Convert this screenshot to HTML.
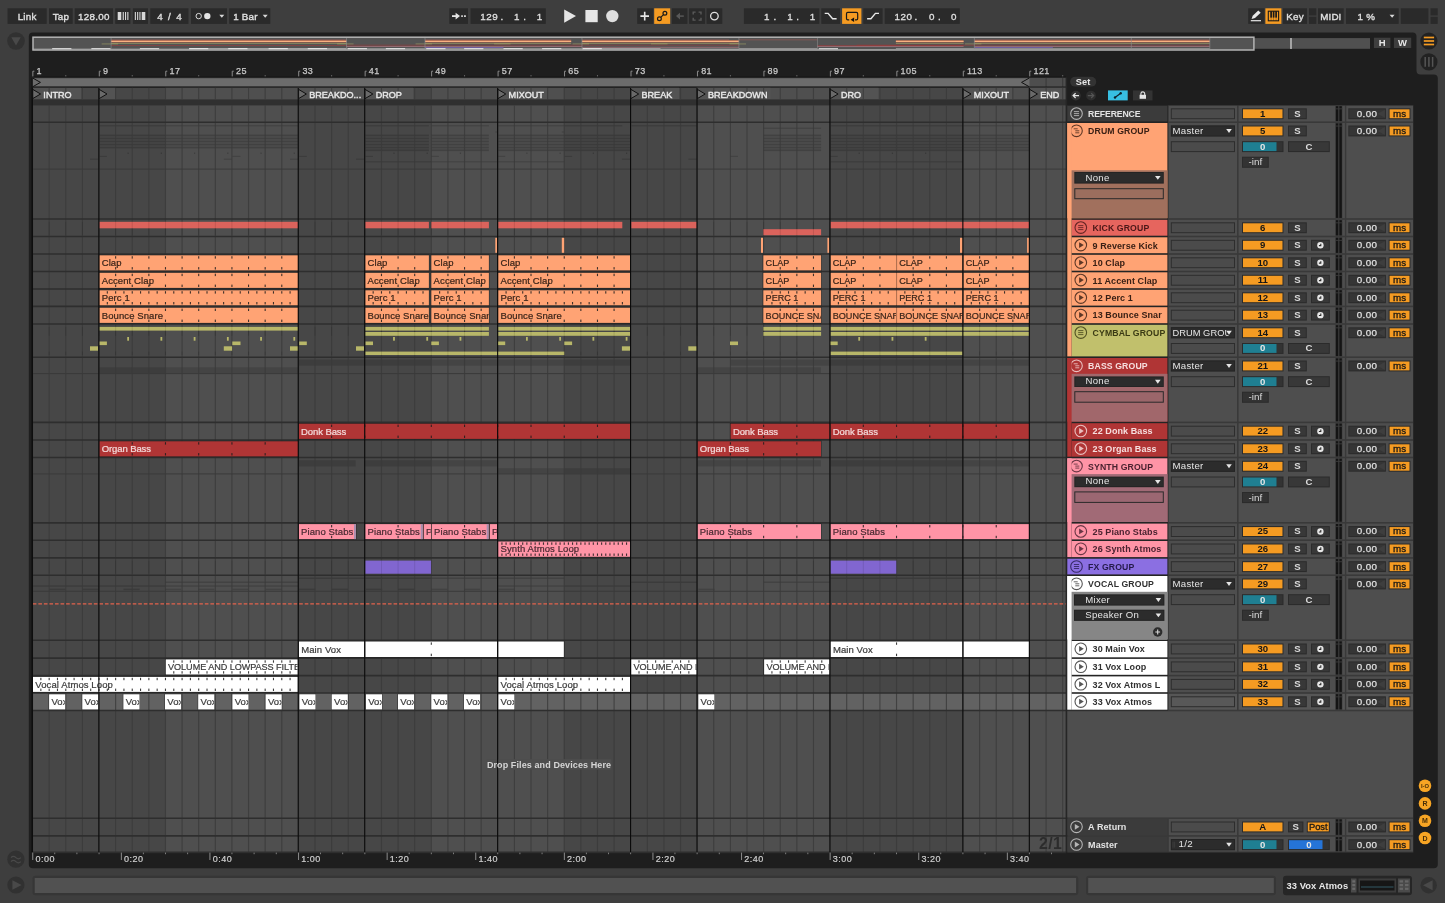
<!DOCTYPE html>
<html><head><meta charset="utf-8"><title>Live Set</title>
<style>
html,body{margin:0;padding:0;background:#3e3e3e;overflow:hidden}
body{width:1445px;height:903px;position:relative;font-family:"Liberation Sans",sans-serif}
svg{position:absolute;left:0;top:0;display:block;will-change:transform}
svg text{font-family:"Liberation Sans",sans-serif;white-space:pre}
</style></head><body>
<svg width="1445" height="903" viewBox="0 0 1445 903">
<rect x="0" y="0" width="1445" height="903" fill="#3e3e3e"/>
<path d="M33 32.4 H1412.5 a4 4 0 0 1 4 4 V70.5 a4 4 0 0 0 4 4 H1433.8 a4 4 0 0 1 4 4 V864.2 a4 4 0 0 1 -4 4 H32.8 a4 4 0 0 1 -4 -4 V36.4 a4 4 0 0 1 4 -4 Z" fill="#1e1e1e"/>
<rect x="7.5" y="8.3" width="39.2" height="15.6" fill="#2a2a2a"/>
<text x="27.1" y="19.7" font-size="9.8" fill="#e0e0e0" text-anchor="middle" letter-spacing="0.2" stroke="#e0e0e0" stroke-width="0.35">Link</text>
<rect x="49" y="8.3" width="23.7" height="15.6" fill="#2a2a2a"/>
<text x="60.85" y="19.7" font-size="9.8" fill="#e0e0e0" text-anchor="middle" letter-spacing="0.2" stroke="#e0e0e0" stroke-width="0.35">Tap</text>
<rect x="74.7" y="8.3" width="38.3" height="15.6" fill="#2a2a2a"/>
<text x="93.85" y="19.7" font-size="9.8" fill="#e0e0e0" text-anchor="middle" letter-spacing="0.25" stroke="#e0e0e0" stroke-width="0.35">128.00</text>
<rect x="115.2" y="8.3" width="15.2" height="15.6" fill="#2a2a2a"/>
<rect x="132.9" y="8.3" width="15.1" height="15.6" fill="#2a2a2a"/>
<rect x="117.7" y="12" width="3.6" height="8" fill="#d8d8d8"/>
<rect x="122.7" y="12" width="1.1" height="8" fill="#d8d8d8"/>
<rect x="125" y="12" width="1.1" height="8" fill="#d8d8d8"/>
<rect x="127.3" y="12" width="1.1" height="8" fill="#d8d8d8"/>
<rect x="134.8" y="12" width="1.1" height="8" fill="#d8d8d8"/>
<rect x="137.1" y="12" width="1.1" height="8" fill="#d8d8d8"/>
<rect x="139.4" y="12" width="1.1" height="8" fill="#d8d8d8"/>
<rect x="141.7" y="12" width="3.6" height="8" fill="#d8d8d8"/>
<rect x="150.3" y="8.3" width="38.2" height="15.6" fill="#2a2a2a"/>
<text x="169.4" y="19.7" font-size="9.8" fill="#e0e0e0" text-anchor="middle" stroke="#e0e0e0" stroke-width="0.35">4&#160;&#160;/&#160;&#160;4</text>
<rect x="191" y="8.3" width="36" height="15.6" fill="#2a2a2a"/>
<circle cx="198.7" cy="16.1" r="2.7" fill="none" stroke="#d8d8d8" stroke-width="1"/>
<circle cx="207.3" cy="16.1" r="3.2" fill="#e4e4e4"/>
<path d="M219.3 14.8 h5 l-2.5 2.9 z" fill="#d8d8d8"/>
<rect x="229.2" y="8.3" width="41.1" height="15.6" fill="#2a2a2a"/>
<text x="233.2" y="19.7" font-size="9.8" fill="#e0e0e0" letter-spacing="0.2" stroke="#e0e0e0" stroke-width="0.35">1 Bar</text>
<path d="M262.7 14.8 h5 l-2.5 2.9 z" fill="#d8d8d8"/>
<rect x="449.3" y="8.3" width="18.7" height="15.6" fill="#2a2a2a"/>
<path d="M452 16.1 h4.5" stroke="#e6e6e6" stroke-width="1.8"/><path d="M455.6 12.7 l4.4 3.4 l-4.4 3.4 z" fill="#e6e6e6"/>
<path d="M461.2 16.1 h1.7 M464 16.1 h1.9" stroke="#d0d0d0" stroke-width="1.6"/>
<rect x="470.5" y="8.3" width="75.3" height="15.6" fill="#2a2a2a"/>
<text x="498.2" y="19.7" font-size="9.8" fill="#e0e0e0" text-anchor="end" letter-spacing="0.5" stroke="#e0e0e0" stroke-width="0.3">129</text>
<text x="520" y="19.7" font-size="9.8" fill="#e0e0e0" text-anchor="end" letter-spacing="0.5" stroke="#e0e0e0" stroke-width="0.3">1</text>
<text x="542.8" y="19.7" font-size="9.8" fill="#e0e0e0" text-anchor="end" letter-spacing="0.5" stroke="#e0e0e0" stroke-width="0.3">1</text>
<text x="500.4" y="19.7" font-size="9.8" fill="#e0e0e0" stroke="#e0e0e0" stroke-width="0.3">.</text>
<text x="523.2" y="19.7" font-size="9.8" fill="#e0e0e0" stroke="#e0e0e0" stroke-width="0.3">.</text>
<path d="M564.2 9.4 L576 16.1 L564.2 22.8 Z" fill="#e6e6e6"/>
<rect x="585.4" y="10" width="12.3" height="12.2" fill="#e6e6e6"/>
<circle cx="612.3" cy="16.1" r="6.2" fill="#dedede"/>
<rect x="637.2" y="8.3" width="16" height="15.6" fill="#2a2a2a"/>
<path d="M640.4 16.1 h8.6 M644.7 11.8 v8.6" stroke="#e6e6e6" stroke-width="1.6"/>
<rect x="654.2" y="8.3" width="16" height="15.6" fill="#f59b22"/>
<path d="M660.7 17.4 L663.6 14.6" stroke="#1a1a1a" stroke-width="1.2"/><circle cx="659.4" cy="18.7" r="1.9" fill="none" stroke="#1a1a1a" stroke-width="1.2"/><circle cx="664.9" cy="13.3" r="1.9" fill="none" stroke="#1a1a1a" stroke-width="1.2"/>
<rect x="671.9" y="8.3" width="15.5" height="15.6" fill="#2a2a2a"/>
<path d="M676 16.1 l4 -3.3 v6.6 z" fill="#585858"/><path d="M679.5 16.1 h4.3" stroke="#585858" stroke-width="1.5"/>
<rect x="689.1" y="8.3" width="16" height="15.6" fill="#2a2a2a"/>
<path d="M693.2 14.5 v-2.4 h2.4 M698.6 12.1 h2.4 v2.4 M701 17.7 v2.4 h-2.4 M695.6 20.1 h-2.4 v-2.4" stroke="#5a5a5a" stroke-width="1.4" fill="none"/>
<rect x="706.5" y="8.3" width="15.8" height="15.6" fill="#2a2a2a"/>
<circle cx="714.4" cy="16.1" r="3.8" fill="none" stroke="#e0e0e0" stroke-width="1.3"/>
<rect x="743.9" y="8.3" width="75.4" height="15.6" fill="#2a2a2a"/>
<text x="770" y="19.7" font-size="9.8" fill="#e0e0e0" text-anchor="end" letter-spacing="0.5" stroke="#e0e0e0" stroke-width="0.3">1</text>
<text x="793.2" y="19.7" font-size="9.8" fill="#e0e0e0" text-anchor="end" letter-spacing="0.5" stroke="#e0e0e0" stroke-width="0.3">1</text>
<text x="815.8" y="19.7" font-size="9.8" fill="#e0e0e0" text-anchor="end" letter-spacing="0.5" stroke="#e0e0e0" stroke-width="0.3">1</text>
<text x="773.6" y="19.7" font-size="9.8" fill="#e0e0e0" stroke="#e0e0e0" stroke-width="0.3">.</text>
<text x="796.2" y="19.7" font-size="9.8" fill="#e0e0e0" stroke="#e0e0e0" stroke-width="0.3">.</text>
<rect x="821.3" y="8.3" width="18.7" height="15.6" fill="#2a2a2a"/>
<path d="M824.7 13.4 h3.4 l4.5 5.4 h4" stroke="#e8e8e8" stroke-width="1.4" fill="none"/>
<rect x="842.1" y="8.3" width="19.3" height="15.6" fill="#f59b22"/>
<path d="M849.2 19.8 h-1.4 a1.3 1.3 0 0 1 -1.3 -1.3 v-4.8 a1.3 1.3 0 0 1 1.3 -1.3 h8.6 a1.3 1.3 0 0 1 1.3 1.3 v4.8 a1.3 1.3 0 0 1 -1.3 1.3 h-1.4" stroke="#1a1a1a" stroke-width="1.2" fill="none"/><path d="M854.1 17.5 v4.6 l-3.5 -2.3 z" fill="#111"/>
<rect x="863.3" y="8.3" width="19.3" height="15.6" fill="#2a2a2a"/>
<path d="M867.1 18.8 h3.8 l4.5 -5.4 h3.6" stroke="#e8e8e8" stroke-width="1.4" fill="none"/>
<rect x="884.7" y="8.3" width="75.1" height="15.6" fill="#2a2a2a"/>
<text x="912.4" y="19.7" font-size="9.8" fill="#e0e0e0" text-anchor="end" letter-spacing="0.5" stroke="#e0e0e0" stroke-width="0.3">120</text>
<text x="935" y="19.7" font-size="9.8" fill="#e0e0e0" text-anchor="end" letter-spacing="0.5" stroke="#e0e0e0" stroke-width="0.3">0</text>
<text x="957" y="19.7" font-size="9.8" fill="#e0e0e0" text-anchor="end" letter-spacing="0.5" stroke="#e0e0e0" stroke-width="0.3">0</text>
<text x="914.6" y="19.7" font-size="9.8" fill="#e0e0e0" stroke="#e0e0e0" stroke-width="0.3">.</text>
<text x="938" y="19.7" font-size="9.8" fill="#e0e0e0" stroke="#e0e0e0" stroke-width="0.3">.</text>
<rect x="1248.2" y="8.3" width="16.2" height="15.6" fill="#2a2a2a"/>
<path d="M1251.6 18.9 l1.1 -3.2 l5.6 -5.3 l2.4 2.4 l-5.7 5.3 z" fill="#e8e8e8"/><path d="M1250.8 20.7 h10.2" stroke="#e8e8e8" stroke-width="1.2"/>
<rect x="1265.4" y="8.3" width="16" height="15.6" fill="#f59b22"/>
<rect x="1268.3" y="11.2" width="10.3" height="9.6" fill="none" stroke="#1a1a1a" stroke-width="1.1"/>
<rect x="1270.25" y="11.2" width="1.7" height="6.4" fill="#1a1a1a"/>
<line x1="1271.1" y1="17" x2="1271.1" y2="20.8" stroke="#1a1a1a" stroke-width="0.5" opacity="0.6"/>
<rect x="1272.75" y="11.2" width="1.7" height="6.4" fill="#1a1a1a"/>
<line x1="1273.6" y1="17" x2="1273.6" y2="20.8" stroke="#1a1a1a" stroke-width="0.5" opacity="0.6"/>
<rect x="1275.25" y="11.2" width="1.7" height="6.4" fill="#1a1a1a"/>
<line x1="1276.1" y1="17" x2="1276.1" y2="20.8" stroke="#1a1a1a" stroke-width="0.5" opacity="0.6"/>
<rect x="1283" y="8.3" width="24" height="15.6" fill="#2a2a2a"/>
<text x="1295" y="19.7" font-size="9.8" fill="#e0e0e0" text-anchor="middle" letter-spacing="0.2" stroke="#e0e0e0" stroke-width="0.35">Key</text>
<rect x="1309" y="8.3" width="7.3" height="7.1" fill="#2a2a2a"/>
<rect x="1309" y="16.8" width="7.3" height="7.1" fill="#2a2a2a"/>
<rect x="1318" y="8.3" width="25.7" height="15.6" fill="#2a2a2a"/>
<text x="1330.85" y="19.7" font-size="9.8" fill="#e0e0e0" text-anchor="middle" letter-spacing="0.1" stroke="#e0e0e0" stroke-width="0.35">MIDI</text>
<rect x="1346" y="8.3" width="52.7" height="15.6" fill="#2a2a2a"/>
<text x="1366.5" y="19.7" font-size="9.8" fill="#e0e0e0" text-anchor="middle" letter-spacing="0.3" stroke="#e0e0e0" stroke-width="0.35">1 %</text>
<path d="M1389.6 14.8 h5 l-2.5 2.9 z" fill="#d8d8d8"/>
<rect x="1400.8" y="8.3" width="27.6" height="15.6" fill="#2a2a2a"/>
<rect x="1430.5" y="8.3" width="7.2" height="7.1" fill="#2a2a2a"/>
<rect x="1430.5" y="16.8" width="7.2" height="7.1" fill="#2a2a2a"/>
<circle cx="16" cy="41" r="8.8" fill="#313131"/><path d="M11.3 37.2 h9.4 l-4.7 8.2 z" fill="#494949"/>
<circle cx="1428.9" cy="41" r="8.6" fill="#222"/>
<line x1="1423.8" y1="37.5" x2="1434.1" y2="37.5" stroke="#f59b22" stroke-width="1.7"/>
<line x1="1423.8" y1="41" x2="1434.1" y2="41" stroke="#f59b22" stroke-width="1.7"/>
<line x1="1423.8" y1="44.5" x2="1434.1" y2="44.5" stroke="#f59b22" stroke-width="1.7"/>
<circle cx="1428.9" cy="61.9" r="8.6" fill="#222"/>
<line x1="1425.2" y1="57" x2="1425.2" y2="66.8" stroke="#555" stroke-width="1.5"/>
<line x1="1428.9" y1="57" x2="1428.9" y2="66.8" stroke="#555" stroke-width="1.5"/>
<line x1="1432.6" y1="57" x2="1432.6" y2="66.8" stroke="#555" stroke-width="1.5"/>
<circle cx="15.9" cy="859.2" r="8.6" fill="#313131"/><path d="M11 857.6 q2.4 -2.6 4.9 0 t4.9 0 M11 861.6 q2.4 -2.6 4.9 0 t4.9 0" stroke="#494949" stroke-width="1.2" fill="none"/>
<circle cx="15.9" cy="885" r="8.6" fill="#313131"/><path d="M12.4 880.2 L21.6 885 L12.4 889.8 Z" fill="#494949"/>
<circle cx="1428.7" cy="885.3" r="8.2" fill="#313131"/><path d="M1432.6 880.3 L1423 885.3 L1432.6 890.3 Z" fill="#494949"/>
<circle cx="1425" cy="785.7" r="6.3" fill="#f7a524"/>
<text x="1425" y="788.2" font-size="5.8" fill="#4a3008" font-weight="bold" text-anchor="middle">I-O</text>
<circle cx="1425" cy="803.4" r="6.3" fill="#f7a524"/>
<text x="1425" y="805.9" font-size="7" fill="#4a3008" font-weight="bold" text-anchor="middle">R</text>
<circle cx="1425" cy="820.7" r="6.3" fill="#f7a524"/>
<text x="1425" y="823.2" font-size="7" fill="#4a3008" font-weight="bold" text-anchor="middle">M</text>
<circle cx="1425" cy="838" r="6.3" fill="#f7a524"/>
<text x="1425" y="840.5" font-size="7" fill="#4a3008" font-weight="bold" text-anchor="middle">D</text>
<rect x="32.5" y="875.8" width="1045.8" height="19.4" fill="#363636" rx="3"/>
<rect x="34.7" y="878" width="1041.4" height="15" fill="#515151"/>
<rect x="1086" y="875.8" width="190" height="19.4" fill="#363636" rx="3"/>
<rect x="1088.2" y="878" width="185.6" height="15" fill="#515151"/>
<rect x="1283" y="875.8" width="129" height="19.4" fill="#262626" rx="3"/>
<text x="1286.5" y="889.3" font-size="9.3" fill="#e8e8e8" font-weight="bold" letter-spacing="0.1">33 Vox Atmos</text>
<rect x="1351" y="878.5" width="5.5" height="14" fill="#4a4a4a"/>
<rect x="1358.5" y="878.5" width="37.5" height="14" fill="#3c3c3c"/>
<rect x="1360" y="880.5" width="34.5" height="10" fill="#161616"/>
<rect x="1398" y="878.5" width="12" height="14" fill="#4a4a4a"/>
<rect x="1352.3" y="880.3" width="2.9" height="2.2" fill="#6a6a6a"/>
<rect x="1399.5" y="880.3" width="3.5" height="2.2" fill="#666"/>
<rect x="1405" y="880.3" width="3.5" height="2.2" fill="#666"/>
<rect x="1352.3" y="884" width="2.9" height="2.2" fill="#6a6a6a"/>
<rect x="1399.5" y="884" width="3.5" height="2.2" fill="#666"/>
<rect x="1405" y="884" width="3.5" height="2.2" fill="#666"/>
<rect x="1352.3" y="887.7" width="2.9" height="2.2" fill="#6a6a6a"/>
<rect x="1399.5" y="887.7" width="3.5" height="2.2" fill="#666"/>
<rect x="1405" y="887.7" width="3.5" height="2.2" fill="#666"/>
<line x1="1361" y1="887" x2="1393.5" y2="887" stroke="#3a6a7a" stroke-width="0.8"/>
<path d="M32.85 76.6 V71.2 h1.5" stroke="#8a8a8a" stroke-width="1" fill="none"/>
<text x="36.55" y="74.3" font-size="9" fill="#cacaca" letter-spacing="0.45" stroke="#cacaca" stroke-width="0.25">1</text>
<path d="M99.31 76.6 V71.2 h1.5" stroke="#8a8a8a" stroke-width="1" fill="none"/>
<text x="103.01" y="74.3" font-size="9" fill="#cacaca" letter-spacing="0.45" stroke="#cacaca" stroke-width="0.25">9</text>
<path d="M165.77 76.6 V71.2 h1.5" stroke="#8a8a8a" stroke-width="1" fill="none"/>
<text x="169.47" y="74.3" font-size="9" fill="#cacaca" letter-spacing="0.45" stroke="#cacaca" stroke-width="0.25">17</text>
<path d="M232.23 76.6 V71.2 h1.5" stroke="#8a8a8a" stroke-width="1" fill="none"/>
<text x="235.93" y="74.3" font-size="9" fill="#cacaca" letter-spacing="0.45" stroke="#cacaca" stroke-width="0.25">25</text>
<path d="M298.69 76.6 V71.2 h1.5" stroke="#8a8a8a" stroke-width="1" fill="none"/>
<text x="302.39" y="74.3" font-size="9" fill="#cacaca" letter-spacing="0.45" stroke="#cacaca" stroke-width="0.25">33</text>
<path d="M365.15 76.6 V71.2 h1.5" stroke="#8a8a8a" stroke-width="1" fill="none"/>
<text x="368.85" y="74.3" font-size="9" fill="#cacaca" letter-spacing="0.45" stroke="#cacaca" stroke-width="0.25">41</text>
<path d="M431.61 76.6 V71.2 h1.5" stroke="#8a8a8a" stroke-width="1" fill="none"/>
<text x="435.31" y="74.3" font-size="9" fill="#cacaca" letter-spacing="0.45" stroke="#cacaca" stroke-width="0.25">49</text>
<path d="M498.08 76.6 V71.2 h1.5" stroke="#8a8a8a" stroke-width="1" fill="none"/>
<text x="501.78" y="74.3" font-size="9" fill="#cacaca" letter-spacing="0.45" stroke="#cacaca" stroke-width="0.25">57</text>
<path d="M564.54 76.6 V71.2 h1.5" stroke="#8a8a8a" stroke-width="1" fill="none"/>
<text x="568.24" y="74.3" font-size="9" fill="#cacaca" letter-spacing="0.45" stroke="#cacaca" stroke-width="0.25">65</text>
<path d="M631 76.6 V71.2 h1.5" stroke="#8a8a8a" stroke-width="1" fill="none"/>
<text x="634.7" y="74.3" font-size="9" fill="#cacaca" letter-spacing="0.45" stroke="#cacaca" stroke-width="0.25">73</text>
<path d="M697.46 76.6 V71.2 h1.5" stroke="#8a8a8a" stroke-width="1" fill="none"/>
<text x="701.16" y="74.3" font-size="9" fill="#cacaca" letter-spacing="0.45" stroke="#cacaca" stroke-width="0.25">81</text>
<path d="M763.92 76.6 V71.2 h1.5" stroke="#8a8a8a" stroke-width="1" fill="none"/>
<text x="767.62" y="74.3" font-size="9" fill="#cacaca" letter-spacing="0.45" stroke="#cacaca" stroke-width="0.25">89</text>
<path d="M830.38 76.6 V71.2 h1.5" stroke="#8a8a8a" stroke-width="1" fill="none"/>
<text x="834.08" y="74.3" font-size="9" fill="#cacaca" letter-spacing="0.45" stroke="#cacaca" stroke-width="0.25">97</text>
<path d="M896.84 76.6 V71.2 h1.5" stroke="#8a8a8a" stroke-width="1" fill="none"/>
<text x="900.54" y="74.3" font-size="9" fill="#cacaca" letter-spacing="0.45" stroke="#cacaca" stroke-width="0.25">105</text>
<path d="M963.3 76.6 V71.2 h1.5" stroke="#8a8a8a" stroke-width="1" fill="none"/>
<text x="967" y="74.3" font-size="9" fill="#cacaca" letter-spacing="0.45" stroke="#cacaca" stroke-width="0.25">113</text>
<path d="M1029.76 76.6 V71.2 h1.5" stroke="#8a8a8a" stroke-width="1" fill="none"/>
<text x="1033.46" y="74.3" font-size="9" fill="#cacaca" letter-spacing="0.45" stroke="#cacaca" stroke-width="0.25">121</text>
<rect x="65.28" y="75.2" width="1" height="1.3" fill="#777"/>
<rect x="131.74" y="75.2" width="1" height="1.3" fill="#777"/>
<rect x="198.2" y="75.2" width="1" height="1.3" fill="#777"/>
<rect x="264.66" y="75.2" width="1" height="1.3" fill="#777"/>
<rect x="331.12" y="75.2" width="1" height="1.3" fill="#777"/>
<rect x="397.58" y="75.2" width="1" height="1.3" fill="#777"/>
<rect x="464.05" y="75.2" width="1" height="1.3" fill="#777"/>
<rect x="530.51" y="75.2" width="1" height="1.3" fill="#777"/>
<rect x="596.97" y="75.2" width="1" height="1.3" fill="#777"/>
<rect x="663.43" y="75.2" width="1" height="1.3" fill="#777"/>
<rect x="729.89" y="75.2" width="1" height="1.3" fill="#777"/>
<rect x="796.35" y="75.2" width="1" height="1.3" fill="#777"/>
<rect x="862.81" y="75.2" width="1" height="1.3" fill="#777"/>
<rect x="929.27" y="75.2" width="1" height="1.3" fill="#777"/>
<rect x="995.73" y="75.2" width="1" height="1.3" fill="#777"/>
<rect x="1062.19" y="75.2" width="1" height="1.3" fill="#777"/>
<line x1="32.3" y1="77.2" x2="1066" y2="77.2" stroke="#111" stroke-width="1"/>
<rect x="32.3" y="77.7" width="1033.7" height="9.3" fill="#4e4e4e"/>
<line x1="1046.08" y1="77.8" x2="1046.08" y2="87" stroke="#3a3a3a" stroke-width="1.2" opacity="0.9"/>
<line x1="1062.69" y1="77.8" x2="1062.69" y2="87" stroke="#3a3a3a" stroke-width="1.2" opacity="0.9"/>
<rect x="32.55" y="78.4" width="996.91" height="8" fill="#6c6c6c"/>
<path d="M32.85 78.1 L40.45 82.4 L32.85 86.7" fill="none" stroke="#111" stroke-width="1"/>
<path d="M1029.16 78.1 L1021.56 82.4 L1029.16 86.7" fill="none" stroke="#111" stroke-width="1"/>
<line x1="32.3" y1="87.2" x2="1066" y2="87.2" stroke="#1a1a1a" stroke-width="1.2"/>
<rect x="32.3" y="87.8" width="1033.7" height="764.4" fill="#474747"/>
<rect x="165.47" y="87.8" width="132.92" height="764.4" fill="#4f4f4f"/>
<rect x="431.31" y="87.8" width="132.92" height="764.4" fill="#4f4f4f"/>
<rect x="697.16" y="87.8" width="132.92" height="764.4" fill="#4f4f4f"/>
<rect x="963" y="87.8" width="103" height="764.4" fill="#4f4f4f"/>
<rect x="32.55" y="87.8" width="48.5" height="11.6" fill="#535353"/>
<rect x="99.01" y="87.8" width="16" height="11.6" fill="#535353"/>
<rect x="298.39" y="87.8" width="65.8" height="11.6" fill="#535353"/>
<rect x="364.85" y="87.8" width="48.5" height="11.6" fill="#535353"/>
<rect x="497.78" y="87.8" width="49.11" height="11.6" fill="#535353"/>
<rect x="630.7" y="87.8" width="48.5" height="11.6" fill="#535353"/>
<rect x="697.16" y="87.8" width="73.32" height="11.6" fill="#535353"/>
<rect x="830.08" y="87.8" width="48.5" height="11.6" fill="#535353"/>
<rect x="963" y="87.8" width="49.11" height="11.6" fill="#535353"/>
<rect x="1029.46" y="87.8" width="36.54" height="11.6" fill="#535353"/>
<rect x="32.3" y="99.4" width="1033.7" height="6" fill="#303030"/>
<rect x="32.3" y="693" width="1033.7" height="17.5" fill="#626262"/>
<rect x="99.41" y="134.6" width="198.58" height="1.7" fill="#000" opacity="0.17"/>
<rect x="99.41" y="137.6" width="198.58" height="1.7" fill="#000" opacity="0.17"/>
<rect x="99.41" y="140.6" width="198.58" height="1.7" fill="#000" opacity="0.17"/>
<rect x="99.41" y="143.7" width="198.58" height="1.7" fill="#000" opacity="0.17"/>
<rect x="99.41" y="146.7" width="198.58" height="1.7" fill="#000" opacity="0.17"/>
<rect x="365.25" y="134.6" width="63.65" height="1.7" fill="#000" opacity="0.17"/>
<rect x="365.25" y="137.6" width="63.65" height="1.7" fill="#000" opacity="0.17"/>
<rect x="365.25" y="140.6" width="63.65" height="1.7" fill="#000" opacity="0.17"/>
<rect x="365.25" y="143.7" width="63.65" height="1.7" fill="#000" opacity="0.17"/>
<rect x="365.25" y="146.7" width="63.65" height="1.7" fill="#000" opacity="0.17"/>
<rect x="365.25" y="149.4" width="63.65" height="1.7" fill="#000" opacity="0.17"/>
<rect x="431.3" y="134.6" width="57.6" height="1.7" fill="#000" opacity="0.17"/>
<rect x="431.3" y="137.6" width="57.6" height="1.7" fill="#000" opacity="0.17"/>
<rect x="431.3" y="140.6" width="57.6" height="1.7" fill="#000" opacity="0.17"/>
<rect x="431.3" y="143.7" width="57.6" height="1.7" fill="#000" opacity="0.17"/>
<rect x="431.3" y="146.7" width="57.6" height="1.7" fill="#000" opacity="0.17"/>
<rect x="431.3" y="149.4" width="57.6" height="1.7" fill="#000" opacity="0.17"/>
<rect x="498.18" y="134.6" width="132.12" height="1.7" fill="#000" opacity="0.17"/>
<rect x="498.18" y="137.6" width="132.12" height="1.7" fill="#000" opacity="0.17"/>
<rect x="498.18" y="140.6" width="132.12" height="1.7" fill="#000" opacity="0.17"/>
<rect x="498.18" y="143.7" width="132.12" height="1.7" fill="#000" opacity="0.17"/>
<rect x="498.18" y="146.7" width="132.12" height="1.7" fill="#000" opacity="0.17"/>
<rect x="498.18" y="149.4" width="132.12" height="1.7" fill="#000" opacity="0.17"/>
<rect x="763.3" y="134.6" width="57.8" height="1.7" fill="#000" opacity="0.17"/>
<rect x="763.3" y="137.6" width="57.8" height="1.7" fill="#000" opacity="0.17"/>
<rect x="763.3" y="140.6" width="57.8" height="1.7" fill="#000" opacity="0.17"/>
<rect x="763.3" y="143.7" width="57.8" height="1.7" fill="#000" opacity="0.17"/>
<rect x="763.3" y="146.7" width="57.8" height="1.7" fill="#000" opacity="0.17"/>
<rect x="763.3" y="149.4" width="57.8" height="1.7" fill="#000" opacity="0.17"/>
<rect x="830.48" y="134.6" width="198.58" height="1.7" fill="#000" opacity="0.17"/>
<rect x="830.48" y="137.6" width="198.58" height="1.7" fill="#000" opacity="0.17"/>
<rect x="830.48" y="140.6" width="198.58" height="1.7" fill="#000" opacity="0.17"/>
<rect x="830.48" y="143.7" width="198.58" height="1.7" fill="#000" opacity="0.17"/>
<rect x="830.48" y="146.7" width="198.58" height="1.7" fill="#000" opacity="0.17"/>
<rect x="830.48" y="149.4" width="198.58" height="1.7" fill="#000" opacity="0.17"/>
<rect x="99.41" y="125.1" width="198.58" height="1.3" fill="#000" opacity="0.15"/>
<rect x="365.25" y="125.1" width="63.65" height="1.3" fill="#000" opacity="0.15"/>
<rect x="431.3" y="125.1" width="57.6" height="1.3" fill="#000" opacity="0.15"/>
<rect x="498.18" y="125.1" width="124.12" height="1.3" fill="#000" opacity="0.15"/>
<rect x="631.3" y="125.1" width="65.5" height="1.3" fill="#000" opacity="0.15"/>
<rect x="830.48" y="125.1" width="198.58" height="1.3" fill="#000" opacity="0.15"/>
<rect x="763.3" y="127.6" width="57.8" height="1.3" fill="#000" opacity="0.15"/>
<rect x="127.53" y="152.5" width="1.2" height="1.5" fill="#000" opacity="0.2"/>
<rect x="160.76" y="152.5" width="1.2" height="1.5" fill="#000" opacity="0.2"/>
<rect x="193.99" y="152.5" width="1.2" height="1.5" fill="#000" opacity="0.2"/>
<rect x="227.22" y="152.5" width="1.2" height="1.5" fill="#000" opacity="0.2"/>
<rect x="260.46" y="152.5" width="1.2" height="1.5" fill="#000" opacity="0.2"/>
<rect x="293.69" y="152.5" width="1.2" height="1.5" fill="#000" opacity="0.2"/>
<rect x="393.38" y="152.5" width="1.2" height="1.5" fill="#000" opacity="0.2"/>
<rect x="426.61" y="152.5" width="1.2" height="1.5" fill="#000" opacity="0.2"/>
<rect x="459.84" y="152.5" width="1.2" height="1.5" fill="#000" opacity="0.2"/>
<rect x="526.3" y="152.5" width="1.2" height="1.5" fill="#000" opacity="0.2"/>
<rect x="559.53" y="152.5" width="1.2" height="1.5" fill="#000" opacity="0.2"/>
<rect x="592.76" y="152.5" width="1.2" height="1.5" fill="#000" opacity="0.2"/>
<rect x="625.99" y="152.5" width="1.2" height="1.5" fill="#000" opacity="0.2"/>
<rect x="858.6" y="152.5" width="1.2" height="1.5" fill="#000" opacity="0.2"/>
<rect x="891.83" y="152.5" width="1.2" height="1.5" fill="#000" opacity="0.2"/>
<rect x="925.06" y="152.5" width="1.2" height="1.5" fill="#000" opacity="0.2"/>
<rect x="99.3" y="155.8" width="7.6" height="1.2" fill="#000" opacity="0.15"/>
<rect x="232.3" y="155.8" width="8.2" height="1.2" fill="#000" opacity="0.15"/>
<rect x="299.2" y="155.8" width="7.6" height="1.2" fill="#000" opacity="0.15"/>
<rect x="365.4" y="155.8" width="7.6" height="1.2" fill="#000" opacity="0.15"/>
<rect x="431.3" y="155.8" width="7.6" height="1.2" fill="#000" opacity="0.15"/>
<rect x="498" y="155.8" width="7.2" height="1.2" fill="#000" opacity="0.15"/>
<rect x="564.3" y="155.8" width="7.8" height="1.2" fill="#000" opacity="0.15"/>
<rect x="730" y="155.8" width="8" height="1.2" fill="#000" opacity="0.15"/>
<rect x="830.1" y="155.8" width="7.6" height="1.2" fill="#000" opacity="0.15"/>
<rect x="90" y="158.6" width="8" height="1.2" fill="#000" opacity="0.15"/>
<rect x="223.8" y="158.6" width="8.3" height="1.2" fill="#000" opacity="0.15"/>
<rect x="290" y="158.6" width="8.3" height="1.2" fill="#000" opacity="0.15"/>
<rect x="356" y="158.6" width="8" height="1.2" fill="#000" opacity="0.15"/>
<rect x="621.9" y="158.6" width="8.4" height="1.2" fill="#000" opacity="0.15"/>
<rect x="688.3" y="158.6" width="8.5" height="1.2" fill="#000" opacity="0.15"/>
<rect x="365.25" y="161.2" width="199.05" height="1.2" fill="#000" opacity="0.15"/>
<rect x="830.48" y="161.2" width="132.22" height="1.2" fill="#000" opacity="0.15"/>
<rect x="495.3" y="131.4" width="1.9" height="1.2" fill="#000" opacity="0.15"/>
<rect x="561.8" y="131.4" width="2.4" height="1.2" fill="#000" opacity="0.15"/>
<rect x="298.39" y="359.5" width="332.3" height="6.2" fill="#000" opacity="0.13"/>
<rect x="730.39" y="359.5" width="299.07" height="6.2" fill="#000" opacity="0.13"/>
<rect x="99.01" y="367.3" width="199.38" height="5.9" fill="#000" opacity="0.13"/>
<rect x="697.16" y="367.3" width="123.78" height="5.9" fill="#000" opacity="0.13"/>
<rect x="298.39" y="460.2" width="57.32" height="6.3" fill="#000" opacity="0.13"/>
<rect x="364.85" y="460.2" width="132.92" height="6.3" fill="#000" opacity="0.13"/>
<rect x="697.16" y="460.2" width="123.78" height="6.3" fill="#000" opacity="0.13"/>
<rect x="830.08" y="460.2" width="199.38" height="6.3" fill="#000" opacity="0.13"/>
<rect x="497.78" y="468.2" width="132.92" height="5.4" fill="#000" opacity="0.13"/>
<rect x="298.39" y="577.5" width="265.84" height="1.5" fill="#000" opacity="0.16"/>
<rect x="830.08" y="577.5" width="199.38" height="1.5" fill="#000" opacity="0.16"/>
<rect x="165.47" y="581.5" width="132.92" height="1.5" fill="#000" opacity="0.16"/>
<rect x="630.7" y="581.5" width="66.46" height="1.5" fill="#000" opacity="0.16"/>
<rect x="763.62" y="581.5" width="66.46" height="1.5" fill="#000" opacity="0.16"/>
<rect x="32.55" y="585.3" width="265.84" height="1.5" fill="#000" opacity="0.16"/>
<rect x="497.78" y="585.3" width="132.92" height="1.5" fill="#000" opacity="0.16"/>
<rect x="49.1" y="588.6" width="16.3" height="1.6" fill="#000" opacity="0.16"/>
<rect x="82.3" y="588.6" width="16.3" height="1.6" fill="#000" opacity="0.16"/>
<rect x="123.4" y="588.6" width="16.3" height="1.6" fill="#000" opacity="0.16"/>
<rect x="165" y="588.6" width="16.3" height="1.6" fill="#000" opacity="0.16"/>
<rect x="198.2" y="588.6" width="16.3" height="1.6" fill="#000" opacity="0.16"/>
<rect x="232.4" y="588.6" width="16.3" height="1.6" fill="#000" opacity="0.16"/>
<rect x="265.6" y="588.6" width="16.3" height="1.6" fill="#000" opacity="0.16"/>
<rect x="299" y="588.6" width="16.3" height="1.6" fill="#000" opacity="0.16"/>
<rect x="331.7" y="588.6" width="16.3" height="1.6" fill="#000" opacity="0.16"/>
<rect x="365.9" y="588.6" width="16.3" height="1.6" fill="#000" opacity="0.16"/>
<rect x="398" y="588.6" width="16.3" height="1.6" fill="#000" opacity="0.16"/>
<rect x="431.3" y="588.6" width="16.3" height="1.6" fill="#000" opacity="0.16"/>
<rect x="464" y="588.6" width="16.3" height="1.6" fill="#000" opacity="0.16"/>
<rect x="498.3" y="588.6" width="16.3" height="1.6" fill="#000" opacity="0.16"/>
<rect x="698.3" y="588.6" width="16.3" height="1.6" fill="#000" opacity="0.16"/>
<line x1="32.55" y1="87.8" x2="32.55" y2="99.4" stroke="#3a3a3a" stroke-width="1.15" opacity="0.8"/>
<line x1="32.55" y1="105.2" x2="32.55" y2="852.2" stroke="#3a3a3a" stroke-width="1.15" opacity="0.8"/>
<line x1="49.17" y1="87.8" x2="49.17" y2="99.4" stroke="#3a3a3a" stroke-width="1.15" opacity="0.8"/>
<line x1="49.17" y1="105.2" x2="49.17" y2="852.2" stroke="#3a3a3a" stroke-width="1.15" opacity="0.8"/>
<line x1="65.78" y1="87.8" x2="65.78" y2="99.4" stroke="#3a3a3a" stroke-width="1.15" opacity="0.8"/>
<line x1="65.78" y1="105.2" x2="65.78" y2="852.2" stroke="#3a3a3a" stroke-width="1.15" opacity="0.8"/>
<line x1="82.4" y1="87.8" x2="82.4" y2="99.4" stroke="#3a3a3a" stroke-width="1.15" opacity="0.8"/>
<line x1="82.4" y1="105.2" x2="82.4" y2="852.2" stroke="#3a3a3a" stroke-width="1.15" opacity="0.8"/>
<line x1="99.01" y1="87.8" x2="99.01" y2="99.4" stroke="#3a3a3a" stroke-width="1.15" opacity="0.8"/>
<line x1="99.01" y1="105.2" x2="99.01" y2="852.2" stroke="#3a3a3a" stroke-width="1.15" opacity="0.8"/>
<line x1="115.63" y1="87.8" x2="115.63" y2="99.4" stroke="#3a3a3a" stroke-width="1.15" opacity="0.8"/>
<line x1="115.63" y1="105.2" x2="115.63" y2="852.2" stroke="#3a3a3a" stroke-width="1.15" opacity="0.8"/>
<line x1="132.24" y1="87.8" x2="132.24" y2="99.4" stroke="#3a3a3a" stroke-width="1.15" opacity="0.8"/>
<line x1="132.24" y1="105.2" x2="132.24" y2="852.2" stroke="#3a3a3a" stroke-width="1.15" opacity="0.8"/>
<line x1="148.86" y1="87.8" x2="148.86" y2="99.4" stroke="#3a3a3a" stroke-width="1.15" opacity="0.8"/>
<line x1="148.86" y1="105.2" x2="148.86" y2="852.2" stroke="#3a3a3a" stroke-width="1.15" opacity="0.8"/>
<line x1="165.47" y1="87.8" x2="165.47" y2="99.4" stroke="#3a3a3a" stroke-width="1.15" opacity="0.8"/>
<line x1="165.47" y1="105.2" x2="165.47" y2="852.2" stroke="#3a3a3a" stroke-width="1.15" opacity="0.8"/>
<line x1="182.09" y1="87.8" x2="182.09" y2="99.4" stroke="#3a3a3a" stroke-width="1.15" opacity="0.8"/>
<line x1="182.09" y1="105.2" x2="182.09" y2="852.2" stroke="#3a3a3a" stroke-width="1.15" opacity="0.8"/>
<line x1="198.7" y1="87.8" x2="198.7" y2="99.4" stroke="#3a3a3a" stroke-width="1.15" opacity="0.8"/>
<line x1="198.7" y1="105.2" x2="198.7" y2="852.2" stroke="#3a3a3a" stroke-width="1.15" opacity="0.8"/>
<line x1="215.32" y1="87.8" x2="215.32" y2="99.4" stroke="#3a3a3a" stroke-width="1.15" opacity="0.8"/>
<line x1="215.32" y1="105.2" x2="215.32" y2="852.2" stroke="#3a3a3a" stroke-width="1.15" opacity="0.8"/>
<line x1="231.93" y1="87.8" x2="231.93" y2="99.4" stroke="#3a3a3a" stroke-width="1.15" opacity="0.8"/>
<line x1="231.93" y1="105.2" x2="231.93" y2="852.2" stroke="#3a3a3a" stroke-width="1.15" opacity="0.8"/>
<line x1="248.55" y1="87.8" x2="248.55" y2="99.4" stroke="#3a3a3a" stroke-width="1.15" opacity="0.8"/>
<line x1="248.55" y1="105.2" x2="248.55" y2="852.2" stroke="#3a3a3a" stroke-width="1.15" opacity="0.8"/>
<line x1="265.16" y1="87.8" x2="265.16" y2="99.4" stroke="#3a3a3a" stroke-width="1.15" opacity="0.8"/>
<line x1="265.16" y1="105.2" x2="265.16" y2="852.2" stroke="#3a3a3a" stroke-width="1.15" opacity="0.8"/>
<line x1="281.78" y1="87.8" x2="281.78" y2="99.4" stroke="#3a3a3a" stroke-width="1.15" opacity="0.8"/>
<line x1="281.78" y1="105.2" x2="281.78" y2="852.2" stroke="#3a3a3a" stroke-width="1.15" opacity="0.8"/>
<line x1="298.39" y1="87.8" x2="298.39" y2="99.4" stroke="#3a3a3a" stroke-width="1.15" opacity="0.8"/>
<line x1="298.39" y1="105.2" x2="298.39" y2="852.2" stroke="#3a3a3a" stroke-width="1.15" opacity="0.8"/>
<line x1="315.01" y1="87.8" x2="315.01" y2="99.4" stroke="#3a3a3a" stroke-width="1.15" opacity="0.8"/>
<line x1="315.01" y1="105.2" x2="315.01" y2="852.2" stroke="#3a3a3a" stroke-width="1.15" opacity="0.8"/>
<line x1="331.62" y1="87.8" x2="331.62" y2="99.4" stroke="#3a3a3a" stroke-width="1.15" opacity="0.8"/>
<line x1="331.62" y1="105.2" x2="331.62" y2="852.2" stroke="#3a3a3a" stroke-width="1.15" opacity="0.8"/>
<line x1="348.24" y1="87.8" x2="348.24" y2="99.4" stroke="#3a3a3a" stroke-width="1.15" opacity="0.8"/>
<line x1="348.24" y1="105.2" x2="348.24" y2="852.2" stroke="#3a3a3a" stroke-width="1.15" opacity="0.8"/>
<line x1="364.85" y1="87.8" x2="364.85" y2="99.4" stroke="#3a3a3a" stroke-width="1.15" opacity="0.8"/>
<line x1="364.85" y1="105.2" x2="364.85" y2="852.2" stroke="#3a3a3a" stroke-width="1.15" opacity="0.8"/>
<line x1="381.47" y1="87.8" x2="381.47" y2="99.4" stroke="#3a3a3a" stroke-width="1.15" opacity="0.8"/>
<line x1="381.47" y1="105.2" x2="381.47" y2="852.2" stroke="#3a3a3a" stroke-width="1.15" opacity="0.8"/>
<line x1="398.08" y1="87.8" x2="398.08" y2="99.4" stroke="#3a3a3a" stroke-width="1.15" opacity="0.8"/>
<line x1="398.08" y1="105.2" x2="398.08" y2="852.2" stroke="#3a3a3a" stroke-width="1.15" opacity="0.8"/>
<line x1="414.7" y1="87.8" x2="414.7" y2="99.4" stroke="#3a3a3a" stroke-width="1.15" opacity="0.8"/>
<line x1="414.7" y1="105.2" x2="414.7" y2="852.2" stroke="#3a3a3a" stroke-width="1.15" opacity="0.8"/>
<line x1="431.31" y1="87.8" x2="431.31" y2="99.4" stroke="#3a3a3a" stroke-width="1.15" opacity="0.8"/>
<line x1="431.31" y1="105.2" x2="431.31" y2="852.2" stroke="#3a3a3a" stroke-width="1.15" opacity="0.8"/>
<line x1="447.93" y1="87.8" x2="447.93" y2="99.4" stroke="#3a3a3a" stroke-width="1.15" opacity="0.8"/>
<line x1="447.93" y1="105.2" x2="447.93" y2="852.2" stroke="#3a3a3a" stroke-width="1.15" opacity="0.8"/>
<line x1="464.55" y1="87.8" x2="464.55" y2="99.4" stroke="#3a3a3a" stroke-width="1.15" opacity="0.8"/>
<line x1="464.55" y1="105.2" x2="464.55" y2="852.2" stroke="#3a3a3a" stroke-width="1.15" opacity="0.8"/>
<line x1="481.16" y1="87.8" x2="481.16" y2="99.4" stroke="#3a3a3a" stroke-width="1.15" opacity="0.8"/>
<line x1="481.16" y1="105.2" x2="481.16" y2="852.2" stroke="#3a3a3a" stroke-width="1.15" opacity="0.8"/>
<line x1="497.78" y1="87.8" x2="497.78" y2="99.4" stroke="#3a3a3a" stroke-width="1.15" opacity="0.8"/>
<line x1="497.78" y1="105.2" x2="497.78" y2="852.2" stroke="#3a3a3a" stroke-width="1.15" opacity="0.8"/>
<line x1="514.39" y1="87.8" x2="514.39" y2="99.4" stroke="#3a3a3a" stroke-width="1.15" opacity="0.8"/>
<line x1="514.39" y1="105.2" x2="514.39" y2="852.2" stroke="#3a3a3a" stroke-width="1.15" opacity="0.8"/>
<line x1="531.01" y1="87.8" x2="531.01" y2="99.4" stroke="#3a3a3a" stroke-width="1.15" opacity="0.8"/>
<line x1="531.01" y1="105.2" x2="531.01" y2="852.2" stroke="#3a3a3a" stroke-width="1.15" opacity="0.8"/>
<line x1="547.62" y1="87.8" x2="547.62" y2="99.4" stroke="#3a3a3a" stroke-width="1.15" opacity="0.8"/>
<line x1="547.62" y1="105.2" x2="547.62" y2="852.2" stroke="#3a3a3a" stroke-width="1.15" opacity="0.8"/>
<line x1="564.24" y1="87.8" x2="564.24" y2="99.4" stroke="#3a3a3a" stroke-width="1.15" opacity="0.8"/>
<line x1="564.24" y1="105.2" x2="564.24" y2="852.2" stroke="#3a3a3a" stroke-width="1.15" opacity="0.8"/>
<line x1="580.85" y1="87.8" x2="580.85" y2="99.4" stroke="#3a3a3a" stroke-width="1.15" opacity="0.8"/>
<line x1="580.85" y1="105.2" x2="580.85" y2="852.2" stroke="#3a3a3a" stroke-width="1.15" opacity="0.8"/>
<line x1="597.47" y1="87.8" x2="597.47" y2="99.4" stroke="#3a3a3a" stroke-width="1.15" opacity="0.8"/>
<line x1="597.47" y1="105.2" x2="597.47" y2="852.2" stroke="#3a3a3a" stroke-width="1.15" opacity="0.8"/>
<line x1="614.08" y1="87.8" x2="614.08" y2="99.4" stroke="#3a3a3a" stroke-width="1.15" opacity="0.8"/>
<line x1="614.08" y1="105.2" x2="614.08" y2="852.2" stroke="#3a3a3a" stroke-width="1.15" opacity="0.8"/>
<line x1="630.7" y1="87.8" x2="630.7" y2="99.4" stroke="#3a3a3a" stroke-width="1.15" opacity="0.8"/>
<line x1="630.7" y1="105.2" x2="630.7" y2="852.2" stroke="#3a3a3a" stroke-width="1.15" opacity="0.8"/>
<line x1="647.31" y1="87.8" x2="647.31" y2="99.4" stroke="#3a3a3a" stroke-width="1.15" opacity="0.8"/>
<line x1="647.31" y1="105.2" x2="647.31" y2="852.2" stroke="#3a3a3a" stroke-width="1.15" opacity="0.8"/>
<line x1="663.93" y1="87.8" x2="663.93" y2="99.4" stroke="#3a3a3a" stroke-width="1.15" opacity="0.8"/>
<line x1="663.93" y1="105.2" x2="663.93" y2="852.2" stroke="#3a3a3a" stroke-width="1.15" opacity="0.8"/>
<line x1="680.54" y1="87.8" x2="680.54" y2="99.4" stroke="#3a3a3a" stroke-width="1.15" opacity="0.8"/>
<line x1="680.54" y1="105.2" x2="680.54" y2="852.2" stroke="#3a3a3a" stroke-width="1.15" opacity="0.8"/>
<line x1="697.16" y1="87.8" x2="697.16" y2="99.4" stroke="#3a3a3a" stroke-width="1.15" opacity="0.8"/>
<line x1="697.16" y1="105.2" x2="697.16" y2="852.2" stroke="#3a3a3a" stroke-width="1.15" opacity="0.8"/>
<line x1="713.77" y1="87.8" x2="713.77" y2="99.4" stroke="#3a3a3a" stroke-width="1.15" opacity="0.8"/>
<line x1="713.77" y1="105.2" x2="713.77" y2="852.2" stroke="#3a3a3a" stroke-width="1.15" opacity="0.8"/>
<line x1="730.39" y1="87.8" x2="730.39" y2="99.4" stroke="#3a3a3a" stroke-width="1.15" opacity="0.8"/>
<line x1="730.39" y1="105.2" x2="730.39" y2="852.2" stroke="#3a3a3a" stroke-width="1.15" opacity="0.8"/>
<line x1="747" y1="87.8" x2="747" y2="99.4" stroke="#3a3a3a" stroke-width="1.15" opacity="0.8"/>
<line x1="747" y1="105.2" x2="747" y2="852.2" stroke="#3a3a3a" stroke-width="1.15" opacity="0.8"/>
<line x1="763.62" y1="87.8" x2="763.62" y2="99.4" stroke="#3a3a3a" stroke-width="1.15" opacity="0.8"/>
<line x1="763.62" y1="105.2" x2="763.62" y2="852.2" stroke="#3a3a3a" stroke-width="1.15" opacity="0.8"/>
<line x1="780.23" y1="87.8" x2="780.23" y2="99.4" stroke="#3a3a3a" stroke-width="1.15" opacity="0.8"/>
<line x1="780.23" y1="105.2" x2="780.23" y2="852.2" stroke="#3a3a3a" stroke-width="1.15" opacity="0.8"/>
<line x1="796.85" y1="87.8" x2="796.85" y2="99.4" stroke="#3a3a3a" stroke-width="1.15" opacity="0.8"/>
<line x1="796.85" y1="105.2" x2="796.85" y2="852.2" stroke="#3a3a3a" stroke-width="1.15" opacity="0.8"/>
<line x1="813.46" y1="87.8" x2="813.46" y2="99.4" stroke="#3a3a3a" stroke-width="1.15" opacity="0.8"/>
<line x1="813.46" y1="105.2" x2="813.46" y2="852.2" stroke="#3a3a3a" stroke-width="1.15" opacity="0.8"/>
<line x1="830.08" y1="87.8" x2="830.08" y2="99.4" stroke="#3a3a3a" stroke-width="1.15" opacity="0.8"/>
<line x1="830.08" y1="105.2" x2="830.08" y2="852.2" stroke="#3a3a3a" stroke-width="1.15" opacity="0.8"/>
<line x1="846.69" y1="87.8" x2="846.69" y2="99.4" stroke="#3a3a3a" stroke-width="1.15" opacity="0.8"/>
<line x1="846.69" y1="105.2" x2="846.69" y2="852.2" stroke="#3a3a3a" stroke-width="1.15" opacity="0.8"/>
<line x1="863.31" y1="87.8" x2="863.31" y2="99.4" stroke="#3a3a3a" stroke-width="1.15" opacity="0.8"/>
<line x1="863.31" y1="105.2" x2="863.31" y2="852.2" stroke="#3a3a3a" stroke-width="1.15" opacity="0.8"/>
<line x1="879.93" y1="87.8" x2="879.93" y2="99.4" stroke="#3a3a3a" stroke-width="1.15" opacity="0.8"/>
<line x1="879.93" y1="105.2" x2="879.93" y2="852.2" stroke="#3a3a3a" stroke-width="1.15" opacity="0.8"/>
<line x1="896.54" y1="87.8" x2="896.54" y2="99.4" stroke="#3a3a3a" stroke-width="1.15" opacity="0.8"/>
<line x1="896.54" y1="105.2" x2="896.54" y2="852.2" stroke="#3a3a3a" stroke-width="1.15" opacity="0.8"/>
<line x1="913.16" y1="87.8" x2="913.16" y2="99.4" stroke="#3a3a3a" stroke-width="1.15" opacity="0.8"/>
<line x1="913.16" y1="105.2" x2="913.16" y2="852.2" stroke="#3a3a3a" stroke-width="1.15" opacity="0.8"/>
<line x1="929.77" y1="87.8" x2="929.77" y2="99.4" stroke="#3a3a3a" stroke-width="1.15" opacity="0.8"/>
<line x1="929.77" y1="105.2" x2="929.77" y2="852.2" stroke="#3a3a3a" stroke-width="1.15" opacity="0.8"/>
<line x1="946.39" y1="87.8" x2="946.39" y2="99.4" stroke="#3a3a3a" stroke-width="1.15" opacity="0.8"/>
<line x1="946.39" y1="105.2" x2="946.39" y2="852.2" stroke="#3a3a3a" stroke-width="1.15" opacity="0.8"/>
<line x1="963" y1="87.8" x2="963" y2="99.4" stroke="#3a3a3a" stroke-width="1.15" opacity="0.8"/>
<line x1="963" y1="105.2" x2="963" y2="852.2" stroke="#3a3a3a" stroke-width="1.15" opacity="0.8"/>
<line x1="979.62" y1="87.8" x2="979.62" y2="99.4" stroke="#3a3a3a" stroke-width="1.15" opacity="0.8"/>
<line x1="979.62" y1="105.2" x2="979.62" y2="852.2" stroke="#3a3a3a" stroke-width="1.15" opacity="0.8"/>
<line x1="996.23" y1="87.8" x2="996.23" y2="99.4" stroke="#3a3a3a" stroke-width="1.15" opacity="0.8"/>
<line x1="996.23" y1="105.2" x2="996.23" y2="852.2" stroke="#3a3a3a" stroke-width="1.15" opacity="0.8"/>
<line x1="1012.85" y1="87.8" x2="1012.85" y2="99.4" stroke="#3a3a3a" stroke-width="1.15" opacity="0.8"/>
<line x1="1012.85" y1="105.2" x2="1012.85" y2="852.2" stroke="#3a3a3a" stroke-width="1.15" opacity="0.8"/>
<line x1="1029.46" y1="87.8" x2="1029.46" y2="99.4" stroke="#3a3a3a" stroke-width="1.15" opacity="0.8"/>
<line x1="1029.46" y1="105.2" x2="1029.46" y2="852.2" stroke="#3a3a3a" stroke-width="1.15" opacity="0.8"/>
<line x1="1046.08" y1="87.8" x2="1046.08" y2="99.4" stroke="#3a3a3a" stroke-width="1.15" opacity="0.8"/>
<line x1="1046.08" y1="105.2" x2="1046.08" y2="852.2" stroke="#3a3a3a" stroke-width="1.15" opacity="0.8"/>
<line x1="1062.69" y1="87.8" x2="1062.69" y2="99.4" stroke="#3a3a3a" stroke-width="1.15" opacity="0.8"/>
<line x1="1062.69" y1="105.2" x2="1062.69" y2="852.2" stroke="#3a3a3a" stroke-width="1.15" opacity="0.8"/>
<line x1="32.3" y1="122.2" x2="1066" y2="122.2" stroke="#2e2e2e" stroke-width="1.65"/>
<line x1="32.3" y1="219" x2="1066" y2="219" stroke="#2e2e2e" stroke-width="1.65"/>
<line x1="32.3" y1="236.5" x2="1066" y2="236.5" stroke="#2e2e2e" stroke-width="1.65"/>
<line x1="32.3" y1="254" x2="1066" y2="254" stroke="#2e2e2e" stroke-width="1.65"/>
<line x1="32.3" y1="271.5" x2="1066" y2="271.5" stroke="#2e2e2e" stroke-width="1.65"/>
<line x1="32.3" y1="289" x2="1066" y2="289" stroke="#2e2e2e" stroke-width="1.65"/>
<line x1="32.3" y1="306.4" x2="1066" y2="306.4" stroke="#2e2e2e" stroke-width="1.65"/>
<line x1="32.3" y1="324" x2="1066" y2="324" stroke="#2e2e2e" stroke-width="1.65"/>
<line x1="32.3" y1="357.2" x2="1066" y2="357.2" stroke="#2e2e2e" stroke-width="1.65"/>
<line x1="32.3" y1="422.4" x2="1066" y2="422.4" stroke="#2e2e2e" stroke-width="1.65"/>
<line x1="32.3" y1="440" x2="1066" y2="440" stroke="#2e2e2e" stroke-width="1.65"/>
<line x1="32.3" y1="457.5" x2="1066" y2="457.5" stroke="#2e2e2e" stroke-width="1.65"/>
<line x1="32.3" y1="522.8" x2="1066" y2="522.8" stroke="#2e2e2e" stroke-width="1.65"/>
<line x1="32.3" y1="540.2" x2="1066" y2="540.2" stroke="#2e2e2e" stroke-width="1.65"/>
<line x1="32.3" y1="557.9" x2="1066" y2="557.9" stroke="#2e2e2e" stroke-width="1.65"/>
<line x1="32.3" y1="575.2" x2="1066" y2="575.2" stroke="#2e2e2e" stroke-width="1.65"/>
<line x1="32.3" y1="640.2" x2="1066" y2="640.2" stroke="#2e2e2e" stroke-width="1.65"/>
<line x1="32.3" y1="658.1" x2="1066" y2="658.1" stroke="#2e2e2e" stroke-width="1.65"/>
<line x1="32.3" y1="675.6" x2="1066" y2="675.6" stroke="#2e2e2e" stroke-width="1.65"/>
<line x1="32.3" y1="693" x2="1066" y2="693" stroke="#2e2e2e" stroke-width="1.65"/>
<line x1="32.3" y1="710.5" x2="1066" y2="710.5" stroke="#2e2e2e" stroke-width="1.65"/>
<line x1="32.3" y1="818.2" x2="1066" y2="818.2" stroke="#2e2e2e" stroke-width="1.65"/>
<line x1="32.3" y1="835.9" x2="1066" y2="835.9" stroke="#2e2e2e" stroke-width="1.65"/>
<line x1="32.3" y1="852.3" x2="1066" y2="852.3" stroke="#2e2e2e" stroke-width="1.65"/>
<line x1="32.3" y1="169.1" x2="1066" y2="169.1" stroke="#3a3a3a" stroke-width="1"/>
<line x1="32.3" y1="373.6" x2="1066" y2="373.6" stroke="#3a3a3a" stroke-width="1"/>
<line x1="32.3" y1="473.9" x2="1066" y2="473.9" stroke="#3a3a3a" stroke-width="1"/>
<line x1="32.3" y1="591.3" x2="1066" y2="591.3" stroke="#3a3a3a" stroke-width="1"/>
<rect x="98.71" y="254.6" width="199.78" height="16.5" fill="#1e1e1e" opacity="0.85"/>
<rect x="99.41" y="255.3" width="198.58" height="15.1" fill="#ffa374"/>
<clipPath id="c466"><rect x="99.41" y="255.3" width="198.28" height="15.1"/></clipPath>
<text x="101.71" y="266.15" font-size="9.5" fill="#3a2419" letter-spacing="0.1" stroke="#3a2419" stroke-width="0.22" clip-path="url(#c466)">Clap</text>
<rect x="115.08" y="256.2" width="1.1" height="2.4" fill="#1c1c1c" opacity="0.85"/>
<rect x="115.08" y="267.1" width="1.1" height="2.4" fill="#1c1c1c" opacity="0.85"/>
<rect x="131.69" y="256.2" width="1.1" height="2.4" fill="#1c1c1c" opacity="0.85"/>
<rect x="131.69" y="267.1" width="1.1" height="2.4" fill="#1c1c1c" opacity="0.85"/>
<rect x="148.31" y="256.2" width="1.1" height="2.4" fill="#1c1c1c" opacity="0.85"/>
<rect x="148.31" y="267.1" width="1.1" height="2.4" fill="#1c1c1c" opacity="0.85"/>
<rect x="164.92" y="256.2" width="1.1" height="2.4" fill="#1c1c1c" opacity="0.85"/>
<rect x="164.92" y="267.1" width="1.1" height="2.4" fill="#1c1c1c" opacity="0.85"/>
<rect x="181.54" y="256.2" width="1.1" height="2.4" fill="#1c1c1c" opacity="0.85"/>
<rect x="181.54" y="267.1" width="1.1" height="2.4" fill="#1c1c1c" opacity="0.85"/>
<rect x="198.15" y="256.2" width="1.1" height="2.4" fill="#1c1c1c" opacity="0.85"/>
<rect x="198.15" y="267.1" width="1.1" height="2.4" fill="#1c1c1c" opacity="0.85"/>
<rect x="214.77" y="256.2" width="1.1" height="2.4" fill="#1c1c1c" opacity="0.85"/>
<rect x="214.77" y="267.1" width="1.1" height="2.4" fill="#1c1c1c" opacity="0.85"/>
<rect x="231.38" y="256.2" width="1.1" height="2.4" fill="#1c1c1c" opacity="0.85"/>
<rect x="231.38" y="267.1" width="1.1" height="2.4" fill="#1c1c1c" opacity="0.85"/>
<rect x="248" y="256.2" width="1.1" height="2.4" fill="#1c1c1c" opacity="0.85"/>
<rect x="248" y="267.1" width="1.1" height="2.4" fill="#1c1c1c" opacity="0.85"/>
<rect x="264.61" y="256.2" width="1.1" height="2.4" fill="#1c1c1c" opacity="0.85"/>
<rect x="264.61" y="267.1" width="1.1" height="2.4" fill="#1c1c1c" opacity="0.85"/>
<rect x="281.23" y="256.2" width="1.1" height="2.4" fill="#1c1c1c" opacity="0.85"/>
<rect x="281.23" y="267.1" width="1.1" height="2.4" fill="#1c1c1c" opacity="0.85"/>
<rect x="364.55" y="254.6" width="64.85" height="16.5" fill="#1e1e1e" opacity="0.85"/>
<rect x="365.25" y="255.3" width="63.65" height="15.1" fill="#ffa374"/>
<clipPath id="c492"><rect x="365.25" y="255.3" width="63.35" height="15.1"/></clipPath>
<text x="367.55" y="266.15" font-size="9.5" fill="#3a2419" letter-spacing="0.1" stroke="#3a2419" stroke-width="0.22" clip-path="url(#c492)">Clap</text>
<rect x="380.92" y="256.2" width="1.1" height="2.4" fill="#1c1c1c" opacity="0.85"/>
<rect x="380.92" y="267.1" width="1.1" height="2.4" fill="#1c1c1c" opacity="0.85"/>
<rect x="397.53" y="256.2" width="1.1" height="2.4" fill="#1c1c1c" opacity="0.85"/>
<rect x="397.53" y="267.1" width="1.1" height="2.4" fill="#1c1c1c" opacity="0.85"/>
<rect x="414.15" y="256.2" width="1.1" height="2.4" fill="#1c1c1c" opacity="0.85"/>
<rect x="414.15" y="267.1" width="1.1" height="2.4" fill="#1c1c1c" opacity="0.85"/>
<rect x="430.6" y="254.6" width="58.8" height="16.5" fill="#1e1e1e" opacity="0.85"/>
<rect x="431.3" y="255.3" width="57.6" height="15.1" fill="#ffa374"/>
<clipPath id="c502"><rect x="431.3" y="255.3" width="57.3" height="15.1"/></clipPath>
<text x="433.6" y="266.15" font-size="9.5" fill="#3a2419" letter-spacing="0.1" stroke="#3a2419" stroke-width="0.22" clip-path="url(#c502)">Clap</text>
<rect x="447.38" y="256.2" width="1.1" height="2.4" fill="#1c1c1c" opacity="0.85"/>
<rect x="447.38" y="267.1" width="1.1" height="2.4" fill="#1c1c1c" opacity="0.85"/>
<rect x="464" y="256.2" width="1.1" height="2.4" fill="#1c1c1c" opacity="0.85"/>
<rect x="464" y="267.1" width="1.1" height="2.4" fill="#1c1c1c" opacity="0.85"/>
<rect x="480.61" y="256.2" width="1.1" height="2.4" fill="#1c1c1c" opacity="0.85"/>
<rect x="480.61" y="267.1" width="1.1" height="2.4" fill="#1c1c1c" opacity="0.85"/>
<rect x="497.48" y="254.6" width="133.32" height="16.5" fill="#1e1e1e" opacity="0.85"/>
<rect x="498.18" y="255.3" width="132.12" height="15.1" fill="#ffa374"/>
<clipPath id="c512"><rect x="498.18" y="255.3" width="131.82" height="15.1"/></clipPath>
<text x="500.48" y="266.15" font-size="9.5" fill="#3a2419" letter-spacing="0.1" stroke="#3a2419" stroke-width="0.22" clip-path="url(#c512)">Clap</text>
<rect x="513.84" y="256.2" width="1.1" height="2.4" fill="#1c1c1c" opacity="0.85"/>
<rect x="513.84" y="267.1" width="1.1" height="2.4" fill="#1c1c1c" opacity="0.85"/>
<rect x="530.46" y="256.2" width="1.1" height="2.4" fill="#1c1c1c" opacity="0.85"/>
<rect x="530.46" y="267.1" width="1.1" height="2.4" fill="#1c1c1c" opacity="0.85"/>
<rect x="547.07" y="256.2" width="1.1" height="2.4" fill="#1c1c1c" opacity="0.85"/>
<rect x="547.07" y="267.1" width="1.1" height="2.4" fill="#1c1c1c" opacity="0.85"/>
<rect x="563.69" y="256.2" width="1.1" height="2.4" fill="#1c1c1c" opacity="0.85"/>
<rect x="563.69" y="267.1" width="1.1" height="2.4" fill="#1c1c1c" opacity="0.85"/>
<rect x="580.3" y="256.2" width="1.1" height="2.4" fill="#1c1c1c" opacity="0.85"/>
<rect x="580.3" y="267.1" width="1.1" height="2.4" fill="#1c1c1c" opacity="0.85"/>
<rect x="596.92" y="256.2" width="1.1" height="2.4" fill="#1c1c1c" opacity="0.85"/>
<rect x="596.92" y="267.1" width="1.1" height="2.4" fill="#1c1c1c" opacity="0.85"/>
<rect x="613.53" y="256.2" width="1.1" height="2.4" fill="#1c1c1c" opacity="0.85"/>
<rect x="613.53" y="267.1" width="1.1" height="2.4" fill="#1c1c1c" opacity="0.85"/>
<rect x="762.6" y="254.6" width="59" height="16.5" fill="#1e1e1e" opacity="0.85"/>
<rect x="763.3" y="255.3" width="57.8" height="15.1" fill="#ffa374"/>
<clipPath id="c530"><rect x="763.3" y="255.3" width="57.5" height="15.1"/></clipPath>
<text x="765.6" y="266.15" font-size="9.1" fill="#3a2419" letter-spacing="-0.03" stroke="#3a2419" stroke-width="0.22" clip-path="url(#c530)">CLAP</text>
<rect x="779.68" y="256.2" width="1.1" height="2.4" fill="#1c1c1c" opacity="0.85"/>
<rect x="779.68" y="267.1" width="1.1" height="2.4" fill="#1c1c1c" opacity="0.85"/>
<rect x="796.3" y="256.2" width="1.1" height="2.4" fill="#1c1c1c" opacity="0.85"/>
<rect x="796.3" y="267.1" width="1.1" height="2.4" fill="#1c1c1c" opacity="0.85"/>
<rect x="812.91" y="256.2" width="1.1" height="2.4" fill="#1c1c1c" opacity="0.85"/>
<rect x="812.91" y="267.1" width="1.1" height="2.4" fill="#1c1c1c" opacity="0.85"/>
<rect x="829.78" y="254.6" width="67.26" height="16.5" fill="#1e1e1e" opacity="0.85"/>
<rect x="830.48" y="255.3" width="66.06" height="15.1" fill="#ffa374"/>
<clipPath id="c540"><rect x="830.48" y="255.3" width="65.76" height="15.1"/></clipPath>
<text x="832.78" y="266.15" font-size="9.1" fill="#3a2419" letter-spacing="-0.03" stroke="#3a2419" stroke-width="0.22" clip-path="url(#c540)">CLAP</text>
<rect x="846.14" y="256.2" width="1.1" height="2.4" fill="#1c1c1c" opacity="0.85"/>
<rect x="846.14" y="267.1" width="1.1" height="2.4" fill="#1c1c1c" opacity="0.85"/>
<rect x="862.76" y="256.2" width="1.1" height="2.4" fill="#1c1c1c" opacity="0.85"/>
<rect x="862.76" y="267.1" width="1.1" height="2.4" fill="#1c1c1c" opacity="0.85"/>
<rect x="879.38" y="256.2" width="1.1" height="2.4" fill="#1c1c1c" opacity="0.85"/>
<rect x="879.38" y="267.1" width="1.1" height="2.4" fill="#1c1c1c" opacity="0.85"/>
<rect x="896.24" y="254.6" width="66.96" height="16.5" fill="#1e1e1e" opacity="0.85"/>
<rect x="896.94" y="255.3" width="65.76" height="15.1" fill="#ffa374"/>
<clipPath id="c550"><rect x="896.94" y="255.3" width="65.46" height="15.1"/></clipPath>
<text x="899.24" y="266.15" font-size="9.1" fill="#3a2419" letter-spacing="-0.03" stroke="#3a2419" stroke-width="0.22" clip-path="url(#c550)">CLAP</text>
<rect x="912.61" y="256.2" width="1.1" height="2.4" fill="#1c1c1c" opacity="0.85"/>
<rect x="912.61" y="267.1" width="1.1" height="2.4" fill="#1c1c1c" opacity="0.85"/>
<rect x="929.22" y="256.2" width="1.1" height="2.4" fill="#1c1c1c" opacity="0.85"/>
<rect x="929.22" y="267.1" width="1.1" height="2.4" fill="#1c1c1c" opacity="0.85"/>
<rect x="945.84" y="256.2" width="1.1" height="2.4" fill="#1c1c1c" opacity="0.85"/>
<rect x="945.84" y="267.1" width="1.1" height="2.4" fill="#1c1c1c" opacity="0.85"/>
<rect x="962.8" y="254.6" width="66.76" height="16.5" fill="#1e1e1e" opacity="0.85"/>
<rect x="963.5" y="255.3" width="65.56" height="15.1" fill="#ffa374"/>
<clipPath id="c560"><rect x="963.5" y="255.3" width="65.26" height="15.1"/></clipPath>
<text x="965.8" y="266.15" font-size="9.1" fill="#3a2419" letter-spacing="-0.03" stroke="#3a2419" stroke-width="0.22" clip-path="url(#c560)">CLAP</text>
<rect x="979.07" y="256.2" width="1.1" height="2.4" fill="#1c1c1c" opacity="0.85"/>
<rect x="979.07" y="267.1" width="1.1" height="2.4" fill="#1c1c1c" opacity="0.85"/>
<rect x="995.68" y="256.2" width="1.1" height="2.4" fill="#1c1c1c" opacity="0.85"/>
<rect x="995.68" y="267.1" width="1.1" height="2.4" fill="#1c1c1c" opacity="0.85"/>
<rect x="1012.3" y="256.2" width="1.1" height="2.4" fill="#1c1c1c" opacity="0.85"/>
<rect x="1012.3" y="267.1" width="1.1" height="2.4" fill="#1c1c1c" opacity="0.85"/>
<line x1="896.64" y1="255.4" x2="896.64" y2="270.3" stroke="#c27a55" stroke-width="1"/>
<rect x="98.71" y="272.1" width="199.78" height="16.5" fill="#1e1e1e" opacity="0.85"/>
<rect x="99.41" y="272.8" width="198.58" height="15.1" fill="#ffa374"/>
<clipPath id="c571"><rect x="99.41" y="272.8" width="198.28" height="15.1"/></clipPath>
<text x="101.71" y="283.65" font-size="9.5" fill="#3a2419" letter-spacing="0.1" stroke="#3a2419" stroke-width="0.22" clip-path="url(#c571)">Accent Clap</text>
<rect x="115.08" y="273.7" width="1.1" height="2.4" fill="#1c1c1c" opacity="0.85"/>
<rect x="115.08" y="284.6" width="1.1" height="2.4" fill="#1c1c1c" opacity="0.85"/>
<rect x="131.69" y="273.7" width="1.1" height="2.4" fill="#1c1c1c" opacity="0.85"/>
<rect x="131.69" y="284.6" width="1.1" height="2.4" fill="#1c1c1c" opacity="0.85"/>
<rect x="148.31" y="273.7" width="1.1" height="2.4" fill="#1c1c1c" opacity="0.85"/>
<rect x="148.31" y="284.6" width="1.1" height="2.4" fill="#1c1c1c" opacity="0.85"/>
<rect x="164.92" y="273.7" width="1.1" height="2.4" fill="#1c1c1c" opacity="0.85"/>
<rect x="164.92" y="284.6" width="1.1" height="2.4" fill="#1c1c1c" opacity="0.85"/>
<rect x="181.54" y="273.7" width="1.1" height="2.4" fill="#1c1c1c" opacity="0.85"/>
<rect x="181.54" y="284.6" width="1.1" height="2.4" fill="#1c1c1c" opacity="0.85"/>
<rect x="198.15" y="273.7" width="1.1" height="2.4" fill="#1c1c1c" opacity="0.85"/>
<rect x="198.15" y="284.6" width="1.1" height="2.4" fill="#1c1c1c" opacity="0.85"/>
<rect x="214.77" y="273.7" width="1.1" height="2.4" fill="#1c1c1c" opacity="0.85"/>
<rect x="214.77" y="284.6" width="1.1" height="2.4" fill="#1c1c1c" opacity="0.85"/>
<rect x="231.38" y="273.7" width="1.1" height="2.4" fill="#1c1c1c" opacity="0.85"/>
<rect x="231.38" y="284.6" width="1.1" height="2.4" fill="#1c1c1c" opacity="0.85"/>
<rect x="248" y="273.7" width="1.1" height="2.4" fill="#1c1c1c" opacity="0.85"/>
<rect x="248" y="284.6" width="1.1" height="2.4" fill="#1c1c1c" opacity="0.85"/>
<rect x="264.61" y="273.7" width="1.1" height="2.4" fill="#1c1c1c" opacity="0.85"/>
<rect x="264.61" y="284.6" width="1.1" height="2.4" fill="#1c1c1c" opacity="0.85"/>
<rect x="281.23" y="273.7" width="1.1" height="2.4" fill="#1c1c1c" opacity="0.85"/>
<rect x="281.23" y="284.6" width="1.1" height="2.4" fill="#1c1c1c" opacity="0.85"/>
<rect x="364.55" y="272.1" width="64.85" height="16.5" fill="#1e1e1e" opacity="0.85"/>
<rect x="365.25" y="272.8" width="63.65" height="15.1" fill="#ffa374"/>
<clipPath id="c597"><rect x="365.25" y="272.8" width="63.35" height="15.1"/></clipPath>
<text x="367.55" y="283.65" font-size="9.5" fill="#3a2419" letter-spacing="0.1" stroke="#3a2419" stroke-width="0.22" clip-path="url(#c597)">Accent Clap</text>
<rect x="380.92" y="273.7" width="1.1" height="2.4" fill="#1c1c1c" opacity="0.85"/>
<rect x="380.92" y="284.6" width="1.1" height="2.4" fill="#1c1c1c" opacity="0.85"/>
<rect x="397.53" y="273.7" width="1.1" height="2.4" fill="#1c1c1c" opacity="0.85"/>
<rect x="397.53" y="284.6" width="1.1" height="2.4" fill="#1c1c1c" opacity="0.85"/>
<rect x="414.15" y="273.7" width="1.1" height="2.4" fill="#1c1c1c" opacity="0.85"/>
<rect x="414.15" y="284.6" width="1.1" height="2.4" fill="#1c1c1c" opacity="0.85"/>
<rect x="430.6" y="272.1" width="58.8" height="16.5" fill="#1e1e1e" opacity="0.85"/>
<rect x="431.3" y="272.8" width="57.6" height="15.1" fill="#ffa374"/>
<clipPath id="c607"><rect x="431.3" y="272.8" width="57.3" height="15.1"/></clipPath>
<text x="433.6" y="283.65" font-size="9.5" fill="#3a2419" letter-spacing="0.1" stroke="#3a2419" stroke-width="0.22" clip-path="url(#c607)">Accent Clap</text>
<rect x="447.38" y="273.7" width="1.1" height="2.4" fill="#1c1c1c" opacity="0.85"/>
<rect x="447.38" y="284.6" width="1.1" height="2.4" fill="#1c1c1c" opacity="0.85"/>
<rect x="464" y="273.7" width="1.1" height="2.4" fill="#1c1c1c" opacity="0.85"/>
<rect x="464" y="284.6" width="1.1" height="2.4" fill="#1c1c1c" opacity="0.85"/>
<rect x="480.61" y="273.7" width="1.1" height="2.4" fill="#1c1c1c" opacity="0.85"/>
<rect x="480.61" y="284.6" width="1.1" height="2.4" fill="#1c1c1c" opacity="0.85"/>
<rect x="497.48" y="272.1" width="133.32" height="16.5" fill="#1e1e1e" opacity="0.85"/>
<rect x="498.18" y="272.8" width="132.12" height="15.1" fill="#ffa374"/>
<clipPath id="c617"><rect x="498.18" y="272.8" width="131.82" height="15.1"/></clipPath>
<text x="500.48" y="283.65" font-size="9.5" fill="#3a2419" letter-spacing="0.1" stroke="#3a2419" stroke-width="0.22" clip-path="url(#c617)">Accent Clap</text>
<rect x="513.84" y="273.7" width="1.1" height="2.4" fill="#1c1c1c" opacity="0.85"/>
<rect x="513.84" y="284.6" width="1.1" height="2.4" fill="#1c1c1c" opacity="0.85"/>
<rect x="530.46" y="273.7" width="1.1" height="2.4" fill="#1c1c1c" opacity="0.85"/>
<rect x="530.46" y="284.6" width="1.1" height="2.4" fill="#1c1c1c" opacity="0.85"/>
<rect x="547.07" y="273.7" width="1.1" height="2.4" fill="#1c1c1c" opacity="0.85"/>
<rect x="547.07" y="284.6" width="1.1" height="2.4" fill="#1c1c1c" opacity="0.85"/>
<rect x="563.69" y="273.7" width="1.1" height="2.4" fill="#1c1c1c" opacity="0.85"/>
<rect x="563.69" y="284.6" width="1.1" height="2.4" fill="#1c1c1c" opacity="0.85"/>
<rect x="580.3" y="273.7" width="1.1" height="2.4" fill="#1c1c1c" opacity="0.85"/>
<rect x="580.3" y="284.6" width="1.1" height="2.4" fill="#1c1c1c" opacity="0.85"/>
<rect x="596.92" y="273.7" width="1.1" height="2.4" fill="#1c1c1c" opacity="0.85"/>
<rect x="596.92" y="284.6" width="1.1" height="2.4" fill="#1c1c1c" opacity="0.85"/>
<rect x="613.53" y="273.7" width="1.1" height="2.4" fill="#1c1c1c" opacity="0.85"/>
<rect x="613.53" y="284.6" width="1.1" height="2.4" fill="#1c1c1c" opacity="0.85"/>
<rect x="762.6" y="272.1" width="59" height="16.5" fill="#1e1e1e" opacity="0.85"/>
<rect x="763.3" y="272.8" width="57.8" height="15.1" fill="#ffa374"/>
<clipPath id="c635"><rect x="763.3" y="272.8" width="57.5" height="15.1"/></clipPath>
<text x="765.6" y="283.65" font-size="9.1" fill="#3a2419" letter-spacing="-0.03" stroke="#3a2419" stroke-width="0.22" clip-path="url(#c635)">CLAP</text>
<rect x="779.68" y="273.7" width="1.1" height="2.4" fill="#1c1c1c" opacity="0.85"/>
<rect x="779.68" y="284.6" width="1.1" height="2.4" fill="#1c1c1c" opacity="0.85"/>
<rect x="796.3" y="273.7" width="1.1" height="2.4" fill="#1c1c1c" opacity="0.85"/>
<rect x="796.3" y="284.6" width="1.1" height="2.4" fill="#1c1c1c" opacity="0.85"/>
<rect x="812.91" y="273.7" width="1.1" height="2.4" fill="#1c1c1c" opacity="0.85"/>
<rect x="812.91" y="284.6" width="1.1" height="2.4" fill="#1c1c1c" opacity="0.85"/>
<rect x="829.78" y="272.1" width="67.26" height="16.5" fill="#1e1e1e" opacity="0.85"/>
<rect x="830.48" y="272.8" width="66.06" height="15.1" fill="#ffa374"/>
<clipPath id="c645"><rect x="830.48" y="272.8" width="65.76" height="15.1"/></clipPath>
<text x="832.78" y="283.65" font-size="9.1" fill="#3a2419" letter-spacing="-0.03" stroke="#3a2419" stroke-width="0.22" clip-path="url(#c645)">CLAP</text>
<rect x="846.14" y="273.7" width="1.1" height="2.4" fill="#1c1c1c" opacity="0.85"/>
<rect x="846.14" y="284.6" width="1.1" height="2.4" fill="#1c1c1c" opacity="0.85"/>
<rect x="862.76" y="273.7" width="1.1" height="2.4" fill="#1c1c1c" opacity="0.85"/>
<rect x="862.76" y="284.6" width="1.1" height="2.4" fill="#1c1c1c" opacity="0.85"/>
<rect x="879.38" y="273.7" width="1.1" height="2.4" fill="#1c1c1c" opacity="0.85"/>
<rect x="879.38" y="284.6" width="1.1" height="2.4" fill="#1c1c1c" opacity="0.85"/>
<rect x="896.24" y="272.1" width="66.96" height="16.5" fill="#1e1e1e" opacity="0.85"/>
<rect x="896.94" y="272.8" width="65.76" height="15.1" fill="#ffa374"/>
<clipPath id="c655"><rect x="896.94" y="272.8" width="65.46" height="15.1"/></clipPath>
<text x="899.24" y="283.65" font-size="9.1" fill="#3a2419" letter-spacing="-0.03" stroke="#3a2419" stroke-width="0.22" clip-path="url(#c655)">CLAP</text>
<rect x="912.61" y="273.7" width="1.1" height="2.4" fill="#1c1c1c" opacity="0.85"/>
<rect x="912.61" y="284.6" width="1.1" height="2.4" fill="#1c1c1c" opacity="0.85"/>
<rect x="929.22" y="273.7" width="1.1" height="2.4" fill="#1c1c1c" opacity="0.85"/>
<rect x="929.22" y="284.6" width="1.1" height="2.4" fill="#1c1c1c" opacity="0.85"/>
<rect x="945.84" y="273.7" width="1.1" height="2.4" fill="#1c1c1c" opacity="0.85"/>
<rect x="945.84" y="284.6" width="1.1" height="2.4" fill="#1c1c1c" opacity="0.85"/>
<rect x="962.8" y="272.1" width="66.76" height="16.5" fill="#1e1e1e" opacity="0.85"/>
<rect x="963.5" y="272.8" width="65.56" height="15.1" fill="#ffa374"/>
<clipPath id="c665"><rect x="963.5" y="272.8" width="65.26" height="15.1"/></clipPath>
<text x="965.8" y="283.65" font-size="9.1" fill="#3a2419" letter-spacing="-0.03" stroke="#3a2419" stroke-width="0.22" clip-path="url(#c665)">CLAP</text>
<rect x="979.07" y="273.7" width="1.1" height="2.4" fill="#1c1c1c" opacity="0.85"/>
<rect x="979.07" y="284.6" width="1.1" height="2.4" fill="#1c1c1c" opacity="0.85"/>
<rect x="995.68" y="273.7" width="1.1" height="2.4" fill="#1c1c1c" opacity="0.85"/>
<rect x="995.68" y="284.6" width="1.1" height="2.4" fill="#1c1c1c" opacity="0.85"/>
<rect x="1012.3" y="273.7" width="1.1" height="2.4" fill="#1c1c1c" opacity="0.85"/>
<rect x="1012.3" y="284.6" width="1.1" height="2.4" fill="#1c1c1c" opacity="0.85"/>
<line x1="896.64" y1="272.9" x2="896.64" y2="287.8" stroke="#c27a55" stroke-width="1"/>
<rect x="98.71" y="289.6" width="199.78" height="16.4" fill="#1e1e1e" opacity="0.85"/>
<rect x="99.41" y="290.3" width="198.58" height="15" fill="#ffa374"/>
<clipPath id="c676"><rect x="99.41" y="290.3" width="198.28" height="15"/></clipPath>
<text x="101.71" y="301.1" font-size="9.5" fill="#3a2419" letter-spacing="0.1" stroke="#3a2419" stroke-width="0.22" clip-path="url(#c676)">Perc 1</text>
<rect x="106.77" y="291.2" width="1.1" height="2.4" fill="#1c1c1c" opacity="0.85"/>
<rect x="106.77" y="302" width="1.1" height="2.4" fill="#1c1c1c" opacity="0.85"/>
<rect x="115.08" y="291.2" width="1.1" height="2.4" fill="#1c1c1c" opacity="0.85"/>
<rect x="115.08" y="302" width="1.1" height="2.4" fill="#1c1c1c" opacity="0.85"/>
<rect x="123.38" y="291.2" width="1.1" height="2.4" fill="#1c1c1c" opacity="0.85"/>
<rect x="123.38" y="302" width="1.1" height="2.4" fill="#1c1c1c" opacity="0.85"/>
<rect x="131.69" y="291.2" width="1.1" height="2.4" fill="#1c1c1c" opacity="0.85"/>
<rect x="131.69" y="302" width="1.1" height="2.4" fill="#1c1c1c" opacity="0.85"/>
<rect x="140" y="291.2" width="1.1" height="2.4" fill="#1c1c1c" opacity="0.85"/>
<rect x="140" y="302" width="1.1" height="2.4" fill="#1c1c1c" opacity="0.85"/>
<rect x="148.31" y="291.2" width="1.1" height="2.4" fill="#1c1c1c" opacity="0.85"/>
<rect x="148.31" y="302" width="1.1" height="2.4" fill="#1c1c1c" opacity="0.85"/>
<rect x="156.61" y="291.2" width="1.1" height="2.4" fill="#1c1c1c" opacity="0.85"/>
<rect x="156.61" y="302" width="1.1" height="2.4" fill="#1c1c1c" opacity="0.85"/>
<rect x="164.92" y="291.2" width="1.1" height="2.4" fill="#1c1c1c" opacity="0.85"/>
<rect x="164.92" y="302" width="1.1" height="2.4" fill="#1c1c1c" opacity="0.85"/>
<rect x="173.23" y="291.2" width="1.1" height="2.4" fill="#1c1c1c" opacity="0.85"/>
<rect x="173.23" y="302" width="1.1" height="2.4" fill="#1c1c1c" opacity="0.85"/>
<rect x="181.54" y="291.2" width="1.1" height="2.4" fill="#1c1c1c" opacity="0.85"/>
<rect x="181.54" y="302" width="1.1" height="2.4" fill="#1c1c1c" opacity="0.85"/>
<rect x="189.84" y="291.2" width="1.1" height="2.4" fill="#1c1c1c" opacity="0.85"/>
<rect x="189.84" y="302" width="1.1" height="2.4" fill="#1c1c1c" opacity="0.85"/>
<rect x="198.15" y="291.2" width="1.1" height="2.4" fill="#1c1c1c" opacity="0.85"/>
<rect x="198.15" y="302" width="1.1" height="2.4" fill="#1c1c1c" opacity="0.85"/>
<rect x="206.46" y="291.2" width="1.1" height="2.4" fill="#1c1c1c" opacity="0.85"/>
<rect x="206.46" y="302" width="1.1" height="2.4" fill="#1c1c1c" opacity="0.85"/>
<rect x="214.77" y="291.2" width="1.1" height="2.4" fill="#1c1c1c" opacity="0.85"/>
<rect x="214.77" y="302" width="1.1" height="2.4" fill="#1c1c1c" opacity="0.85"/>
<rect x="223.07" y="291.2" width="1.1" height="2.4" fill="#1c1c1c" opacity="0.85"/>
<rect x="223.07" y="302" width="1.1" height="2.4" fill="#1c1c1c" opacity="0.85"/>
<rect x="231.38" y="291.2" width="1.1" height="2.4" fill="#1c1c1c" opacity="0.85"/>
<rect x="231.38" y="302" width="1.1" height="2.4" fill="#1c1c1c" opacity="0.85"/>
<rect x="239.69" y="291.2" width="1.1" height="2.4" fill="#1c1c1c" opacity="0.85"/>
<rect x="239.69" y="302" width="1.1" height="2.4" fill="#1c1c1c" opacity="0.85"/>
<rect x="248" y="291.2" width="1.1" height="2.4" fill="#1c1c1c" opacity="0.85"/>
<rect x="248" y="302" width="1.1" height="2.4" fill="#1c1c1c" opacity="0.85"/>
<rect x="256.31" y="291.2" width="1.1" height="2.4" fill="#1c1c1c" opacity="0.85"/>
<rect x="256.31" y="302" width="1.1" height="2.4" fill="#1c1c1c" opacity="0.85"/>
<rect x="264.61" y="291.2" width="1.1" height="2.4" fill="#1c1c1c" opacity="0.85"/>
<rect x="264.61" y="302" width="1.1" height="2.4" fill="#1c1c1c" opacity="0.85"/>
<rect x="272.92" y="291.2" width="1.1" height="2.4" fill="#1c1c1c" opacity="0.85"/>
<rect x="272.92" y="302" width="1.1" height="2.4" fill="#1c1c1c" opacity="0.85"/>
<rect x="281.23" y="291.2" width="1.1" height="2.4" fill="#1c1c1c" opacity="0.85"/>
<rect x="281.23" y="302" width="1.1" height="2.4" fill="#1c1c1c" opacity="0.85"/>
<rect x="289.54" y="291.2" width="1.1" height="2.4" fill="#1c1c1c" opacity="0.85"/>
<rect x="289.54" y="302" width="1.1" height="2.4" fill="#1c1c1c" opacity="0.85"/>
<rect x="364.55" y="289.6" width="64.85" height="16.4" fill="#1e1e1e" opacity="0.85"/>
<rect x="365.25" y="290.3" width="63.65" height="15" fill="#ffa374"/>
<clipPath id="c726"><rect x="365.25" y="290.3" width="63.35" height="15"/></clipPath>
<text x="367.55" y="301.1" font-size="9.5" fill="#3a2419" letter-spacing="0.1" stroke="#3a2419" stroke-width="0.22" clip-path="url(#c726)">Perc 1</text>
<rect x="372.61" y="291.2" width="1.1" height="2.4" fill="#1c1c1c" opacity="0.85"/>
<rect x="372.61" y="302" width="1.1" height="2.4" fill="#1c1c1c" opacity="0.85"/>
<rect x="380.92" y="291.2" width="1.1" height="2.4" fill="#1c1c1c" opacity="0.85"/>
<rect x="380.92" y="302" width="1.1" height="2.4" fill="#1c1c1c" opacity="0.85"/>
<rect x="389.23" y="291.2" width="1.1" height="2.4" fill="#1c1c1c" opacity="0.85"/>
<rect x="389.23" y="302" width="1.1" height="2.4" fill="#1c1c1c" opacity="0.85"/>
<rect x="397.53" y="291.2" width="1.1" height="2.4" fill="#1c1c1c" opacity="0.85"/>
<rect x="397.53" y="302" width="1.1" height="2.4" fill="#1c1c1c" opacity="0.85"/>
<rect x="405.84" y="291.2" width="1.1" height="2.4" fill="#1c1c1c" opacity="0.85"/>
<rect x="405.84" y="302" width="1.1" height="2.4" fill="#1c1c1c" opacity="0.85"/>
<rect x="414.15" y="291.2" width="1.1" height="2.4" fill="#1c1c1c" opacity="0.85"/>
<rect x="414.15" y="302" width="1.1" height="2.4" fill="#1c1c1c" opacity="0.85"/>
<rect x="422.46" y="291.2" width="1.1" height="2.4" fill="#1c1c1c" opacity="0.85"/>
<rect x="422.46" y="302" width="1.1" height="2.4" fill="#1c1c1c" opacity="0.85"/>
<rect x="430.6" y="289.6" width="58.8" height="16.4" fill="#1e1e1e" opacity="0.85"/>
<rect x="431.3" y="290.3" width="57.6" height="15" fill="#ffa374"/>
<clipPath id="c744"><rect x="431.3" y="290.3" width="57.3" height="15"/></clipPath>
<text x="433.6" y="301.1" font-size="9.5" fill="#3a2419" letter-spacing="0.1" stroke="#3a2419" stroke-width="0.22" clip-path="url(#c744)">Perc 1</text>
<rect x="439.07" y="291.2" width="1.1" height="2.4" fill="#1c1c1c" opacity="0.85"/>
<rect x="439.07" y="302" width="1.1" height="2.4" fill="#1c1c1c" opacity="0.85"/>
<rect x="447.38" y="291.2" width="1.1" height="2.4" fill="#1c1c1c" opacity="0.85"/>
<rect x="447.38" y="302" width="1.1" height="2.4" fill="#1c1c1c" opacity="0.85"/>
<rect x="455.69" y="291.2" width="1.1" height="2.4" fill="#1c1c1c" opacity="0.85"/>
<rect x="455.69" y="302" width="1.1" height="2.4" fill="#1c1c1c" opacity="0.85"/>
<rect x="464" y="291.2" width="1.1" height="2.4" fill="#1c1c1c" opacity="0.85"/>
<rect x="464" y="302" width="1.1" height="2.4" fill="#1c1c1c" opacity="0.85"/>
<rect x="472.3" y="291.2" width="1.1" height="2.4" fill="#1c1c1c" opacity="0.85"/>
<rect x="472.3" y="302" width="1.1" height="2.4" fill="#1c1c1c" opacity="0.85"/>
<rect x="480.61" y="291.2" width="1.1" height="2.4" fill="#1c1c1c" opacity="0.85"/>
<rect x="480.61" y="302" width="1.1" height="2.4" fill="#1c1c1c" opacity="0.85"/>
<rect x="497.48" y="289.6" width="133.32" height="16.4" fill="#1e1e1e" opacity="0.85"/>
<rect x="498.18" y="290.3" width="132.12" height="15" fill="#ffa374"/>
<clipPath id="c760"><rect x="498.18" y="290.3" width="131.82" height="15"/></clipPath>
<text x="500.48" y="301.1" font-size="9.5" fill="#3a2419" letter-spacing="0.1" stroke="#3a2419" stroke-width="0.22" clip-path="url(#c760)">Perc 1</text>
<rect x="505.53" y="291.2" width="1.1" height="2.4" fill="#1c1c1c" opacity="0.85"/>
<rect x="505.53" y="302" width="1.1" height="2.4" fill="#1c1c1c" opacity="0.85"/>
<rect x="513.84" y="291.2" width="1.1" height="2.4" fill="#1c1c1c" opacity="0.85"/>
<rect x="513.84" y="302" width="1.1" height="2.4" fill="#1c1c1c" opacity="0.85"/>
<rect x="522.15" y="291.2" width="1.1" height="2.4" fill="#1c1c1c" opacity="0.85"/>
<rect x="522.15" y="302" width="1.1" height="2.4" fill="#1c1c1c" opacity="0.85"/>
<rect x="530.46" y="291.2" width="1.1" height="2.4" fill="#1c1c1c" opacity="0.85"/>
<rect x="530.46" y="302" width="1.1" height="2.4" fill="#1c1c1c" opacity="0.85"/>
<rect x="538.76" y="291.2" width="1.1" height="2.4" fill="#1c1c1c" opacity="0.85"/>
<rect x="538.76" y="302" width="1.1" height="2.4" fill="#1c1c1c" opacity="0.85"/>
<rect x="547.07" y="291.2" width="1.1" height="2.4" fill="#1c1c1c" opacity="0.85"/>
<rect x="547.07" y="302" width="1.1" height="2.4" fill="#1c1c1c" opacity="0.85"/>
<rect x="555.38" y="291.2" width="1.1" height="2.4" fill="#1c1c1c" opacity="0.85"/>
<rect x="555.38" y="302" width="1.1" height="2.4" fill="#1c1c1c" opacity="0.85"/>
<rect x="563.69" y="291.2" width="1.1" height="2.4" fill="#1c1c1c" opacity="0.85"/>
<rect x="563.69" y="302" width="1.1" height="2.4" fill="#1c1c1c" opacity="0.85"/>
<rect x="571.99" y="291.2" width="1.1" height="2.4" fill="#1c1c1c" opacity="0.85"/>
<rect x="571.99" y="302" width="1.1" height="2.4" fill="#1c1c1c" opacity="0.85"/>
<rect x="580.3" y="291.2" width="1.1" height="2.4" fill="#1c1c1c" opacity="0.85"/>
<rect x="580.3" y="302" width="1.1" height="2.4" fill="#1c1c1c" opacity="0.85"/>
<rect x="588.61" y="291.2" width="1.1" height="2.4" fill="#1c1c1c" opacity="0.85"/>
<rect x="588.61" y="302" width="1.1" height="2.4" fill="#1c1c1c" opacity="0.85"/>
<rect x="596.92" y="291.2" width="1.1" height="2.4" fill="#1c1c1c" opacity="0.85"/>
<rect x="596.92" y="302" width="1.1" height="2.4" fill="#1c1c1c" opacity="0.85"/>
<rect x="605.22" y="291.2" width="1.1" height="2.4" fill="#1c1c1c" opacity="0.85"/>
<rect x="605.22" y="302" width="1.1" height="2.4" fill="#1c1c1c" opacity="0.85"/>
<rect x="613.53" y="291.2" width="1.1" height="2.4" fill="#1c1c1c" opacity="0.85"/>
<rect x="613.53" y="302" width="1.1" height="2.4" fill="#1c1c1c" opacity="0.85"/>
<rect x="621.84" y="291.2" width="1.1" height="2.4" fill="#1c1c1c" opacity="0.85"/>
<rect x="621.84" y="302" width="1.1" height="2.4" fill="#1c1c1c" opacity="0.85"/>
<rect x="762.6" y="289.6" width="59" height="16.4" fill="#1e1e1e" opacity="0.85"/>
<rect x="763.3" y="290.3" width="57.8" height="15" fill="#ffa374"/>
<clipPath id="c794"><rect x="763.3" y="290.3" width="57.5" height="15"/></clipPath>
<text x="765.6" y="301.1" font-size="9.1" fill="#3a2419" letter-spacing="-0.03" stroke="#3a2419" stroke-width="0.22" clip-path="url(#c794)">PERC 1</text>
<rect x="771.38" y="291.2" width="1.1" height="2.4" fill="#1c1c1c" opacity="0.85"/>
<rect x="771.38" y="302" width="1.1" height="2.4" fill="#1c1c1c" opacity="0.85"/>
<rect x="779.68" y="291.2" width="1.1" height="2.4" fill="#1c1c1c" opacity="0.85"/>
<rect x="779.68" y="302" width="1.1" height="2.4" fill="#1c1c1c" opacity="0.85"/>
<rect x="787.99" y="291.2" width="1.1" height="2.4" fill="#1c1c1c" opacity="0.85"/>
<rect x="787.99" y="302" width="1.1" height="2.4" fill="#1c1c1c" opacity="0.85"/>
<rect x="796.3" y="291.2" width="1.1" height="2.4" fill="#1c1c1c" opacity="0.85"/>
<rect x="796.3" y="302" width="1.1" height="2.4" fill="#1c1c1c" opacity="0.85"/>
<rect x="804.61" y="291.2" width="1.1" height="2.4" fill="#1c1c1c" opacity="0.85"/>
<rect x="804.61" y="302" width="1.1" height="2.4" fill="#1c1c1c" opacity="0.85"/>
<rect x="812.91" y="291.2" width="1.1" height="2.4" fill="#1c1c1c" opacity="0.85"/>
<rect x="812.91" y="302" width="1.1" height="2.4" fill="#1c1c1c" opacity="0.85"/>
<rect x="829.78" y="289.6" width="67.26" height="16.4" fill="#1e1e1e" opacity="0.85"/>
<rect x="830.48" y="290.3" width="66.06" height="15" fill="#ffa374"/>
<clipPath id="c810"><rect x="830.48" y="290.3" width="65.76" height="15"/></clipPath>
<text x="832.78" y="301.1" font-size="9.1" fill="#3a2419" letter-spacing="-0.03" stroke="#3a2419" stroke-width="0.22" clip-path="url(#c810)">PERC 1</text>
<rect x="837.84" y="291.2" width="1.1" height="2.4" fill="#1c1c1c" opacity="0.85"/>
<rect x="837.84" y="302" width="1.1" height="2.4" fill="#1c1c1c" opacity="0.85"/>
<rect x="846.14" y="291.2" width="1.1" height="2.4" fill="#1c1c1c" opacity="0.85"/>
<rect x="846.14" y="302" width="1.1" height="2.4" fill="#1c1c1c" opacity="0.85"/>
<rect x="854.45" y="291.2" width="1.1" height="2.4" fill="#1c1c1c" opacity="0.85"/>
<rect x="854.45" y="302" width="1.1" height="2.4" fill="#1c1c1c" opacity="0.85"/>
<rect x="862.76" y="291.2" width="1.1" height="2.4" fill="#1c1c1c" opacity="0.85"/>
<rect x="862.76" y="302" width="1.1" height="2.4" fill="#1c1c1c" opacity="0.85"/>
<rect x="871.07" y="291.2" width="1.1" height="2.4" fill="#1c1c1c" opacity="0.85"/>
<rect x="871.07" y="302" width="1.1" height="2.4" fill="#1c1c1c" opacity="0.85"/>
<rect x="879.38" y="291.2" width="1.1" height="2.4" fill="#1c1c1c" opacity="0.85"/>
<rect x="879.38" y="302" width="1.1" height="2.4" fill="#1c1c1c" opacity="0.85"/>
<rect x="887.68" y="291.2" width="1.1" height="2.4" fill="#1c1c1c" opacity="0.85"/>
<rect x="887.68" y="302" width="1.1" height="2.4" fill="#1c1c1c" opacity="0.85"/>
<rect x="896.24" y="289.6" width="66.96" height="16.4" fill="#1e1e1e" opacity="0.85"/>
<rect x="896.94" y="290.3" width="65.76" height="15" fill="#ffa374"/>
<clipPath id="c828"><rect x="896.94" y="290.3" width="65.46" height="15"/></clipPath>
<text x="899.24" y="301.1" font-size="9.1" fill="#3a2419" letter-spacing="-0.03" stroke="#3a2419" stroke-width="0.22" clip-path="url(#c828)">PERC 1</text>
<rect x="904.3" y="291.2" width="1.1" height="2.4" fill="#1c1c1c" opacity="0.85"/>
<rect x="904.3" y="302" width="1.1" height="2.4" fill="#1c1c1c" opacity="0.85"/>
<rect x="912.61" y="291.2" width="1.1" height="2.4" fill="#1c1c1c" opacity="0.85"/>
<rect x="912.61" y="302" width="1.1" height="2.4" fill="#1c1c1c" opacity="0.85"/>
<rect x="920.91" y="291.2" width="1.1" height="2.4" fill="#1c1c1c" opacity="0.85"/>
<rect x="920.91" y="302" width="1.1" height="2.4" fill="#1c1c1c" opacity="0.85"/>
<rect x="929.22" y="291.2" width="1.1" height="2.4" fill="#1c1c1c" opacity="0.85"/>
<rect x="929.22" y="302" width="1.1" height="2.4" fill="#1c1c1c" opacity="0.85"/>
<rect x="937.53" y="291.2" width="1.1" height="2.4" fill="#1c1c1c" opacity="0.85"/>
<rect x="937.53" y="302" width="1.1" height="2.4" fill="#1c1c1c" opacity="0.85"/>
<rect x="945.84" y="291.2" width="1.1" height="2.4" fill="#1c1c1c" opacity="0.85"/>
<rect x="945.84" y="302" width="1.1" height="2.4" fill="#1c1c1c" opacity="0.85"/>
<rect x="954.14" y="291.2" width="1.1" height="2.4" fill="#1c1c1c" opacity="0.85"/>
<rect x="954.14" y="302" width="1.1" height="2.4" fill="#1c1c1c" opacity="0.85"/>
<rect x="962.8" y="289.6" width="66.76" height="16.4" fill="#1e1e1e" opacity="0.85"/>
<rect x="963.5" y="290.3" width="65.56" height="15" fill="#ffa374"/>
<clipPath id="c846"><rect x="963.5" y="290.3" width="65.26" height="15"/></clipPath>
<text x="965.8" y="301.1" font-size="9.1" fill="#3a2419" letter-spacing="-0.03" stroke="#3a2419" stroke-width="0.22" clip-path="url(#c846)">PERC 1</text>
<rect x="970.76" y="291.2" width="1.1" height="2.4" fill="#1c1c1c" opacity="0.85"/>
<rect x="970.76" y="302" width="1.1" height="2.4" fill="#1c1c1c" opacity="0.85"/>
<rect x="979.07" y="291.2" width="1.1" height="2.4" fill="#1c1c1c" opacity="0.85"/>
<rect x="979.07" y="302" width="1.1" height="2.4" fill="#1c1c1c" opacity="0.85"/>
<rect x="987.37" y="291.2" width="1.1" height="2.4" fill="#1c1c1c" opacity="0.85"/>
<rect x="987.37" y="302" width="1.1" height="2.4" fill="#1c1c1c" opacity="0.85"/>
<rect x="995.68" y="291.2" width="1.1" height="2.4" fill="#1c1c1c" opacity="0.85"/>
<rect x="995.68" y="302" width="1.1" height="2.4" fill="#1c1c1c" opacity="0.85"/>
<rect x="1003.99" y="291.2" width="1.1" height="2.4" fill="#1c1c1c" opacity="0.85"/>
<rect x="1003.99" y="302" width="1.1" height="2.4" fill="#1c1c1c" opacity="0.85"/>
<rect x="1012.3" y="291.2" width="1.1" height="2.4" fill="#1c1c1c" opacity="0.85"/>
<rect x="1012.3" y="302" width="1.1" height="2.4" fill="#1c1c1c" opacity="0.85"/>
<rect x="1020.6" y="291.2" width="1.1" height="2.4" fill="#1c1c1c" opacity="0.85"/>
<rect x="1020.6" y="302" width="1.1" height="2.4" fill="#1c1c1c" opacity="0.85"/>
<line x1="896.64" y1="290.4" x2="896.64" y2="305.2" stroke="#c27a55" stroke-width="1"/>
<rect x="98.71" y="307" width="199.78" height="16.6" fill="#1e1e1e" opacity="0.85"/>
<rect x="99.41" y="307.7" width="198.58" height="15.2" fill="#ffa374"/>
<clipPath id="c865"><rect x="99.41" y="307.7" width="198.28" height="15.2"/></clipPath>
<text x="101.71" y="318.6" font-size="9.5" fill="#3a2419" letter-spacing="0.1" stroke="#3a2419" stroke-width="0.22" clip-path="url(#c865)">Bounce Snare</text>
<rect x="115.08" y="308.6" width="1.1" height="2.4" fill="#1c1c1c" opacity="0.85"/>
<rect x="115.08" y="319.6" width="1.1" height="2.4" fill="#1c1c1c" opacity="0.85"/>
<rect x="131.69" y="308.6" width="1.1" height="2.4" fill="#1c1c1c" opacity="0.85"/>
<rect x="131.69" y="319.6" width="1.1" height="2.4" fill="#1c1c1c" opacity="0.85"/>
<rect x="148.31" y="308.6" width="1.1" height="2.4" fill="#1c1c1c" opacity="0.85"/>
<rect x="148.31" y="319.6" width="1.1" height="2.4" fill="#1c1c1c" opacity="0.85"/>
<rect x="164.92" y="308.6" width="1.1" height="2.4" fill="#1c1c1c" opacity="0.85"/>
<rect x="164.92" y="319.6" width="1.1" height="2.4" fill="#1c1c1c" opacity="0.85"/>
<rect x="181.54" y="308.6" width="1.1" height="2.4" fill="#1c1c1c" opacity="0.85"/>
<rect x="181.54" y="319.6" width="1.1" height="2.4" fill="#1c1c1c" opacity="0.85"/>
<rect x="198.15" y="308.6" width="1.1" height="2.4" fill="#1c1c1c" opacity="0.85"/>
<rect x="198.15" y="319.6" width="1.1" height="2.4" fill="#1c1c1c" opacity="0.85"/>
<rect x="214.77" y="308.6" width="1.1" height="2.4" fill="#1c1c1c" opacity="0.85"/>
<rect x="214.77" y="319.6" width="1.1" height="2.4" fill="#1c1c1c" opacity="0.85"/>
<rect x="231.38" y="308.6" width="1.1" height="2.4" fill="#1c1c1c" opacity="0.85"/>
<rect x="231.38" y="319.6" width="1.1" height="2.4" fill="#1c1c1c" opacity="0.85"/>
<rect x="248" y="308.6" width="1.1" height="2.4" fill="#1c1c1c" opacity="0.85"/>
<rect x="248" y="319.6" width="1.1" height="2.4" fill="#1c1c1c" opacity="0.85"/>
<rect x="264.61" y="308.6" width="1.1" height="2.4" fill="#1c1c1c" opacity="0.85"/>
<rect x="264.61" y="319.6" width="1.1" height="2.4" fill="#1c1c1c" opacity="0.85"/>
<rect x="281.23" y="308.6" width="1.1" height="2.4" fill="#1c1c1c" opacity="0.85"/>
<rect x="281.23" y="319.6" width="1.1" height="2.4" fill="#1c1c1c" opacity="0.85"/>
<rect x="364.55" y="307" width="64.85" height="16.6" fill="#1e1e1e" opacity="0.85"/>
<rect x="365.25" y="307.7" width="63.65" height="15.2" fill="#ffa374"/>
<clipPath id="c891"><rect x="365.25" y="307.7" width="63.35" height="15.2"/></clipPath>
<text x="367.55" y="318.6" font-size="9.5" fill="#3a2419" letter-spacing="0.1" stroke="#3a2419" stroke-width="0.22" clip-path="url(#c891)">Bounce Snare</text>
<rect x="380.92" y="308.6" width="1.1" height="2.4" fill="#1c1c1c" opacity="0.85"/>
<rect x="380.92" y="319.6" width="1.1" height="2.4" fill="#1c1c1c" opacity="0.85"/>
<rect x="397.53" y="308.6" width="1.1" height="2.4" fill="#1c1c1c" opacity="0.85"/>
<rect x="397.53" y="319.6" width="1.1" height="2.4" fill="#1c1c1c" opacity="0.85"/>
<rect x="414.15" y="308.6" width="1.1" height="2.4" fill="#1c1c1c" opacity="0.85"/>
<rect x="414.15" y="319.6" width="1.1" height="2.4" fill="#1c1c1c" opacity="0.85"/>
<rect x="430.6" y="307" width="58.8" height="16.6" fill="#1e1e1e" opacity="0.85"/>
<rect x="431.3" y="307.7" width="57.6" height="15.2" fill="#ffa374"/>
<clipPath id="c901"><rect x="431.3" y="307.7" width="57.3" height="15.2"/></clipPath>
<text x="433.6" y="318.6" font-size="9.5" fill="#3a2419" letter-spacing="0.1" stroke="#3a2419" stroke-width="0.22" clip-path="url(#c901)">Bounce Snare</text>
<rect x="447.38" y="308.6" width="1.1" height="2.4" fill="#1c1c1c" opacity="0.85"/>
<rect x="447.38" y="319.6" width="1.1" height="2.4" fill="#1c1c1c" opacity="0.85"/>
<rect x="464" y="308.6" width="1.1" height="2.4" fill="#1c1c1c" opacity="0.85"/>
<rect x="464" y="319.6" width="1.1" height="2.4" fill="#1c1c1c" opacity="0.85"/>
<rect x="480.61" y="308.6" width="1.1" height="2.4" fill="#1c1c1c" opacity="0.85"/>
<rect x="480.61" y="319.6" width="1.1" height="2.4" fill="#1c1c1c" opacity="0.85"/>
<rect x="497.48" y="307" width="133.32" height="16.6" fill="#1e1e1e" opacity="0.85"/>
<rect x="498.18" y="307.7" width="132.12" height="15.2" fill="#ffa374"/>
<clipPath id="c911"><rect x="498.18" y="307.7" width="131.82" height="15.2"/></clipPath>
<text x="500.48" y="318.6" font-size="9.5" fill="#3a2419" letter-spacing="0.1" stroke="#3a2419" stroke-width="0.22" clip-path="url(#c911)">Bounce Snare</text>
<rect x="513.84" y="308.6" width="1.1" height="2.4" fill="#1c1c1c" opacity="0.85"/>
<rect x="513.84" y="319.6" width="1.1" height="2.4" fill="#1c1c1c" opacity="0.85"/>
<rect x="530.46" y="308.6" width="1.1" height="2.4" fill="#1c1c1c" opacity="0.85"/>
<rect x="530.46" y="319.6" width="1.1" height="2.4" fill="#1c1c1c" opacity="0.85"/>
<rect x="547.07" y="308.6" width="1.1" height="2.4" fill="#1c1c1c" opacity="0.85"/>
<rect x="547.07" y="319.6" width="1.1" height="2.4" fill="#1c1c1c" opacity="0.85"/>
<rect x="563.69" y="308.6" width="1.1" height="2.4" fill="#1c1c1c" opacity="0.85"/>
<rect x="563.69" y="319.6" width="1.1" height="2.4" fill="#1c1c1c" opacity="0.85"/>
<rect x="580.3" y="308.6" width="1.1" height="2.4" fill="#1c1c1c" opacity="0.85"/>
<rect x="580.3" y="319.6" width="1.1" height="2.4" fill="#1c1c1c" opacity="0.85"/>
<rect x="596.92" y="308.6" width="1.1" height="2.4" fill="#1c1c1c" opacity="0.85"/>
<rect x="596.92" y="319.6" width="1.1" height="2.4" fill="#1c1c1c" opacity="0.85"/>
<rect x="613.53" y="308.6" width="1.1" height="2.4" fill="#1c1c1c" opacity="0.85"/>
<rect x="613.53" y="319.6" width="1.1" height="2.4" fill="#1c1c1c" opacity="0.85"/>
<rect x="762.6" y="307" width="59" height="16.6" fill="#1e1e1e" opacity="0.85"/>
<rect x="763.3" y="307.7" width="57.8" height="15.2" fill="#ffa374"/>
<clipPath id="c929"><rect x="763.3" y="307.7" width="57.5" height="15.2"/></clipPath>
<text x="765.6" y="318.6" font-size="9.1" fill="#3a2419" letter-spacing="-0.03" stroke="#3a2419" stroke-width="0.22" clip-path="url(#c929)">BOUNCE SNARE</text>
<rect x="779.68" y="308.6" width="1.1" height="2.4" fill="#1c1c1c" opacity="0.85"/>
<rect x="779.68" y="319.6" width="1.1" height="2.4" fill="#1c1c1c" opacity="0.85"/>
<rect x="796.3" y="308.6" width="1.1" height="2.4" fill="#1c1c1c" opacity="0.85"/>
<rect x="796.3" y="319.6" width="1.1" height="2.4" fill="#1c1c1c" opacity="0.85"/>
<rect x="812.91" y="308.6" width="1.1" height="2.4" fill="#1c1c1c" opacity="0.85"/>
<rect x="812.91" y="319.6" width="1.1" height="2.4" fill="#1c1c1c" opacity="0.85"/>
<rect x="829.78" y="307" width="67.26" height="16.6" fill="#1e1e1e" opacity="0.85"/>
<rect x="830.48" y="307.7" width="66.06" height="15.2" fill="#ffa374"/>
<clipPath id="c939"><rect x="830.48" y="307.7" width="65.76" height="15.2"/></clipPath>
<text x="832.78" y="318.6" font-size="9.1" fill="#3a2419" letter-spacing="-0.03" stroke="#3a2419" stroke-width="0.22" clip-path="url(#c939)">BOUNCE SNARE</text>
<rect x="846.14" y="308.6" width="1.1" height="2.4" fill="#1c1c1c" opacity="0.85"/>
<rect x="846.14" y="319.6" width="1.1" height="2.4" fill="#1c1c1c" opacity="0.85"/>
<rect x="862.76" y="308.6" width="1.1" height="2.4" fill="#1c1c1c" opacity="0.85"/>
<rect x="862.76" y="319.6" width="1.1" height="2.4" fill="#1c1c1c" opacity="0.85"/>
<rect x="879.38" y="308.6" width="1.1" height="2.4" fill="#1c1c1c" opacity="0.85"/>
<rect x="879.38" y="319.6" width="1.1" height="2.4" fill="#1c1c1c" opacity="0.85"/>
<rect x="896.24" y="307" width="66.96" height="16.6" fill="#1e1e1e" opacity="0.85"/>
<rect x="896.94" y="307.7" width="65.76" height="15.2" fill="#ffa374"/>
<clipPath id="c949"><rect x="896.94" y="307.7" width="65.46" height="15.2"/></clipPath>
<text x="899.24" y="318.6" font-size="9.1" fill="#3a2419" letter-spacing="-0.03" stroke="#3a2419" stroke-width="0.22" clip-path="url(#c949)">BOUNCE SNARE</text>
<rect x="912.61" y="308.6" width="1.1" height="2.4" fill="#1c1c1c" opacity="0.85"/>
<rect x="912.61" y="319.6" width="1.1" height="2.4" fill="#1c1c1c" opacity="0.85"/>
<rect x="929.22" y="308.6" width="1.1" height="2.4" fill="#1c1c1c" opacity="0.85"/>
<rect x="929.22" y="319.6" width="1.1" height="2.4" fill="#1c1c1c" opacity="0.85"/>
<rect x="945.84" y="308.6" width="1.1" height="2.4" fill="#1c1c1c" opacity="0.85"/>
<rect x="945.84" y="319.6" width="1.1" height="2.4" fill="#1c1c1c" opacity="0.85"/>
<rect x="962.8" y="307" width="66.76" height="16.6" fill="#1e1e1e" opacity="0.85"/>
<rect x="963.5" y="307.7" width="65.56" height="15.2" fill="#ffa374"/>
<clipPath id="c959"><rect x="963.5" y="307.7" width="65.26" height="15.2"/></clipPath>
<text x="965.8" y="318.6" font-size="9.1" fill="#3a2419" letter-spacing="-0.03" stroke="#3a2419" stroke-width="0.22" clip-path="url(#c959)">BOUNCE SNARE</text>
<rect x="979.07" y="308.6" width="1.1" height="2.4" fill="#1c1c1c" opacity="0.85"/>
<rect x="979.07" y="319.6" width="1.1" height="2.4" fill="#1c1c1c" opacity="0.85"/>
<rect x="995.68" y="308.6" width="1.1" height="2.4" fill="#1c1c1c" opacity="0.85"/>
<rect x="995.68" y="319.6" width="1.1" height="2.4" fill="#1c1c1c" opacity="0.85"/>
<rect x="1012.3" y="308.6" width="1.1" height="2.4" fill="#1c1c1c" opacity="0.85"/>
<rect x="1012.3" y="319.6" width="1.1" height="2.4" fill="#1c1c1c" opacity="0.85"/>
<line x1="896.64" y1="307.8" x2="896.64" y2="322.8" stroke="#c27a55" stroke-width="1"/>
<rect x="495.3" y="237.8" width="1.9" height="15" fill="#ffa374"/>
<rect x="561.8" y="237.8" width="2.4" height="15" fill="#ffa374"/>
<rect x="761" y="237.8" width="2" height="15" fill="#ffa374"/>
<rect x="827.4" y="237.8" width="1.8" height="15" fill="#ffa374"/>
<rect x="960" y="237.8" width="2.8" height="15" fill="#ffa374"/>
<rect x="1027.1" y="237.8" width="2" height="15" fill="#ffa374"/>
<rect x="99.41" y="221.8" width="198.58" height="6.5" fill="#e6655e" opacity="0.93"/>
<rect x="365.25" y="221.8" width="63.65" height="6.5" fill="#e6655e" opacity="0.93"/>
<rect x="431.3" y="221.8" width="57.6" height="6.5" fill="#e6655e" opacity="0.93"/>
<rect x="498.18" y="221.8" width="124.12" height="6.5" fill="#e6655e" opacity="0.93"/>
<rect x="631.3" y="221.8" width="65.5" height="6.5" fill="#e6655e" opacity="0.93"/>
<rect x="830.48" y="221.8" width="198.58" height="6.5" fill="#e6655e" opacity="0.93"/>
<rect x="763.3" y="229.2" width="57.8" height="6" fill="#e6655e" opacity="0.93"/>
<rect x="99.41" y="326.9" width="198.58" height="3.7" fill="#c1c06c" opacity="0.93"/>
<rect x="365.25" y="326.9" width="123.65" height="3.7" fill="#c1c06c" opacity="0.93"/>
<rect x="498.18" y="326.9" width="132.12" height="3.7" fill="#c1c06c" opacity="0.93"/>
<rect x="763.3" y="326.9" width="57.8" height="3.7" fill="#c1c06c" opacity="0.93"/>
<rect x="830.48" y="326.9" width="198.58" height="3.7" fill="#c1c06c" opacity="0.93"/>
<rect x="365.25" y="332" width="123.65" height="3.8" fill="#c1c06c" opacity="0.93"/>
<rect x="498.18" y="332" width="132.12" height="3.8" fill="#c1c06c" opacity="0.93"/>
<rect x="763.3" y="332" width="57.8" height="3.8" fill="#c1c06c" opacity="0.93"/>
<rect x="830.48" y="332" width="198.58" height="3.8" fill="#c1c06c" opacity="0.93"/>
<rect x="127.23" y="337" width="1.8" height="3.7" fill="#c1c06c" opacity="0.93"/>
<rect x="160.46" y="337" width="1.8" height="3.7" fill="#c1c06c" opacity="0.93"/>
<rect x="193.69" y="337" width="1.8" height="3.7" fill="#c1c06c" opacity="0.93"/>
<rect x="226.92" y="337" width="1.8" height="3.7" fill="#c1c06c" opacity="0.93"/>
<rect x="260.16" y="337" width="1.8" height="3.7" fill="#c1c06c" opacity="0.93"/>
<rect x="293.39" y="337" width="1.8" height="3.7" fill="#c1c06c" opacity="0.93"/>
<rect x="393.08" y="337" width="1.8" height="3.7" fill="#c1c06c" opacity="0.93"/>
<rect x="426.31" y="337" width="1.8" height="3.7" fill="#c1c06c" opacity="0.93"/>
<rect x="459.54" y="337" width="1.8" height="3.7" fill="#c1c06c" opacity="0.93"/>
<rect x="526" y="337" width="1.8" height="3.7" fill="#c1c06c" opacity="0.93"/>
<rect x="559.23" y="337" width="1.8" height="3.7" fill="#c1c06c" opacity="0.93"/>
<rect x="592.46" y="337" width="1.8" height="3.7" fill="#c1c06c" opacity="0.93"/>
<rect x="625.69" y="337" width="1.8" height="3.7" fill="#c1c06c" opacity="0.93"/>
<rect x="858.3" y="337" width="1.8" height="3.7" fill="#c1c06c" opacity="0.93"/>
<rect x="891.53" y="337" width="1.8" height="3.7" fill="#c1c06c" opacity="0.93"/>
<rect x="924.76" y="337" width="1.8" height="3.7" fill="#c1c06c" opacity="0.93"/>
<rect x="99.3" y="341.5" width="7.6" height="3.6" fill="#c1c06c" opacity="0.93"/>
<rect x="232.3" y="341.5" width="8.2" height="3.6" fill="#c1c06c" opacity="0.93"/>
<rect x="299.2" y="341.5" width="7.6" height="3.6" fill="#c1c06c" opacity="0.93"/>
<rect x="365.4" y="341.5" width="7.6" height="3.6" fill="#c1c06c" opacity="0.93"/>
<rect x="431.3" y="341.5" width="7.6" height="3.6" fill="#c1c06c" opacity="0.93"/>
<rect x="498" y="341.5" width="7.2" height="3.6" fill="#c1c06c" opacity="0.93"/>
<rect x="564.3" y="341.5" width="7.8" height="3.6" fill="#c1c06c" opacity="0.93"/>
<rect x="730" y="341.5" width="8" height="3.6" fill="#c1c06c" opacity="0.93"/>
<rect x="830.1" y="341.5" width="7.6" height="3.6" fill="#c1c06c" opacity="0.93"/>
<rect x="90" y="346.3" width="8" height="4.4" fill="#c1c06c" opacity="0.93"/>
<rect x="223.8" y="346.3" width="8.3" height="4.4" fill="#c1c06c" opacity="0.93"/>
<rect x="290" y="346.3" width="8.3" height="4.4" fill="#c1c06c" opacity="0.93"/>
<rect x="356" y="346.3" width="8" height="4.4" fill="#c1c06c" opacity="0.93"/>
<rect x="621.9" y="346.3" width="8.4" height="4.4" fill="#c1c06c" opacity="0.93"/>
<rect x="688.3" y="346.3" width="8.5" height="4.4" fill="#c1c06c" opacity="0.93"/>
<rect x="365.25" y="351.6" width="199.05" height="3.4" fill="#c1c06c" opacity="0.93"/>
<rect x="830.48" y="351.6" width="132.22" height="3.4" fill="#c1c06c" opacity="0.93"/>
<rect x="298.09" y="423" width="332.7" height="16.6" fill="#1e1e1e" opacity="0.85"/>
<rect x="298.79" y="423.7" width="331.5" height="15.2" fill="#b03535"/>
<clipPath id="c1025"><rect x="298.79" y="423.7" width="331.2" height="15.2"/></clipPath>
<text x="301.09" y="434.6" font-size="9.5" fill="#f3dada" letter-spacing="-0.1" stroke="#f3dada" stroke-width="0.22" clip-path="url(#c1025)">Donk Bass</text>
<rect x="331.07" y="424.6" width="1.1" height="2.4" fill="#1c1c1c" opacity="0.85"/>
<rect x="331.07" y="435.6" width="1.1" height="2.4" fill="#1c1c1c" opacity="0.85"/>
<rect x="364.3" y="424.6" width="1.1" height="2.4" fill="#1c1c1c" opacity="0.85"/>
<rect x="364.3" y="435.6" width="1.1" height="2.4" fill="#1c1c1c" opacity="0.85"/>
<rect x="397.53" y="424.6" width="1.1" height="2.4" fill="#1c1c1c" opacity="0.85"/>
<rect x="397.53" y="435.6" width="1.1" height="2.4" fill="#1c1c1c" opacity="0.85"/>
<rect x="430.76" y="424.6" width="1.1" height="2.4" fill="#1c1c1c" opacity="0.85"/>
<rect x="430.76" y="435.6" width="1.1" height="2.4" fill="#1c1c1c" opacity="0.85"/>
<rect x="464" y="424.6" width="1.1" height="2.4" fill="#1c1c1c" opacity="0.85"/>
<rect x="464" y="435.6" width="1.1" height="2.4" fill="#1c1c1c" opacity="0.85"/>
<rect x="497.23" y="424.6" width="1.1" height="2.4" fill="#1c1c1c" opacity="0.85"/>
<rect x="497.23" y="435.6" width="1.1" height="2.4" fill="#1c1c1c" opacity="0.85"/>
<rect x="530.46" y="424.6" width="1.1" height="2.4" fill="#1c1c1c" opacity="0.85"/>
<rect x="530.46" y="435.6" width="1.1" height="2.4" fill="#1c1c1c" opacity="0.85"/>
<rect x="563.69" y="424.6" width="1.1" height="2.4" fill="#1c1c1c" opacity="0.85"/>
<rect x="563.69" y="435.6" width="1.1" height="2.4" fill="#1c1c1c" opacity="0.85"/>
<rect x="596.92" y="424.6" width="1.1" height="2.4" fill="#1c1c1c" opacity="0.85"/>
<rect x="596.92" y="435.6" width="1.1" height="2.4" fill="#1c1c1c" opacity="0.85"/>
<rect x="98.71" y="440.6" width="199.78" height="16.5" fill="#1e1e1e" opacity="0.85"/>
<rect x="99.41" y="441.3" width="198.58" height="15.1" fill="#b03535"/>
<clipPath id="c1047"><rect x="99.41" y="441.3" width="198.28" height="15.1"/></clipPath>
<text x="101.71" y="452.15" font-size="9.5" fill="#f3dada" letter-spacing="-0.1" stroke="#f3dada" stroke-width="0.22" clip-path="url(#c1047)">Organ Bass</text>
<rect x="131.69" y="442.2" width="1.1" height="2.4" fill="#1c1c1c" opacity="0.85"/>
<rect x="131.69" y="453.1" width="1.1" height="2.4" fill="#1c1c1c" opacity="0.85"/>
<rect x="164.92" y="442.2" width="1.1" height="2.4" fill="#1c1c1c" opacity="0.85"/>
<rect x="164.92" y="453.1" width="1.1" height="2.4" fill="#1c1c1c" opacity="0.85"/>
<rect x="198.15" y="442.2" width="1.1" height="2.4" fill="#1c1c1c" opacity="0.85"/>
<rect x="198.15" y="453.1" width="1.1" height="2.4" fill="#1c1c1c" opacity="0.85"/>
<rect x="231.38" y="442.2" width="1.1" height="2.4" fill="#1c1c1c" opacity="0.85"/>
<rect x="231.38" y="453.1" width="1.1" height="2.4" fill="#1c1c1c" opacity="0.85"/>
<rect x="264.61" y="442.2" width="1.1" height="2.4" fill="#1c1c1c" opacity="0.85"/>
<rect x="264.61" y="453.1" width="1.1" height="2.4" fill="#1c1c1c" opacity="0.85"/>
<rect x="729.9" y="423" width="100.48" height="16.6" fill="#1e1e1e" opacity="0.85"/>
<rect x="730.6" y="423.7" width="99.28" height="15.2" fill="#b03535"/>
<clipPath id="c1061"><rect x="730.6" y="423.7" width="98.98" height="15.2"/></clipPath>
<text x="732.9" y="434.6" font-size="9.5" fill="#f3dada" letter-spacing="-0.1" stroke="#f3dada" stroke-width="0.22" clip-path="url(#c1061)">Donk Bass</text>
<rect x="763.07" y="424.6" width="1.1" height="2.4" fill="#1c1c1c" opacity="0.85"/>
<rect x="763.07" y="435.6" width="1.1" height="2.4" fill="#1c1c1c" opacity="0.85"/>
<rect x="796.3" y="424.6" width="1.1" height="2.4" fill="#1c1c1c" opacity="0.85"/>
<rect x="796.3" y="435.6" width="1.1" height="2.4" fill="#1c1c1c" opacity="0.85"/>
<rect x="829.78" y="423" width="199.78" height="16.6" fill="#1e1e1e" opacity="0.85"/>
<rect x="830.48" y="423.7" width="198.58" height="15.2" fill="#b03535"/>
<clipPath id="c1069"><rect x="830.48" y="423.7" width="198.28" height="15.2"/></clipPath>
<text x="832.78" y="434.6" font-size="9.5" fill="#f3dada" letter-spacing="-0.1" stroke="#f3dada" stroke-width="0.22" clip-path="url(#c1069)">Donk Bass</text>
<rect x="862.76" y="424.6" width="1.1" height="2.4" fill="#1c1c1c" opacity="0.85"/>
<rect x="862.76" y="435.6" width="1.1" height="2.4" fill="#1c1c1c" opacity="0.85"/>
<rect x="895.99" y="424.6" width="1.1" height="2.4" fill="#1c1c1c" opacity="0.85"/>
<rect x="895.99" y="435.6" width="1.1" height="2.4" fill="#1c1c1c" opacity="0.85"/>
<rect x="929.22" y="424.6" width="1.1" height="2.4" fill="#1c1c1c" opacity="0.85"/>
<rect x="929.22" y="435.6" width="1.1" height="2.4" fill="#1c1c1c" opacity="0.85"/>
<rect x="962.45" y="424.6" width="1.1" height="2.4" fill="#1c1c1c" opacity="0.85"/>
<rect x="962.45" y="435.6" width="1.1" height="2.4" fill="#1c1c1c" opacity="0.85"/>
<rect x="995.68" y="424.6" width="1.1" height="2.4" fill="#1c1c1c" opacity="0.85"/>
<rect x="995.68" y="435.6" width="1.1" height="2.4" fill="#1c1c1c" opacity="0.85"/>
<rect x="696.86" y="440.6" width="124.64" height="16.5" fill="#1e1e1e" opacity="0.85"/>
<rect x="697.56" y="441.3" width="123.44" height="15.1" fill="#b03535"/>
<clipPath id="c1083"><rect x="697.56" y="441.3" width="123.14" height="15.1"/></clipPath>
<text x="699.86" y="452.15" font-size="9.5" fill="#f3dada" letter-spacing="-0.1" stroke="#f3dada" stroke-width="0.22" clip-path="url(#c1083)">Organ Bass</text>
<rect x="729.84" y="442.2" width="1.1" height="2.4" fill="#1c1c1c" opacity="0.85"/>
<rect x="729.84" y="453.1" width="1.1" height="2.4" fill="#1c1c1c" opacity="0.85"/>
<rect x="763.07" y="442.2" width="1.1" height="2.4" fill="#1c1c1c" opacity="0.85"/>
<rect x="763.07" y="453.1" width="1.1" height="2.4" fill="#1c1c1c" opacity="0.85"/>
<rect x="796.3" y="442.2" width="1.1" height="2.4" fill="#1c1c1c" opacity="0.85"/>
<rect x="796.3" y="453.1" width="1.1" height="2.4" fill="#1c1c1c" opacity="0.85"/>
<line x1="364.85" y1="423.8" x2="364.85" y2="438.8" stroke="#7a2424" stroke-width="1"/>
<line x1="497.78" y1="423.8" x2="497.78" y2="438.8" stroke="#7a2424" stroke-width="1"/>
<line x1="963" y1="423.8" x2="963" y2="438.8" stroke="#7a2424" stroke-width="1"/>
<rect x="298.09" y="523.4" width="58.31" height="16.4" fill="#1e1e1e" opacity="0.85"/>
<rect x="298.79" y="524.1" width="57.11" height="15" fill="#ff94a6"/>
<clipPath id="c1096"><rect x="298.79" y="524.1" width="56.81" height="15"/></clipPath>
<text x="301.09" y="534.9" font-size="9.5" fill="#4a2a32" letter-spacing="0.1" stroke="#4a2a32" stroke-width="0.22" clip-path="url(#c1096)">Piano Stabs</text>
<rect x="331.07" y="525" width="1.1" height="2.4" fill="#1c1c1c" opacity="0.85"/>
<rect x="331.07" y="535.8" width="1.1" height="2.4" fill="#1c1c1c" opacity="0.85"/>
<rect x="354" y="524.1" width="1.9" height="15" fill="#a890b0"/>
<rect x="364.55" y="523.4" width="58.65" height="16.4" fill="#1e1e1e" opacity="0.85"/>
<rect x="365.25" y="524.1" width="57.45" height="15" fill="#ff94a6"/>
<clipPath id="c1103"><rect x="365.25" y="524.1" width="57.15" height="15"/></clipPath>
<text x="367.55" y="534.9" font-size="9.5" fill="#4a2a32" letter-spacing="0.1" stroke="#4a2a32" stroke-width="0.22" clip-path="url(#c1103)">Piano Stabs</text>
<rect x="397.53" y="525" width="1.1" height="2.4" fill="#1c1c1c" opacity="0.85"/>
<rect x="397.53" y="535.8" width="1.1" height="2.4" fill="#1c1c1c" opacity="0.85"/>
<rect x="420.8" y="524.1" width="1.9" height="15" fill="#a890b0"/>
<rect x="423" y="523.4" width="8.5" height="16.4" fill="#1e1e1e" opacity="0.85"/>
<rect x="423.7" y="524.1" width="7.3" height="15" fill="#ff94a6"/>
<clipPath id="c1110"><rect x="423.7" y="524.1" width="7" height="15"/></clipPath>
<text x="426" y="534.9" font-size="9.5" fill="#4a2a32" letter-spacing="0.1" stroke="#4a2a32" stroke-width="0.22" clip-path="url(#c1110)">P</text>
<rect x="431" y="523.4" width="58.1" height="16.4" fill="#1e1e1e" opacity="0.85"/>
<rect x="431.7" y="524.1" width="56.9" height="15" fill="#ff94a6"/>
<clipPath id="c1114"><rect x="431.7" y="524.1" width="56.6" height="15"/></clipPath>
<text x="434" y="534.9" font-size="9.5" fill="#4a2a32" letter-spacing="0.1" stroke="#4a2a32" stroke-width="0.22" clip-path="url(#c1114)">Piano Stabs</text>
<rect x="464" y="525" width="1.1" height="2.4" fill="#1c1c1c" opacity="0.85"/>
<rect x="464" y="535.8" width="1.1" height="2.4" fill="#1c1c1c" opacity="0.85"/>
<rect x="486.7" y="524.1" width="1.9" height="15" fill="#a890b0"/>
<rect x="489.1" y="523.4" width="8.5" height="16.4" fill="#1e1e1e" opacity="0.85"/>
<rect x="489.8" y="524.1" width="7.3" height="15" fill="#ff94a6"/>
<clipPath id="c1121"><rect x="489.8" y="524.1" width="7" height="15"/></clipPath>
<text x="492.1" y="534.9" font-size="9.5" fill="#4a2a32" letter-spacing="0.1" stroke="#4a2a32" stroke-width="0.22" clip-path="url(#c1121)">P</text>
<rect x="696.86" y="523.4" width="124.64" height="16.4" fill="#1e1e1e" opacity="0.85"/>
<rect x="697.56" y="524.1" width="123.44" height="15" fill="#ff94a6"/>
<clipPath id="c1125"><rect x="697.56" y="524.1" width="123.14" height="15"/></clipPath>
<text x="699.86" y="534.9" font-size="9.5" fill="#4a2a32" letter-spacing="0.1" stroke="#4a2a32" stroke-width="0.22" clip-path="url(#c1125)">Piano Stabs</text>
<rect x="729.84" y="525" width="1.1" height="2.4" fill="#1c1c1c" opacity="0.85"/>
<rect x="729.84" y="535.8" width="1.1" height="2.4" fill="#1c1c1c" opacity="0.85"/>
<rect x="763.07" y="525" width="1.1" height="2.4" fill="#1c1c1c" opacity="0.85"/>
<rect x="763.07" y="535.8" width="1.1" height="2.4" fill="#1c1c1c" opacity="0.85"/>
<rect x="796.3" y="525" width="1.1" height="2.4" fill="#1c1c1c" opacity="0.85"/>
<rect x="796.3" y="535.8" width="1.1" height="2.4" fill="#1c1c1c" opacity="0.85"/>
<rect x="829.78" y="523.4" width="199.78" height="16.4" fill="#1e1e1e" opacity="0.85"/>
<rect x="830.48" y="524.1" width="198.58" height="15" fill="#ff94a6"/>
<clipPath id="c1135"><rect x="830.48" y="524.1" width="198.28" height="15"/></clipPath>
<text x="832.78" y="534.9" font-size="9.5" fill="#4a2a32" letter-spacing="0.1" stroke="#4a2a32" stroke-width="0.22" clip-path="url(#c1135)">Piano Stabs</text>
<rect x="862.76" y="525" width="1.1" height="2.4" fill="#1c1c1c" opacity="0.85"/>
<rect x="862.76" y="535.8" width="1.1" height="2.4" fill="#1c1c1c" opacity="0.85"/>
<rect x="895.99" y="525" width="1.1" height="2.4" fill="#1c1c1c" opacity="0.85"/>
<rect x="895.99" y="535.8" width="1.1" height="2.4" fill="#1c1c1c" opacity="0.85"/>
<rect x="929.22" y="525" width="1.1" height="2.4" fill="#1c1c1c" opacity="0.85"/>
<rect x="929.22" y="535.8" width="1.1" height="2.4" fill="#1c1c1c" opacity="0.85"/>
<rect x="962.45" y="525" width="1.1" height="2.4" fill="#1c1c1c" opacity="0.85"/>
<rect x="962.45" y="535.8" width="1.1" height="2.4" fill="#1c1c1c" opacity="0.85"/>
<rect x="995.68" y="525" width="1.1" height="2.4" fill="#1c1c1c" opacity="0.85"/>
<rect x="995.68" y="535.8" width="1.1" height="2.4" fill="#1c1c1c" opacity="0.85"/>
<line x1="963" y1="524.2" x2="963" y2="539" stroke="#b86878" stroke-width="1"/>
<rect x="497.48" y="540.8" width="133.32" height="16.7" fill="#1e1e1e" opacity="0.85"/>
<rect x="498.18" y="541.5" width="132.12" height="15.3" fill="#ff94a6"/>
<clipPath id="c1150"><rect x="498.18" y="541.5" width="131.82" height="15.3"/></clipPath>
<text x="500.48" y="552.45" font-size="9.5" fill="#4a2a32" letter-spacing="0.1" stroke="#4a2a32" stroke-width="0.22" clip-path="url(#c1150)">Synth Atmos Loop</text>
<rect x="501.38" y="542.4" width="1.1" height="2.4" fill="#1c1c1c" opacity="0.85"/>
<rect x="501.38" y="553.5" width="1.1" height="2.4" fill="#1c1c1c" opacity="0.85"/>
<rect x="505.53" y="542.4" width="1.1" height="2.4" fill="#1c1c1c" opacity="0.85"/>
<rect x="505.53" y="553.5" width="1.1" height="2.4" fill="#1c1c1c" opacity="0.85"/>
<rect x="509.69" y="542.4" width="1.1" height="2.4" fill="#1c1c1c" opacity="0.85"/>
<rect x="509.69" y="553.5" width="1.1" height="2.4" fill="#1c1c1c" opacity="0.85"/>
<rect x="513.84" y="542.4" width="1.1" height="2.4" fill="#1c1c1c" opacity="0.85"/>
<rect x="513.84" y="553.5" width="1.1" height="2.4" fill="#1c1c1c" opacity="0.85"/>
<rect x="517.99" y="542.4" width="1.1" height="2.4" fill="#1c1c1c" opacity="0.85"/>
<rect x="517.99" y="553.5" width="1.1" height="2.4" fill="#1c1c1c" opacity="0.85"/>
<rect x="522.15" y="542.4" width="1.1" height="2.4" fill="#1c1c1c" opacity="0.85"/>
<rect x="522.15" y="553.5" width="1.1" height="2.4" fill="#1c1c1c" opacity="0.85"/>
<rect x="526.3" y="542.4" width="1.1" height="2.4" fill="#1c1c1c" opacity="0.85"/>
<rect x="526.3" y="553.5" width="1.1" height="2.4" fill="#1c1c1c" opacity="0.85"/>
<rect x="530.46" y="542.4" width="1.1" height="2.4" fill="#1c1c1c" opacity="0.85"/>
<rect x="530.46" y="553.5" width="1.1" height="2.4" fill="#1c1c1c" opacity="0.85"/>
<rect x="534.61" y="542.4" width="1.1" height="2.4" fill="#1c1c1c" opacity="0.85"/>
<rect x="534.61" y="553.5" width="1.1" height="2.4" fill="#1c1c1c" opacity="0.85"/>
<rect x="538.76" y="542.4" width="1.1" height="2.4" fill="#1c1c1c" opacity="0.85"/>
<rect x="538.76" y="553.5" width="1.1" height="2.4" fill="#1c1c1c" opacity="0.85"/>
<rect x="542.92" y="542.4" width="1.1" height="2.4" fill="#1c1c1c" opacity="0.85"/>
<rect x="542.92" y="553.5" width="1.1" height="2.4" fill="#1c1c1c" opacity="0.85"/>
<rect x="547.07" y="542.4" width="1.1" height="2.4" fill="#1c1c1c" opacity="0.85"/>
<rect x="547.07" y="553.5" width="1.1" height="2.4" fill="#1c1c1c" opacity="0.85"/>
<rect x="551.23" y="542.4" width="1.1" height="2.4" fill="#1c1c1c" opacity="0.85"/>
<rect x="551.23" y="553.5" width="1.1" height="2.4" fill="#1c1c1c" opacity="0.85"/>
<rect x="555.38" y="542.4" width="1.1" height="2.4" fill="#1c1c1c" opacity="0.85"/>
<rect x="555.38" y="553.5" width="1.1" height="2.4" fill="#1c1c1c" opacity="0.85"/>
<rect x="559.53" y="542.4" width="1.1" height="2.4" fill="#1c1c1c" opacity="0.85"/>
<rect x="559.53" y="553.5" width="1.1" height="2.4" fill="#1c1c1c" opacity="0.85"/>
<rect x="563.69" y="542.4" width="1.1" height="2.4" fill="#1c1c1c" opacity="0.85"/>
<rect x="563.69" y="553.5" width="1.1" height="2.4" fill="#1c1c1c" opacity="0.85"/>
<rect x="567.84" y="542.4" width="1.1" height="2.4" fill="#1c1c1c" opacity="0.85"/>
<rect x="567.84" y="553.5" width="1.1" height="2.4" fill="#1c1c1c" opacity="0.85"/>
<rect x="571.99" y="542.4" width="1.1" height="2.4" fill="#1c1c1c" opacity="0.85"/>
<rect x="571.99" y="553.5" width="1.1" height="2.4" fill="#1c1c1c" opacity="0.85"/>
<rect x="576.15" y="542.4" width="1.1" height="2.4" fill="#1c1c1c" opacity="0.85"/>
<rect x="576.15" y="553.5" width="1.1" height="2.4" fill="#1c1c1c" opacity="0.85"/>
<rect x="580.3" y="542.4" width="1.1" height="2.4" fill="#1c1c1c" opacity="0.85"/>
<rect x="580.3" y="553.5" width="1.1" height="2.4" fill="#1c1c1c" opacity="0.85"/>
<rect x="584.46" y="542.4" width="1.1" height="2.4" fill="#1c1c1c" opacity="0.85"/>
<rect x="584.46" y="553.5" width="1.1" height="2.4" fill="#1c1c1c" opacity="0.85"/>
<rect x="588.61" y="542.4" width="1.1" height="2.4" fill="#1c1c1c" opacity="0.85"/>
<rect x="588.61" y="553.5" width="1.1" height="2.4" fill="#1c1c1c" opacity="0.85"/>
<rect x="592.76" y="542.4" width="1.1" height="2.4" fill="#1c1c1c" opacity="0.85"/>
<rect x="592.76" y="553.5" width="1.1" height="2.4" fill="#1c1c1c" opacity="0.85"/>
<rect x="596.92" y="542.4" width="1.1" height="2.4" fill="#1c1c1c" opacity="0.85"/>
<rect x="596.92" y="553.5" width="1.1" height="2.4" fill="#1c1c1c" opacity="0.85"/>
<rect x="601.07" y="542.4" width="1.1" height="2.4" fill="#1c1c1c" opacity="0.85"/>
<rect x="601.07" y="553.5" width="1.1" height="2.4" fill="#1c1c1c" opacity="0.85"/>
<rect x="605.22" y="542.4" width="1.1" height="2.4" fill="#1c1c1c" opacity="0.85"/>
<rect x="605.22" y="553.5" width="1.1" height="2.4" fill="#1c1c1c" opacity="0.85"/>
<rect x="609.38" y="542.4" width="1.1" height="2.4" fill="#1c1c1c" opacity="0.85"/>
<rect x="609.38" y="553.5" width="1.1" height="2.4" fill="#1c1c1c" opacity="0.85"/>
<rect x="613.53" y="542.4" width="1.1" height="2.4" fill="#1c1c1c" opacity="0.85"/>
<rect x="613.53" y="553.5" width="1.1" height="2.4" fill="#1c1c1c" opacity="0.85"/>
<rect x="617.69" y="542.4" width="1.1" height="2.4" fill="#1c1c1c" opacity="0.85"/>
<rect x="617.69" y="553.5" width="1.1" height="2.4" fill="#1c1c1c" opacity="0.85"/>
<rect x="621.84" y="542.4" width="1.1" height="2.4" fill="#1c1c1c" opacity="0.85"/>
<rect x="621.84" y="553.5" width="1.1" height="2.4" fill="#1c1c1c" opacity="0.85"/>
<rect x="625.99" y="542.4" width="1.1" height="2.4" fill="#1c1c1c" opacity="0.85"/>
<rect x="625.99" y="553.5" width="1.1" height="2.4" fill="#1c1c1c" opacity="0.85"/>
<rect x="365.25" y="560.6" width="65.86" height="13.1" fill="#8568d8" opacity="0.95"/>
<rect x="830.48" y="560.6" width="65.86" height="13.1" fill="#8568d8" opacity="0.95"/>
<rect x="298.19" y="640.8" width="66.66" height="16.9" fill="#1e1e1e" opacity="0.85"/>
<rect x="298.89" y="641.5" width="65.46" height="15.5" fill="#ffffff"/>
<clipPath id="c1218"><rect x="298.89" y="641.5" width="65.16" height="15.5"/></clipPath>
<text x="301.19" y="652.55" font-size="9.5" fill="#3c3c3c" letter-spacing="0.1" stroke="#3c3c3c" stroke-width="0.22" clip-path="url(#c1218)">Main Vox</text>
<rect x="364.65" y="640.8" width="133.12" height="16.9" fill="#1e1e1e" opacity="0.85"/>
<rect x="365.35" y="641.5" width="131.92" height="15.5" fill="#ffffff"/>
<rect x="430.76" y="642.4" width="1.1" height="2.4" fill="#1c1c1c" opacity="0.85"/>
<rect x="430.76" y="653.7" width="1.1" height="2.4" fill="#1c1c1c" opacity="0.85"/>
<rect x="497.58" y="640.8" width="66.76" height="16.9" fill="#1e1e1e" opacity="0.85"/>
<rect x="498.28" y="641.5" width="65.56" height="15.5" fill="#ffffff"/>
<rect x="829.88" y="640.8" width="133.22" height="16.9" fill="#1e1e1e" opacity="0.85"/>
<rect x="830.58" y="641.5" width="132.02" height="15.5" fill="#ffffff"/>
<clipPath id="c1228"><rect x="830.58" y="641.5" width="131.72" height="15.5"/></clipPath>
<text x="832.88" y="652.55" font-size="9.5" fill="#3c3c3c" letter-spacing="0.1" stroke="#3c3c3c" stroke-width="0.22" clip-path="url(#c1228)">Main Vox</text>
<rect x="895.99" y="642.4" width="1.1" height="2.4" fill="#1c1c1c" opacity="0.85"/>
<rect x="895.99" y="653.7" width="1.1" height="2.4" fill="#1c1c1c" opacity="0.85"/>
<rect x="962.8" y="640.8" width="66.76" height="16.9" fill="#1e1e1e" opacity="0.85"/>
<rect x="963.5" y="641.5" width="65.56" height="15.5" fill="#ffffff"/>
<rect x="165.07" y="658.7" width="133.22" height="16.5" fill="#1e1e1e" opacity="0.85"/>
<rect x="165.77" y="659.4" width="132.02" height="15.1" fill="#ffffff"/>
<clipPath id="c1236"><rect x="165.77" y="659.4" width="131.72" height="15.1"/></clipPath>
<text x="168.07" y="670.25" font-size="9.1" fill="#3c3c3c" letter-spacing="-0.05" stroke="#3c3c3c" stroke-width="0.22" clip-path="url(#c1236)">VOLUME AND LOWPASS FILTER</text>
<rect x="173.23" y="660.3" width="1.1" height="2.4" fill="#1c1c1c" opacity="0.85"/>
<rect x="173.23" y="671.2" width="1.1" height="2.4" fill="#1c1c1c" opacity="0.85"/>
<rect x="181.54" y="660.3" width="1.1" height="2.4" fill="#1c1c1c" opacity="0.85"/>
<rect x="181.54" y="671.2" width="1.1" height="2.4" fill="#1c1c1c" opacity="0.85"/>
<rect x="189.84" y="660.3" width="1.1" height="2.4" fill="#1c1c1c" opacity="0.85"/>
<rect x="189.84" y="671.2" width="1.1" height="2.4" fill="#1c1c1c" opacity="0.85"/>
<rect x="198.15" y="660.3" width="1.1" height="2.4" fill="#1c1c1c" opacity="0.85"/>
<rect x="198.15" y="671.2" width="1.1" height="2.4" fill="#1c1c1c" opacity="0.85"/>
<rect x="206.46" y="660.3" width="1.1" height="2.4" fill="#1c1c1c" opacity="0.85"/>
<rect x="206.46" y="671.2" width="1.1" height="2.4" fill="#1c1c1c" opacity="0.85"/>
<rect x="214.77" y="660.3" width="1.1" height="2.4" fill="#1c1c1c" opacity="0.85"/>
<rect x="214.77" y="671.2" width="1.1" height="2.4" fill="#1c1c1c" opacity="0.85"/>
<rect x="223.07" y="660.3" width="1.1" height="2.4" fill="#1c1c1c" opacity="0.85"/>
<rect x="223.07" y="671.2" width="1.1" height="2.4" fill="#1c1c1c" opacity="0.85"/>
<rect x="231.38" y="660.3" width="1.1" height="2.4" fill="#1c1c1c" opacity="0.85"/>
<rect x="231.38" y="671.2" width="1.1" height="2.4" fill="#1c1c1c" opacity="0.85"/>
<rect x="239.69" y="660.3" width="1.1" height="2.4" fill="#1c1c1c" opacity="0.85"/>
<rect x="239.69" y="671.2" width="1.1" height="2.4" fill="#1c1c1c" opacity="0.85"/>
<rect x="248" y="660.3" width="1.1" height="2.4" fill="#1c1c1c" opacity="0.85"/>
<rect x="248" y="671.2" width="1.1" height="2.4" fill="#1c1c1c" opacity="0.85"/>
<rect x="256.31" y="660.3" width="1.1" height="2.4" fill="#1c1c1c" opacity="0.85"/>
<rect x="256.31" y="671.2" width="1.1" height="2.4" fill="#1c1c1c" opacity="0.85"/>
<rect x="264.61" y="660.3" width="1.1" height="2.4" fill="#1c1c1c" opacity="0.85"/>
<rect x="264.61" y="671.2" width="1.1" height="2.4" fill="#1c1c1c" opacity="0.85"/>
<rect x="272.92" y="660.3" width="1.1" height="2.4" fill="#1c1c1c" opacity="0.85"/>
<rect x="272.92" y="671.2" width="1.1" height="2.4" fill="#1c1c1c" opacity="0.85"/>
<rect x="281.23" y="660.3" width="1.1" height="2.4" fill="#1c1c1c" opacity="0.85"/>
<rect x="281.23" y="671.2" width="1.1" height="2.4" fill="#1c1c1c" opacity="0.85"/>
<rect x="289.54" y="660.3" width="1.1" height="2.4" fill="#1c1c1c" opacity="0.85"/>
<rect x="289.54" y="671.2" width="1.1" height="2.4" fill="#1c1c1c" opacity="0.85"/>
<rect x="630.5" y="658.7" width="66.76" height="16.5" fill="#1e1e1e" opacity="0.85"/>
<rect x="631.2" y="659.4" width="65.56" height="15.1" fill="#ffffff"/>
<clipPath id="c1270"><rect x="631.2" y="659.4" width="65.26" height="15.1"/></clipPath>
<text x="633.5" y="670.25" font-size="9.1" fill="#3c3c3c" letter-spacing="-0.05" stroke="#3c3c3c" stroke-width="0.22" clip-path="url(#c1270)">VOLUME AND LOWPASS</text>
<rect x="638.45" y="660.3" width="1.1" height="2.4" fill="#1c1c1c" opacity="0.85"/>
<rect x="638.45" y="671.2" width="1.1" height="2.4" fill="#1c1c1c" opacity="0.85"/>
<rect x="646.76" y="660.3" width="1.1" height="2.4" fill="#1c1c1c" opacity="0.85"/>
<rect x="646.76" y="671.2" width="1.1" height="2.4" fill="#1c1c1c" opacity="0.85"/>
<rect x="655.07" y="660.3" width="1.1" height="2.4" fill="#1c1c1c" opacity="0.85"/>
<rect x="655.07" y="671.2" width="1.1" height="2.4" fill="#1c1c1c" opacity="0.85"/>
<rect x="663.38" y="660.3" width="1.1" height="2.4" fill="#1c1c1c" opacity="0.85"/>
<rect x="663.38" y="671.2" width="1.1" height="2.4" fill="#1c1c1c" opacity="0.85"/>
<rect x="671.69" y="660.3" width="1.1" height="2.4" fill="#1c1c1c" opacity="0.85"/>
<rect x="671.69" y="671.2" width="1.1" height="2.4" fill="#1c1c1c" opacity="0.85"/>
<rect x="679.99" y="660.3" width="1.1" height="2.4" fill="#1c1c1c" opacity="0.85"/>
<rect x="679.99" y="671.2" width="1.1" height="2.4" fill="#1c1c1c" opacity="0.85"/>
<rect x="688.3" y="660.3" width="1.1" height="2.4" fill="#1c1c1c" opacity="0.85"/>
<rect x="688.3" y="671.2" width="1.1" height="2.4" fill="#1c1c1c" opacity="0.85"/>
<rect x="763.42" y="658.7" width="66.56" height="16.5" fill="#1e1e1e" opacity="0.85"/>
<rect x="764.12" y="659.4" width="65.36" height="15.1" fill="#ffffff"/>
<clipPath id="c1288"><rect x="764.12" y="659.4" width="65.06" height="15.1"/></clipPath>
<text x="766.42" y="670.25" font-size="9.1" fill="#3c3c3c" letter-spacing="-0.05" stroke="#3c3c3c" stroke-width="0.22" clip-path="url(#c1288)">VOLUME AND LOWPASS</text>
<rect x="771.38" y="660.3" width="1.1" height="2.4" fill="#1c1c1c" opacity="0.85"/>
<rect x="771.38" y="671.2" width="1.1" height="2.4" fill="#1c1c1c" opacity="0.85"/>
<rect x="779.68" y="660.3" width="1.1" height="2.4" fill="#1c1c1c" opacity="0.85"/>
<rect x="779.68" y="671.2" width="1.1" height="2.4" fill="#1c1c1c" opacity="0.85"/>
<rect x="787.99" y="660.3" width="1.1" height="2.4" fill="#1c1c1c" opacity="0.85"/>
<rect x="787.99" y="671.2" width="1.1" height="2.4" fill="#1c1c1c" opacity="0.85"/>
<rect x="796.3" y="660.3" width="1.1" height="2.4" fill="#1c1c1c" opacity="0.85"/>
<rect x="796.3" y="671.2" width="1.1" height="2.4" fill="#1c1c1c" opacity="0.85"/>
<rect x="804.61" y="660.3" width="1.1" height="2.4" fill="#1c1c1c" opacity="0.85"/>
<rect x="804.61" y="671.2" width="1.1" height="2.4" fill="#1c1c1c" opacity="0.85"/>
<rect x="812.91" y="660.3" width="1.1" height="2.4" fill="#1c1c1c" opacity="0.85"/>
<rect x="812.91" y="671.2" width="1.1" height="2.4" fill="#1c1c1c" opacity="0.85"/>
<rect x="821.22" y="660.3" width="1.1" height="2.4" fill="#1c1c1c" opacity="0.85"/>
<rect x="821.22" y="671.2" width="1.1" height="2.4" fill="#1c1c1c" opacity="0.85"/>
<rect x="32.25" y="676.2" width="266.04" height="16.4" fill="#1e1e1e" opacity="0.85"/>
<rect x="32.95" y="676.9" width="264.84" height="15" fill="#ffffff"/>
<clipPath id="c1306"><rect x="32.95" y="676.9" width="264.54" height="15"/></clipPath>
<text x="35.25" y="687.7" font-size="9.5" fill="#3c3c3c" letter-spacing="0.1" stroke="#3c3c3c" stroke-width="0.22" clip-path="url(#c1306)">Vocal Atmos Loop</text>
<rect x="40.31" y="677.8" width="1.1" height="2.4" fill="#1c1c1c" opacity="0.85"/>
<rect x="40.31" y="688.6" width="1.1" height="2.4" fill="#1c1c1c" opacity="0.85"/>
<rect x="48.62" y="677.8" width="1.1" height="2.4" fill="#1c1c1c" opacity="0.85"/>
<rect x="48.62" y="688.6" width="1.1" height="2.4" fill="#1c1c1c" opacity="0.85"/>
<rect x="56.92" y="677.8" width="1.1" height="2.4" fill="#1c1c1c" opacity="0.85"/>
<rect x="56.92" y="688.6" width="1.1" height="2.4" fill="#1c1c1c" opacity="0.85"/>
<rect x="65.23" y="677.8" width="1.1" height="2.4" fill="#1c1c1c" opacity="0.85"/>
<rect x="65.23" y="688.6" width="1.1" height="2.4" fill="#1c1c1c" opacity="0.85"/>
<rect x="73.54" y="677.8" width="1.1" height="2.4" fill="#1c1c1c" opacity="0.85"/>
<rect x="73.54" y="688.6" width="1.1" height="2.4" fill="#1c1c1c" opacity="0.85"/>
<rect x="81.85" y="677.8" width="1.1" height="2.4" fill="#1c1c1c" opacity="0.85"/>
<rect x="81.85" y="688.6" width="1.1" height="2.4" fill="#1c1c1c" opacity="0.85"/>
<rect x="90.15" y="677.8" width="1.1" height="2.4" fill="#1c1c1c" opacity="0.85"/>
<rect x="90.15" y="688.6" width="1.1" height="2.4" fill="#1c1c1c" opacity="0.85"/>
<rect x="98.46" y="677.8" width="1.1" height="2.4" fill="#1c1c1c" opacity="0.85"/>
<rect x="98.46" y="688.6" width="1.1" height="2.4" fill="#1c1c1c" opacity="0.85"/>
<rect x="106.77" y="677.8" width="1.1" height="2.4" fill="#1c1c1c" opacity="0.85"/>
<rect x="106.77" y="688.6" width="1.1" height="2.4" fill="#1c1c1c" opacity="0.85"/>
<rect x="115.08" y="677.8" width="1.1" height="2.4" fill="#1c1c1c" opacity="0.85"/>
<rect x="115.08" y="688.6" width="1.1" height="2.4" fill="#1c1c1c" opacity="0.85"/>
<rect x="123.38" y="677.8" width="1.1" height="2.4" fill="#1c1c1c" opacity="0.85"/>
<rect x="123.38" y="688.6" width="1.1" height="2.4" fill="#1c1c1c" opacity="0.85"/>
<rect x="131.69" y="677.8" width="1.1" height="2.4" fill="#1c1c1c" opacity="0.85"/>
<rect x="131.69" y="688.6" width="1.1" height="2.4" fill="#1c1c1c" opacity="0.85"/>
<rect x="140" y="677.8" width="1.1" height="2.4" fill="#1c1c1c" opacity="0.85"/>
<rect x="140" y="688.6" width="1.1" height="2.4" fill="#1c1c1c" opacity="0.85"/>
<rect x="148.31" y="677.8" width="1.1" height="2.4" fill="#1c1c1c" opacity="0.85"/>
<rect x="148.31" y="688.6" width="1.1" height="2.4" fill="#1c1c1c" opacity="0.85"/>
<rect x="156.61" y="677.8" width="1.1" height="2.4" fill="#1c1c1c" opacity="0.85"/>
<rect x="156.61" y="688.6" width="1.1" height="2.4" fill="#1c1c1c" opacity="0.85"/>
<rect x="164.92" y="677.8" width="1.1" height="2.4" fill="#1c1c1c" opacity="0.85"/>
<rect x="164.92" y="688.6" width="1.1" height="2.4" fill="#1c1c1c" opacity="0.85"/>
<rect x="173.23" y="677.8" width="1.1" height="2.4" fill="#1c1c1c" opacity="0.85"/>
<rect x="173.23" y="688.6" width="1.1" height="2.4" fill="#1c1c1c" opacity="0.85"/>
<rect x="181.54" y="677.8" width="1.1" height="2.4" fill="#1c1c1c" opacity="0.85"/>
<rect x="181.54" y="688.6" width="1.1" height="2.4" fill="#1c1c1c" opacity="0.85"/>
<rect x="189.84" y="677.8" width="1.1" height="2.4" fill="#1c1c1c" opacity="0.85"/>
<rect x="189.84" y="688.6" width="1.1" height="2.4" fill="#1c1c1c" opacity="0.85"/>
<rect x="198.15" y="677.8" width="1.1" height="2.4" fill="#1c1c1c" opacity="0.85"/>
<rect x="198.15" y="688.6" width="1.1" height="2.4" fill="#1c1c1c" opacity="0.85"/>
<rect x="206.46" y="677.8" width="1.1" height="2.4" fill="#1c1c1c" opacity="0.85"/>
<rect x="206.46" y="688.6" width="1.1" height="2.4" fill="#1c1c1c" opacity="0.85"/>
<rect x="214.77" y="677.8" width="1.1" height="2.4" fill="#1c1c1c" opacity="0.85"/>
<rect x="214.77" y="688.6" width="1.1" height="2.4" fill="#1c1c1c" opacity="0.85"/>
<rect x="223.07" y="677.8" width="1.1" height="2.4" fill="#1c1c1c" opacity="0.85"/>
<rect x="223.07" y="688.6" width="1.1" height="2.4" fill="#1c1c1c" opacity="0.85"/>
<rect x="231.38" y="677.8" width="1.1" height="2.4" fill="#1c1c1c" opacity="0.85"/>
<rect x="231.38" y="688.6" width="1.1" height="2.4" fill="#1c1c1c" opacity="0.85"/>
<rect x="239.69" y="677.8" width="1.1" height="2.4" fill="#1c1c1c" opacity="0.85"/>
<rect x="239.69" y="688.6" width="1.1" height="2.4" fill="#1c1c1c" opacity="0.85"/>
<rect x="248" y="677.8" width="1.1" height="2.4" fill="#1c1c1c" opacity="0.85"/>
<rect x="248" y="688.6" width="1.1" height="2.4" fill="#1c1c1c" opacity="0.85"/>
<rect x="256.31" y="677.8" width="1.1" height="2.4" fill="#1c1c1c" opacity="0.85"/>
<rect x="256.31" y="688.6" width="1.1" height="2.4" fill="#1c1c1c" opacity="0.85"/>
<rect x="264.61" y="677.8" width="1.1" height="2.4" fill="#1c1c1c" opacity="0.85"/>
<rect x="264.61" y="688.6" width="1.1" height="2.4" fill="#1c1c1c" opacity="0.85"/>
<rect x="272.92" y="677.8" width="1.1" height="2.4" fill="#1c1c1c" opacity="0.85"/>
<rect x="272.92" y="688.6" width="1.1" height="2.4" fill="#1c1c1c" opacity="0.85"/>
<rect x="281.23" y="677.8" width="1.1" height="2.4" fill="#1c1c1c" opacity="0.85"/>
<rect x="281.23" y="688.6" width="1.1" height="2.4" fill="#1c1c1c" opacity="0.85"/>
<rect x="289.54" y="677.8" width="1.1" height="2.4" fill="#1c1c1c" opacity="0.85"/>
<rect x="289.54" y="688.6" width="1.1" height="2.4" fill="#1c1c1c" opacity="0.85"/>
<rect x="497.58" y="676.2" width="133.02" height="16.4" fill="#1e1e1e" opacity="0.85"/>
<rect x="498.28" y="676.9" width="131.82" height="15" fill="#ffffff"/>
<clipPath id="c1372"><rect x="498.28" y="676.9" width="131.52" height="15"/></clipPath>
<text x="500.58" y="687.7" font-size="9.5" fill="#3c3c3c" letter-spacing="0.1" stroke="#3c3c3c" stroke-width="0.22" clip-path="url(#c1372)">Vocal Atmos Loop</text>
<rect x="505.53" y="677.8" width="1.1" height="2.4" fill="#1c1c1c" opacity="0.85"/>
<rect x="505.53" y="688.6" width="1.1" height="2.4" fill="#1c1c1c" opacity="0.85"/>
<rect x="513.84" y="677.8" width="1.1" height="2.4" fill="#1c1c1c" opacity="0.85"/>
<rect x="513.84" y="688.6" width="1.1" height="2.4" fill="#1c1c1c" opacity="0.85"/>
<rect x="522.15" y="677.8" width="1.1" height="2.4" fill="#1c1c1c" opacity="0.85"/>
<rect x="522.15" y="688.6" width="1.1" height="2.4" fill="#1c1c1c" opacity="0.85"/>
<rect x="530.46" y="677.8" width="1.1" height="2.4" fill="#1c1c1c" opacity="0.85"/>
<rect x="530.46" y="688.6" width="1.1" height="2.4" fill="#1c1c1c" opacity="0.85"/>
<rect x="538.76" y="677.8" width="1.1" height="2.4" fill="#1c1c1c" opacity="0.85"/>
<rect x="538.76" y="688.6" width="1.1" height="2.4" fill="#1c1c1c" opacity="0.85"/>
<rect x="547.07" y="677.8" width="1.1" height="2.4" fill="#1c1c1c" opacity="0.85"/>
<rect x="547.07" y="688.6" width="1.1" height="2.4" fill="#1c1c1c" opacity="0.85"/>
<rect x="555.38" y="677.8" width="1.1" height="2.4" fill="#1c1c1c" opacity="0.85"/>
<rect x="555.38" y="688.6" width="1.1" height="2.4" fill="#1c1c1c" opacity="0.85"/>
<rect x="563.69" y="677.8" width="1.1" height="2.4" fill="#1c1c1c" opacity="0.85"/>
<rect x="563.69" y="688.6" width="1.1" height="2.4" fill="#1c1c1c" opacity="0.85"/>
<rect x="571.99" y="677.8" width="1.1" height="2.4" fill="#1c1c1c" opacity="0.85"/>
<rect x="571.99" y="688.6" width="1.1" height="2.4" fill="#1c1c1c" opacity="0.85"/>
<rect x="580.3" y="677.8" width="1.1" height="2.4" fill="#1c1c1c" opacity="0.85"/>
<rect x="580.3" y="688.6" width="1.1" height="2.4" fill="#1c1c1c" opacity="0.85"/>
<rect x="588.61" y="677.8" width="1.1" height="2.4" fill="#1c1c1c" opacity="0.85"/>
<rect x="588.61" y="688.6" width="1.1" height="2.4" fill="#1c1c1c" opacity="0.85"/>
<rect x="596.92" y="677.8" width="1.1" height="2.4" fill="#1c1c1c" opacity="0.85"/>
<rect x="596.92" y="688.6" width="1.1" height="2.4" fill="#1c1c1c" opacity="0.85"/>
<rect x="605.22" y="677.8" width="1.1" height="2.4" fill="#1c1c1c" opacity="0.85"/>
<rect x="605.22" y="688.6" width="1.1" height="2.4" fill="#1c1c1c" opacity="0.85"/>
<rect x="613.53" y="677.8" width="1.1" height="2.4" fill="#1c1c1c" opacity="0.85"/>
<rect x="613.53" y="688.6" width="1.1" height="2.4" fill="#1c1c1c" opacity="0.85"/>
<rect x="621.84" y="677.8" width="1.1" height="2.4" fill="#1c1c1c" opacity="0.85"/>
<rect x="621.84" y="688.6" width="1.1" height="2.4" fill="#1c1c1c" opacity="0.85"/>
<rect x="48.4" y="693.6" width="17.3" height="16.5" fill="#3a3a3a" opacity="0.85"/>
<rect x="49.1" y="694.3" width="16.1" height="15.1" fill="#ffffff"/>
<clipPath id="c1406"><rect x="49.1" y="694.3" width="15.8" height="15.1"/></clipPath>
<text x="51.4" y="705.15" font-size="9.5" fill="#3c3c3c" letter-spacing="0.1" stroke="#3c3c3c" stroke-width="0.22" clip-path="url(#c1406)">Vox</text>
<rect x="81.6" y="693.6" width="17.3" height="16.5" fill="#3a3a3a" opacity="0.85"/>
<rect x="82.3" y="694.3" width="16.1" height="15.1" fill="#ffffff"/>
<clipPath id="c1410"><rect x="82.3" y="694.3" width="15.8" height="15.1"/></clipPath>
<text x="84.6" y="705.15" font-size="9.5" fill="#3c3c3c" letter-spacing="0.1" stroke="#3c3c3c" stroke-width="0.22" clip-path="url(#c1410)">Vox</text>
<rect x="122.7" y="693.6" width="17.3" height="16.5" fill="#3a3a3a" opacity="0.85"/>
<rect x="123.4" y="694.3" width="16.1" height="15.1" fill="#ffffff"/>
<clipPath id="c1414"><rect x="123.4" y="694.3" width="15.8" height="15.1"/></clipPath>
<text x="125.7" y="705.15" font-size="9.5" fill="#3c3c3c" letter-spacing="0.1" stroke="#3c3c3c" stroke-width="0.22" clip-path="url(#c1414)">Vox</text>
<rect x="164.3" y="693.6" width="17.3" height="16.5" fill="#3a3a3a" opacity="0.85"/>
<rect x="165" y="694.3" width="16.1" height="15.1" fill="#ffffff"/>
<clipPath id="c1418"><rect x="165" y="694.3" width="15.8" height="15.1"/></clipPath>
<text x="167.3" y="705.15" font-size="9.5" fill="#3c3c3c" letter-spacing="0.1" stroke="#3c3c3c" stroke-width="0.22" clip-path="url(#c1418)">Vox</text>
<rect x="197.5" y="693.6" width="17.3" height="16.5" fill="#3a3a3a" opacity="0.85"/>
<rect x="198.2" y="694.3" width="16.1" height="15.1" fill="#ffffff"/>
<clipPath id="c1422"><rect x="198.2" y="694.3" width="15.8" height="15.1"/></clipPath>
<text x="200.5" y="705.15" font-size="9.5" fill="#3c3c3c" letter-spacing="0.1" stroke="#3c3c3c" stroke-width="0.22" clip-path="url(#c1422)">Vox</text>
<rect x="231.7" y="693.6" width="17.3" height="16.5" fill="#3a3a3a" opacity="0.85"/>
<rect x="232.4" y="694.3" width="16.1" height="15.1" fill="#ffffff"/>
<clipPath id="c1426"><rect x="232.4" y="694.3" width="15.8" height="15.1"/></clipPath>
<text x="234.7" y="705.15" font-size="9.5" fill="#3c3c3c" letter-spacing="0.1" stroke="#3c3c3c" stroke-width="0.22" clip-path="url(#c1426)">Vox</text>
<rect x="264.9" y="693.6" width="17.3" height="16.5" fill="#3a3a3a" opacity="0.85"/>
<rect x="265.6" y="694.3" width="16.1" height="15.1" fill="#ffffff"/>
<clipPath id="c1430"><rect x="265.6" y="694.3" width="15.8" height="15.1"/></clipPath>
<text x="267.9" y="705.15" font-size="9.5" fill="#3c3c3c" letter-spacing="0.1" stroke="#3c3c3c" stroke-width="0.22" clip-path="url(#c1430)">Vox</text>
<rect x="298.7" y="693.6" width="17.3" height="16.5" fill="#3a3a3a" opacity="0.85"/>
<rect x="299.4" y="694.3" width="16.1" height="15.1" fill="#ffffff"/>
<clipPath id="c1434"><rect x="299.4" y="694.3" width="15.8" height="15.1"/></clipPath>
<text x="301.7" y="705.15" font-size="9.5" fill="#3c3c3c" letter-spacing="0.1" stroke="#3c3c3c" stroke-width="0.22" clip-path="url(#c1434)">Vox</text>
<rect x="331" y="693.6" width="17.3" height="16.5" fill="#3a3a3a" opacity="0.85"/>
<rect x="331.7" y="694.3" width="16.1" height="15.1" fill="#ffffff"/>
<clipPath id="c1438"><rect x="331.7" y="694.3" width="15.8" height="15.1"/></clipPath>
<text x="334" y="705.15" font-size="9.5" fill="#3c3c3c" letter-spacing="0.1" stroke="#3c3c3c" stroke-width="0.22" clip-path="url(#c1438)">Vox</text>
<rect x="365.2" y="693.6" width="17.3" height="16.5" fill="#3a3a3a" opacity="0.85"/>
<rect x="365.9" y="694.3" width="16.1" height="15.1" fill="#ffffff"/>
<clipPath id="c1442"><rect x="365.9" y="694.3" width="15.8" height="15.1"/></clipPath>
<text x="368.2" y="705.15" font-size="9.5" fill="#3c3c3c" letter-spacing="0.1" stroke="#3c3c3c" stroke-width="0.22" clip-path="url(#c1442)">Vox</text>
<rect x="397.3" y="693.6" width="17.3" height="16.5" fill="#3a3a3a" opacity="0.85"/>
<rect x="398" y="694.3" width="16.1" height="15.1" fill="#ffffff"/>
<clipPath id="c1446"><rect x="398" y="694.3" width="15.8" height="15.1"/></clipPath>
<text x="400.3" y="705.15" font-size="9.5" fill="#3c3c3c" letter-spacing="0.1" stroke="#3c3c3c" stroke-width="0.22" clip-path="url(#c1446)">Vox</text>
<rect x="430.6" y="693.6" width="17.3" height="16.5" fill="#3a3a3a" opacity="0.85"/>
<rect x="431.3" y="694.3" width="16.1" height="15.1" fill="#ffffff"/>
<clipPath id="c1450"><rect x="431.3" y="694.3" width="15.8" height="15.1"/></clipPath>
<text x="433.6" y="705.15" font-size="9.5" fill="#3c3c3c" letter-spacing="0.1" stroke="#3c3c3c" stroke-width="0.22" clip-path="url(#c1450)">Vox</text>
<rect x="463.3" y="693.6" width="17.3" height="16.5" fill="#3a3a3a" opacity="0.85"/>
<rect x="464" y="694.3" width="16.1" height="15.1" fill="#ffffff"/>
<clipPath id="c1454"><rect x="464" y="694.3" width="15.8" height="15.1"/></clipPath>
<text x="466.3" y="705.15" font-size="9.5" fill="#3c3c3c" letter-spacing="0.1" stroke="#3c3c3c" stroke-width="0.22" clip-path="url(#c1454)">Vox</text>
<rect x="497.6" y="693.6" width="17.3" height="16.5" fill="#3a3a3a" opacity="0.85"/>
<rect x="498.3" y="694.3" width="16.1" height="15.1" fill="#ffffff"/>
<clipPath id="c1458"><rect x="498.3" y="694.3" width="15.8" height="15.1"/></clipPath>
<text x="500.6" y="705.15" font-size="9.5" fill="#3c3c3c" letter-spacing="0.1" stroke="#3c3c3c" stroke-width="0.22" clip-path="url(#c1458)">Vox</text>
<rect x="697.6" y="693.6" width="17.3" height="16.5" fill="#3a3a3a" opacity="0.85"/>
<rect x="698.3" y="694.3" width="16.1" height="15.1" fill="#ffffff"/>
<clipPath id="c1462"><rect x="698.3" y="694.3" width="15.8" height="15.1"/></clipPath>
<text x="700.6" y="705.15" font-size="9.5" fill="#3c3c3c" letter-spacing="0.1" stroke="#3c3c3c" stroke-width="0.22" clip-path="url(#c1462)">Vox</text>
<line x1="32.55" y1="221.8" x2="32.55" y2="235.2" stroke="#000" stroke-width="1" opacity="0.1"/>
<line x1="32.55" y1="326.9" x2="32.55" y2="335.8" stroke="#000" stroke-width="1" opacity="0.1"/>
<line x1="32.55" y1="351.6" x2="32.55" y2="355" stroke="#000" stroke-width="1" opacity="0.1"/>
<line x1="32.55" y1="560.6" x2="32.55" y2="573.7" stroke="#000" stroke-width="1" opacity="0.1"/>
<line x1="49.17" y1="221.8" x2="49.17" y2="235.2" stroke="#000" stroke-width="1" opacity="0.1"/>
<line x1="49.17" y1="326.9" x2="49.17" y2="335.8" stroke="#000" stroke-width="1" opacity="0.1"/>
<line x1="49.17" y1="351.6" x2="49.17" y2="355" stroke="#000" stroke-width="1" opacity="0.1"/>
<line x1="49.17" y1="560.6" x2="49.17" y2="573.7" stroke="#000" stroke-width="1" opacity="0.1"/>
<line x1="65.78" y1="221.8" x2="65.78" y2="235.2" stroke="#000" stroke-width="1" opacity="0.1"/>
<line x1="65.78" y1="326.9" x2="65.78" y2="335.8" stroke="#000" stroke-width="1" opacity="0.1"/>
<line x1="65.78" y1="351.6" x2="65.78" y2="355" stroke="#000" stroke-width="1" opacity="0.1"/>
<line x1="65.78" y1="560.6" x2="65.78" y2="573.7" stroke="#000" stroke-width="1" opacity="0.1"/>
<line x1="82.4" y1="221.8" x2="82.4" y2="235.2" stroke="#000" stroke-width="1" opacity="0.1"/>
<line x1="82.4" y1="326.9" x2="82.4" y2="335.8" stroke="#000" stroke-width="1" opacity="0.1"/>
<line x1="82.4" y1="351.6" x2="82.4" y2="355" stroke="#000" stroke-width="1" opacity="0.1"/>
<line x1="82.4" y1="560.6" x2="82.4" y2="573.7" stroke="#000" stroke-width="1" opacity="0.1"/>
<line x1="99.01" y1="221.8" x2="99.01" y2="235.2" stroke="#000" stroke-width="1" opacity="0.1"/>
<line x1="99.01" y1="326.9" x2="99.01" y2="335.8" stroke="#000" stroke-width="1" opacity="0.1"/>
<line x1="99.01" y1="351.6" x2="99.01" y2="355" stroke="#000" stroke-width="1" opacity="0.1"/>
<line x1="99.01" y1="560.6" x2="99.01" y2="573.7" stroke="#000" stroke-width="1" opacity="0.1"/>
<line x1="115.63" y1="221.8" x2="115.63" y2="235.2" stroke="#000" stroke-width="1" opacity="0.1"/>
<line x1="115.63" y1="326.9" x2="115.63" y2="335.8" stroke="#000" stroke-width="1" opacity="0.1"/>
<line x1="115.63" y1="351.6" x2="115.63" y2="355" stroke="#000" stroke-width="1" opacity="0.1"/>
<line x1="115.63" y1="560.6" x2="115.63" y2="573.7" stroke="#000" stroke-width="1" opacity="0.1"/>
<line x1="132.24" y1="221.8" x2="132.24" y2="235.2" stroke="#000" stroke-width="1" opacity="0.1"/>
<line x1="132.24" y1="326.9" x2="132.24" y2="335.8" stroke="#000" stroke-width="1" opacity="0.1"/>
<line x1="132.24" y1="351.6" x2="132.24" y2="355" stroke="#000" stroke-width="1" opacity="0.1"/>
<line x1="132.24" y1="560.6" x2="132.24" y2="573.7" stroke="#000" stroke-width="1" opacity="0.1"/>
<line x1="148.86" y1="221.8" x2="148.86" y2="235.2" stroke="#000" stroke-width="1" opacity="0.1"/>
<line x1="148.86" y1="326.9" x2="148.86" y2="335.8" stroke="#000" stroke-width="1" opacity="0.1"/>
<line x1="148.86" y1="351.6" x2="148.86" y2="355" stroke="#000" stroke-width="1" opacity="0.1"/>
<line x1="148.86" y1="560.6" x2="148.86" y2="573.7" stroke="#000" stroke-width="1" opacity="0.1"/>
<line x1="165.47" y1="221.8" x2="165.47" y2="235.2" stroke="#000" stroke-width="1" opacity="0.1"/>
<line x1="165.47" y1="326.9" x2="165.47" y2="335.8" stroke="#000" stroke-width="1" opacity="0.1"/>
<line x1="165.47" y1="351.6" x2="165.47" y2="355" stroke="#000" stroke-width="1" opacity="0.1"/>
<line x1="165.47" y1="560.6" x2="165.47" y2="573.7" stroke="#000" stroke-width="1" opacity="0.1"/>
<line x1="182.09" y1="221.8" x2="182.09" y2="235.2" stroke="#000" stroke-width="1" opacity="0.1"/>
<line x1="182.09" y1="326.9" x2="182.09" y2="335.8" stroke="#000" stroke-width="1" opacity="0.1"/>
<line x1="182.09" y1="351.6" x2="182.09" y2="355" stroke="#000" stroke-width="1" opacity="0.1"/>
<line x1="182.09" y1="560.6" x2="182.09" y2="573.7" stroke="#000" stroke-width="1" opacity="0.1"/>
<line x1="198.7" y1="221.8" x2="198.7" y2="235.2" stroke="#000" stroke-width="1" opacity="0.1"/>
<line x1="198.7" y1="326.9" x2="198.7" y2="335.8" stroke="#000" stroke-width="1" opacity="0.1"/>
<line x1="198.7" y1="351.6" x2="198.7" y2="355" stroke="#000" stroke-width="1" opacity="0.1"/>
<line x1="198.7" y1="560.6" x2="198.7" y2="573.7" stroke="#000" stroke-width="1" opacity="0.1"/>
<line x1="215.32" y1="221.8" x2="215.32" y2="235.2" stroke="#000" stroke-width="1" opacity="0.1"/>
<line x1="215.32" y1="326.9" x2="215.32" y2="335.8" stroke="#000" stroke-width="1" opacity="0.1"/>
<line x1="215.32" y1="351.6" x2="215.32" y2="355" stroke="#000" stroke-width="1" opacity="0.1"/>
<line x1="215.32" y1="560.6" x2="215.32" y2="573.7" stroke="#000" stroke-width="1" opacity="0.1"/>
<line x1="231.93" y1="221.8" x2="231.93" y2="235.2" stroke="#000" stroke-width="1" opacity="0.1"/>
<line x1="231.93" y1="326.9" x2="231.93" y2="335.8" stroke="#000" stroke-width="1" opacity="0.1"/>
<line x1="231.93" y1="351.6" x2="231.93" y2="355" stroke="#000" stroke-width="1" opacity="0.1"/>
<line x1="231.93" y1="560.6" x2="231.93" y2="573.7" stroke="#000" stroke-width="1" opacity="0.1"/>
<line x1="248.55" y1="221.8" x2="248.55" y2="235.2" stroke="#000" stroke-width="1" opacity="0.1"/>
<line x1="248.55" y1="326.9" x2="248.55" y2="335.8" stroke="#000" stroke-width="1" opacity="0.1"/>
<line x1="248.55" y1="351.6" x2="248.55" y2="355" stroke="#000" stroke-width="1" opacity="0.1"/>
<line x1="248.55" y1="560.6" x2="248.55" y2="573.7" stroke="#000" stroke-width="1" opacity="0.1"/>
<line x1="265.16" y1="221.8" x2="265.16" y2="235.2" stroke="#000" stroke-width="1" opacity="0.1"/>
<line x1="265.16" y1="326.9" x2="265.16" y2="335.8" stroke="#000" stroke-width="1" opacity="0.1"/>
<line x1="265.16" y1="351.6" x2="265.16" y2="355" stroke="#000" stroke-width="1" opacity="0.1"/>
<line x1="265.16" y1="560.6" x2="265.16" y2="573.7" stroke="#000" stroke-width="1" opacity="0.1"/>
<line x1="281.78" y1="221.8" x2="281.78" y2="235.2" stroke="#000" stroke-width="1" opacity="0.1"/>
<line x1="281.78" y1="326.9" x2="281.78" y2="335.8" stroke="#000" stroke-width="1" opacity="0.1"/>
<line x1="281.78" y1="351.6" x2="281.78" y2="355" stroke="#000" stroke-width="1" opacity="0.1"/>
<line x1="281.78" y1="560.6" x2="281.78" y2="573.7" stroke="#000" stroke-width="1" opacity="0.1"/>
<line x1="298.39" y1="221.8" x2="298.39" y2="235.2" stroke="#000" stroke-width="1" opacity="0.1"/>
<line x1="298.39" y1="326.9" x2="298.39" y2="335.8" stroke="#000" stroke-width="1" opacity="0.1"/>
<line x1="298.39" y1="351.6" x2="298.39" y2="355" stroke="#000" stroke-width="1" opacity="0.1"/>
<line x1="298.39" y1="560.6" x2="298.39" y2="573.7" stroke="#000" stroke-width="1" opacity="0.1"/>
<line x1="315.01" y1="221.8" x2="315.01" y2="235.2" stroke="#000" stroke-width="1" opacity="0.1"/>
<line x1="315.01" y1="326.9" x2="315.01" y2="335.8" stroke="#000" stroke-width="1" opacity="0.1"/>
<line x1="315.01" y1="351.6" x2="315.01" y2="355" stroke="#000" stroke-width="1" opacity="0.1"/>
<line x1="315.01" y1="560.6" x2="315.01" y2="573.7" stroke="#000" stroke-width="1" opacity="0.1"/>
<line x1="331.62" y1="221.8" x2="331.62" y2="235.2" stroke="#000" stroke-width="1" opacity="0.1"/>
<line x1="331.62" y1="326.9" x2="331.62" y2="335.8" stroke="#000" stroke-width="1" opacity="0.1"/>
<line x1="331.62" y1="351.6" x2="331.62" y2="355" stroke="#000" stroke-width="1" opacity="0.1"/>
<line x1="331.62" y1="560.6" x2="331.62" y2="573.7" stroke="#000" stroke-width="1" opacity="0.1"/>
<line x1="348.24" y1="221.8" x2="348.24" y2="235.2" stroke="#000" stroke-width="1" opacity="0.1"/>
<line x1="348.24" y1="326.9" x2="348.24" y2="335.8" stroke="#000" stroke-width="1" opacity="0.1"/>
<line x1="348.24" y1="351.6" x2="348.24" y2="355" stroke="#000" stroke-width="1" opacity="0.1"/>
<line x1="348.24" y1="560.6" x2="348.24" y2="573.7" stroke="#000" stroke-width="1" opacity="0.1"/>
<line x1="364.85" y1="221.8" x2="364.85" y2="235.2" stroke="#000" stroke-width="1" opacity="0.1"/>
<line x1="364.85" y1="326.9" x2="364.85" y2="335.8" stroke="#000" stroke-width="1" opacity="0.1"/>
<line x1="364.85" y1="351.6" x2="364.85" y2="355" stroke="#000" stroke-width="1" opacity="0.1"/>
<line x1="364.85" y1="560.6" x2="364.85" y2="573.7" stroke="#000" stroke-width="1" opacity="0.1"/>
<line x1="381.47" y1="221.8" x2="381.47" y2="235.2" stroke="#000" stroke-width="1" opacity="0.1"/>
<line x1="381.47" y1="326.9" x2="381.47" y2="335.8" stroke="#000" stroke-width="1" opacity="0.1"/>
<line x1="381.47" y1="351.6" x2="381.47" y2="355" stroke="#000" stroke-width="1" opacity="0.1"/>
<line x1="381.47" y1="560.6" x2="381.47" y2="573.7" stroke="#000" stroke-width="1" opacity="0.1"/>
<line x1="398.08" y1="221.8" x2="398.08" y2="235.2" stroke="#000" stroke-width="1" opacity="0.1"/>
<line x1="398.08" y1="326.9" x2="398.08" y2="335.8" stroke="#000" stroke-width="1" opacity="0.1"/>
<line x1="398.08" y1="351.6" x2="398.08" y2="355" stroke="#000" stroke-width="1" opacity="0.1"/>
<line x1="398.08" y1="560.6" x2="398.08" y2="573.7" stroke="#000" stroke-width="1" opacity="0.1"/>
<line x1="414.7" y1="221.8" x2="414.7" y2="235.2" stroke="#000" stroke-width="1" opacity="0.1"/>
<line x1="414.7" y1="326.9" x2="414.7" y2="335.8" stroke="#000" stroke-width="1" opacity="0.1"/>
<line x1="414.7" y1="351.6" x2="414.7" y2="355" stroke="#000" stroke-width="1" opacity="0.1"/>
<line x1="414.7" y1="560.6" x2="414.7" y2="573.7" stroke="#000" stroke-width="1" opacity="0.1"/>
<line x1="431.31" y1="221.8" x2="431.31" y2="235.2" stroke="#000" stroke-width="1" opacity="0.1"/>
<line x1="431.31" y1="326.9" x2="431.31" y2="335.8" stroke="#000" stroke-width="1" opacity="0.1"/>
<line x1="431.31" y1="351.6" x2="431.31" y2="355" stroke="#000" stroke-width="1" opacity="0.1"/>
<line x1="431.31" y1="560.6" x2="431.31" y2="573.7" stroke="#000" stroke-width="1" opacity="0.1"/>
<line x1="447.93" y1="221.8" x2="447.93" y2="235.2" stroke="#000" stroke-width="1" opacity="0.1"/>
<line x1="447.93" y1="326.9" x2="447.93" y2="335.8" stroke="#000" stroke-width="1" opacity="0.1"/>
<line x1="447.93" y1="351.6" x2="447.93" y2="355" stroke="#000" stroke-width="1" opacity="0.1"/>
<line x1="447.93" y1="560.6" x2="447.93" y2="573.7" stroke="#000" stroke-width="1" opacity="0.1"/>
<line x1="464.55" y1="221.8" x2="464.55" y2="235.2" stroke="#000" stroke-width="1" opacity="0.1"/>
<line x1="464.55" y1="326.9" x2="464.55" y2="335.8" stroke="#000" stroke-width="1" opacity="0.1"/>
<line x1="464.55" y1="351.6" x2="464.55" y2="355" stroke="#000" stroke-width="1" opacity="0.1"/>
<line x1="464.55" y1="560.6" x2="464.55" y2="573.7" stroke="#000" stroke-width="1" opacity="0.1"/>
<line x1="481.16" y1="221.8" x2="481.16" y2="235.2" stroke="#000" stroke-width="1" opacity="0.1"/>
<line x1="481.16" y1="326.9" x2="481.16" y2="335.8" stroke="#000" stroke-width="1" opacity="0.1"/>
<line x1="481.16" y1="351.6" x2="481.16" y2="355" stroke="#000" stroke-width="1" opacity="0.1"/>
<line x1="481.16" y1="560.6" x2="481.16" y2="573.7" stroke="#000" stroke-width="1" opacity="0.1"/>
<line x1="497.78" y1="221.8" x2="497.78" y2="235.2" stroke="#000" stroke-width="1" opacity="0.1"/>
<line x1="497.78" y1="326.9" x2="497.78" y2="335.8" stroke="#000" stroke-width="1" opacity="0.1"/>
<line x1="497.78" y1="351.6" x2="497.78" y2="355" stroke="#000" stroke-width="1" opacity="0.1"/>
<line x1="497.78" y1="560.6" x2="497.78" y2="573.7" stroke="#000" stroke-width="1" opacity="0.1"/>
<line x1="514.39" y1="221.8" x2="514.39" y2="235.2" stroke="#000" stroke-width="1" opacity="0.1"/>
<line x1="514.39" y1="326.9" x2="514.39" y2="335.8" stroke="#000" stroke-width="1" opacity="0.1"/>
<line x1="514.39" y1="351.6" x2="514.39" y2="355" stroke="#000" stroke-width="1" opacity="0.1"/>
<line x1="514.39" y1="560.6" x2="514.39" y2="573.7" stroke="#000" stroke-width="1" opacity="0.1"/>
<line x1="531.01" y1="221.8" x2="531.01" y2="235.2" stroke="#000" stroke-width="1" opacity="0.1"/>
<line x1="531.01" y1="326.9" x2="531.01" y2="335.8" stroke="#000" stroke-width="1" opacity="0.1"/>
<line x1="531.01" y1="351.6" x2="531.01" y2="355" stroke="#000" stroke-width="1" opacity="0.1"/>
<line x1="531.01" y1="560.6" x2="531.01" y2="573.7" stroke="#000" stroke-width="1" opacity="0.1"/>
<line x1="547.62" y1="221.8" x2="547.62" y2="235.2" stroke="#000" stroke-width="1" opacity="0.1"/>
<line x1="547.62" y1="326.9" x2="547.62" y2="335.8" stroke="#000" stroke-width="1" opacity="0.1"/>
<line x1="547.62" y1="351.6" x2="547.62" y2="355" stroke="#000" stroke-width="1" opacity="0.1"/>
<line x1="547.62" y1="560.6" x2="547.62" y2="573.7" stroke="#000" stroke-width="1" opacity="0.1"/>
<line x1="564.24" y1="221.8" x2="564.24" y2="235.2" stroke="#000" stroke-width="1" opacity="0.1"/>
<line x1="564.24" y1="326.9" x2="564.24" y2="335.8" stroke="#000" stroke-width="1" opacity="0.1"/>
<line x1="564.24" y1="351.6" x2="564.24" y2="355" stroke="#000" stroke-width="1" opacity="0.1"/>
<line x1="564.24" y1="560.6" x2="564.24" y2="573.7" stroke="#000" stroke-width="1" opacity="0.1"/>
<line x1="580.85" y1="221.8" x2="580.85" y2="235.2" stroke="#000" stroke-width="1" opacity="0.1"/>
<line x1="580.85" y1="326.9" x2="580.85" y2="335.8" stroke="#000" stroke-width="1" opacity="0.1"/>
<line x1="580.85" y1="351.6" x2="580.85" y2="355" stroke="#000" stroke-width="1" opacity="0.1"/>
<line x1="580.85" y1="560.6" x2="580.85" y2="573.7" stroke="#000" stroke-width="1" opacity="0.1"/>
<line x1="597.47" y1="221.8" x2="597.47" y2="235.2" stroke="#000" stroke-width="1" opacity="0.1"/>
<line x1="597.47" y1="326.9" x2="597.47" y2="335.8" stroke="#000" stroke-width="1" opacity="0.1"/>
<line x1="597.47" y1="351.6" x2="597.47" y2="355" stroke="#000" stroke-width="1" opacity="0.1"/>
<line x1="597.47" y1="560.6" x2="597.47" y2="573.7" stroke="#000" stroke-width="1" opacity="0.1"/>
<line x1="614.08" y1="221.8" x2="614.08" y2="235.2" stroke="#000" stroke-width="1" opacity="0.1"/>
<line x1="614.08" y1="326.9" x2="614.08" y2="335.8" stroke="#000" stroke-width="1" opacity="0.1"/>
<line x1="614.08" y1="351.6" x2="614.08" y2="355" stroke="#000" stroke-width="1" opacity="0.1"/>
<line x1="614.08" y1="560.6" x2="614.08" y2="573.7" stroke="#000" stroke-width="1" opacity="0.1"/>
<line x1="630.7" y1="221.8" x2="630.7" y2="235.2" stroke="#000" stroke-width="1" opacity="0.1"/>
<line x1="630.7" y1="326.9" x2="630.7" y2="335.8" stroke="#000" stroke-width="1" opacity="0.1"/>
<line x1="630.7" y1="351.6" x2="630.7" y2="355" stroke="#000" stroke-width="1" opacity="0.1"/>
<line x1="630.7" y1="560.6" x2="630.7" y2="573.7" stroke="#000" stroke-width="1" opacity="0.1"/>
<line x1="647.31" y1="221.8" x2="647.31" y2="235.2" stroke="#000" stroke-width="1" opacity="0.1"/>
<line x1="647.31" y1="326.9" x2="647.31" y2="335.8" stroke="#000" stroke-width="1" opacity="0.1"/>
<line x1="647.31" y1="351.6" x2="647.31" y2="355" stroke="#000" stroke-width="1" opacity="0.1"/>
<line x1="647.31" y1="560.6" x2="647.31" y2="573.7" stroke="#000" stroke-width="1" opacity="0.1"/>
<line x1="663.93" y1="221.8" x2="663.93" y2="235.2" stroke="#000" stroke-width="1" opacity="0.1"/>
<line x1="663.93" y1="326.9" x2="663.93" y2="335.8" stroke="#000" stroke-width="1" opacity="0.1"/>
<line x1="663.93" y1="351.6" x2="663.93" y2="355" stroke="#000" stroke-width="1" opacity="0.1"/>
<line x1="663.93" y1="560.6" x2="663.93" y2="573.7" stroke="#000" stroke-width="1" opacity="0.1"/>
<line x1="680.54" y1="221.8" x2="680.54" y2="235.2" stroke="#000" stroke-width="1" opacity="0.1"/>
<line x1="680.54" y1="326.9" x2="680.54" y2="335.8" stroke="#000" stroke-width="1" opacity="0.1"/>
<line x1="680.54" y1="351.6" x2="680.54" y2="355" stroke="#000" stroke-width="1" opacity="0.1"/>
<line x1="680.54" y1="560.6" x2="680.54" y2="573.7" stroke="#000" stroke-width="1" opacity="0.1"/>
<line x1="697.16" y1="221.8" x2="697.16" y2="235.2" stroke="#000" stroke-width="1" opacity="0.1"/>
<line x1="697.16" y1="326.9" x2="697.16" y2="335.8" stroke="#000" stroke-width="1" opacity="0.1"/>
<line x1="697.16" y1="351.6" x2="697.16" y2="355" stroke="#000" stroke-width="1" opacity="0.1"/>
<line x1="697.16" y1="560.6" x2="697.16" y2="573.7" stroke="#000" stroke-width="1" opacity="0.1"/>
<line x1="713.77" y1="221.8" x2="713.77" y2="235.2" stroke="#000" stroke-width="1" opacity="0.1"/>
<line x1="713.77" y1="326.9" x2="713.77" y2="335.8" stroke="#000" stroke-width="1" opacity="0.1"/>
<line x1="713.77" y1="351.6" x2="713.77" y2="355" stroke="#000" stroke-width="1" opacity="0.1"/>
<line x1="713.77" y1="560.6" x2="713.77" y2="573.7" stroke="#000" stroke-width="1" opacity="0.1"/>
<line x1="730.39" y1="221.8" x2="730.39" y2="235.2" stroke="#000" stroke-width="1" opacity="0.1"/>
<line x1="730.39" y1="326.9" x2="730.39" y2="335.8" stroke="#000" stroke-width="1" opacity="0.1"/>
<line x1="730.39" y1="351.6" x2="730.39" y2="355" stroke="#000" stroke-width="1" opacity="0.1"/>
<line x1="730.39" y1="560.6" x2="730.39" y2="573.7" stroke="#000" stroke-width="1" opacity="0.1"/>
<line x1="747" y1="221.8" x2="747" y2="235.2" stroke="#000" stroke-width="1" opacity="0.1"/>
<line x1="747" y1="326.9" x2="747" y2="335.8" stroke="#000" stroke-width="1" opacity="0.1"/>
<line x1="747" y1="351.6" x2="747" y2="355" stroke="#000" stroke-width="1" opacity="0.1"/>
<line x1="747" y1="560.6" x2="747" y2="573.7" stroke="#000" stroke-width="1" opacity="0.1"/>
<line x1="763.62" y1="221.8" x2="763.62" y2="235.2" stroke="#000" stroke-width="1" opacity="0.1"/>
<line x1="763.62" y1="326.9" x2="763.62" y2="335.8" stroke="#000" stroke-width="1" opacity="0.1"/>
<line x1="763.62" y1="351.6" x2="763.62" y2="355" stroke="#000" stroke-width="1" opacity="0.1"/>
<line x1="763.62" y1="560.6" x2="763.62" y2="573.7" stroke="#000" stroke-width="1" opacity="0.1"/>
<line x1="780.23" y1="221.8" x2="780.23" y2="235.2" stroke="#000" stroke-width="1" opacity="0.1"/>
<line x1="780.23" y1="326.9" x2="780.23" y2="335.8" stroke="#000" stroke-width="1" opacity="0.1"/>
<line x1="780.23" y1="351.6" x2="780.23" y2="355" stroke="#000" stroke-width="1" opacity="0.1"/>
<line x1="780.23" y1="560.6" x2="780.23" y2="573.7" stroke="#000" stroke-width="1" opacity="0.1"/>
<line x1="796.85" y1="221.8" x2="796.85" y2="235.2" stroke="#000" stroke-width="1" opacity="0.1"/>
<line x1="796.85" y1="326.9" x2="796.85" y2="335.8" stroke="#000" stroke-width="1" opacity="0.1"/>
<line x1="796.85" y1="351.6" x2="796.85" y2="355" stroke="#000" stroke-width="1" opacity="0.1"/>
<line x1="796.85" y1="560.6" x2="796.85" y2="573.7" stroke="#000" stroke-width="1" opacity="0.1"/>
<line x1="813.46" y1="221.8" x2="813.46" y2="235.2" stroke="#000" stroke-width="1" opacity="0.1"/>
<line x1="813.46" y1="326.9" x2="813.46" y2="335.8" stroke="#000" stroke-width="1" opacity="0.1"/>
<line x1="813.46" y1="351.6" x2="813.46" y2="355" stroke="#000" stroke-width="1" opacity="0.1"/>
<line x1="813.46" y1="560.6" x2="813.46" y2="573.7" stroke="#000" stroke-width="1" opacity="0.1"/>
<line x1="830.08" y1="221.8" x2="830.08" y2="235.2" stroke="#000" stroke-width="1" opacity="0.1"/>
<line x1="830.08" y1="326.9" x2="830.08" y2="335.8" stroke="#000" stroke-width="1" opacity="0.1"/>
<line x1="830.08" y1="351.6" x2="830.08" y2="355" stroke="#000" stroke-width="1" opacity="0.1"/>
<line x1="830.08" y1="560.6" x2="830.08" y2="573.7" stroke="#000" stroke-width="1" opacity="0.1"/>
<line x1="846.69" y1="221.8" x2="846.69" y2="235.2" stroke="#000" stroke-width="1" opacity="0.1"/>
<line x1="846.69" y1="326.9" x2="846.69" y2="335.8" stroke="#000" stroke-width="1" opacity="0.1"/>
<line x1="846.69" y1="351.6" x2="846.69" y2="355" stroke="#000" stroke-width="1" opacity="0.1"/>
<line x1="846.69" y1="560.6" x2="846.69" y2="573.7" stroke="#000" stroke-width="1" opacity="0.1"/>
<line x1="863.31" y1="221.8" x2="863.31" y2="235.2" stroke="#000" stroke-width="1" opacity="0.1"/>
<line x1="863.31" y1="326.9" x2="863.31" y2="335.8" stroke="#000" stroke-width="1" opacity="0.1"/>
<line x1="863.31" y1="351.6" x2="863.31" y2="355" stroke="#000" stroke-width="1" opacity="0.1"/>
<line x1="863.31" y1="560.6" x2="863.31" y2="573.7" stroke="#000" stroke-width="1" opacity="0.1"/>
<line x1="879.93" y1="221.8" x2="879.93" y2="235.2" stroke="#000" stroke-width="1" opacity="0.1"/>
<line x1="879.93" y1="326.9" x2="879.93" y2="335.8" stroke="#000" stroke-width="1" opacity="0.1"/>
<line x1="879.93" y1="351.6" x2="879.93" y2="355" stroke="#000" stroke-width="1" opacity="0.1"/>
<line x1="879.93" y1="560.6" x2="879.93" y2="573.7" stroke="#000" stroke-width="1" opacity="0.1"/>
<line x1="896.54" y1="221.8" x2="896.54" y2="235.2" stroke="#000" stroke-width="1" opacity="0.1"/>
<line x1="896.54" y1="326.9" x2="896.54" y2="335.8" stroke="#000" stroke-width="1" opacity="0.1"/>
<line x1="896.54" y1="351.6" x2="896.54" y2="355" stroke="#000" stroke-width="1" opacity="0.1"/>
<line x1="896.54" y1="560.6" x2="896.54" y2="573.7" stroke="#000" stroke-width="1" opacity="0.1"/>
<line x1="913.16" y1="221.8" x2="913.16" y2="235.2" stroke="#000" stroke-width="1" opacity="0.1"/>
<line x1="913.16" y1="326.9" x2="913.16" y2="335.8" stroke="#000" stroke-width="1" opacity="0.1"/>
<line x1="913.16" y1="351.6" x2="913.16" y2="355" stroke="#000" stroke-width="1" opacity="0.1"/>
<line x1="913.16" y1="560.6" x2="913.16" y2="573.7" stroke="#000" stroke-width="1" opacity="0.1"/>
<line x1="929.77" y1="221.8" x2="929.77" y2="235.2" stroke="#000" stroke-width="1" opacity="0.1"/>
<line x1="929.77" y1="326.9" x2="929.77" y2="335.8" stroke="#000" stroke-width="1" opacity="0.1"/>
<line x1="929.77" y1="351.6" x2="929.77" y2="355" stroke="#000" stroke-width="1" opacity="0.1"/>
<line x1="929.77" y1="560.6" x2="929.77" y2="573.7" stroke="#000" stroke-width="1" opacity="0.1"/>
<line x1="946.39" y1="221.8" x2="946.39" y2="235.2" stroke="#000" stroke-width="1" opacity="0.1"/>
<line x1="946.39" y1="326.9" x2="946.39" y2="335.8" stroke="#000" stroke-width="1" opacity="0.1"/>
<line x1="946.39" y1="351.6" x2="946.39" y2="355" stroke="#000" stroke-width="1" opacity="0.1"/>
<line x1="946.39" y1="560.6" x2="946.39" y2="573.7" stroke="#000" stroke-width="1" opacity="0.1"/>
<line x1="963" y1="221.8" x2="963" y2="235.2" stroke="#000" stroke-width="1" opacity="0.1"/>
<line x1="963" y1="326.9" x2="963" y2="335.8" stroke="#000" stroke-width="1" opacity="0.1"/>
<line x1="963" y1="351.6" x2="963" y2="355" stroke="#000" stroke-width="1" opacity="0.1"/>
<line x1="963" y1="560.6" x2="963" y2="573.7" stroke="#000" stroke-width="1" opacity="0.1"/>
<line x1="979.62" y1="221.8" x2="979.62" y2="235.2" stroke="#000" stroke-width="1" opacity="0.1"/>
<line x1="979.62" y1="326.9" x2="979.62" y2="335.8" stroke="#000" stroke-width="1" opacity="0.1"/>
<line x1="979.62" y1="351.6" x2="979.62" y2="355" stroke="#000" stroke-width="1" opacity="0.1"/>
<line x1="979.62" y1="560.6" x2="979.62" y2="573.7" stroke="#000" stroke-width="1" opacity="0.1"/>
<line x1="996.23" y1="221.8" x2="996.23" y2="235.2" stroke="#000" stroke-width="1" opacity="0.1"/>
<line x1="996.23" y1="326.9" x2="996.23" y2="335.8" stroke="#000" stroke-width="1" opacity="0.1"/>
<line x1="996.23" y1="351.6" x2="996.23" y2="355" stroke="#000" stroke-width="1" opacity="0.1"/>
<line x1="996.23" y1="560.6" x2="996.23" y2="573.7" stroke="#000" stroke-width="1" opacity="0.1"/>
<line x1="1012.85" y1="221.8" x2="1012.85" y2="235.2" stroke="#000" stroke-width="1" opacity="0.1"/>
<line x1="1012.85" y1="326.9" x2="1012.85" y2="335.8" stroke="#000" stroke-width="1" opacity="0.1"/>
<line x1="1012.85" y1="351.6" x2="1012.85" y2="355" stroke="#000" stroke-width="1" opacity="0.1"/>
<line x1="1012.85" y1="560.6" x2="1012.85" y2="573.7" stroke="#000" stroke-width="1" opacity="0.1"/>
<line x1="1029.46" y1="221.8" x2="1029.46" y2="235.2" stroke="#000" stroke-width="1" opacity="0.1"/>
<line x1="1029.46" y1="326.9" x2="1029.46" y2="335.8" stroke="#000" stroke-width="1" opacity="0.1"/>
<line x1="1029.46" y1="351.6" x2="1029.46" y2="355" stroke="#000" stroke-width="1" opacity="0.1"/>
<line x1="1029.46" y1="560.6" x2="1029.46" y2="573.7" stroke="#000" stroke-width="1" opacity="0.1"/>
<line x1="32.8" y1="603.8" x2="1066" y2="603.8" stroke="#e4634c" stroke-width="1.3" stroke-dasharray="3.6 1.95"/>
<rect x="486.6" y="759.2" width="124.8" height="10.4" fill="#4e4e4e"/>
<line x1="32.4" y1="88" x2="32.4" y2="852.2" stroke="#0a0a0a" stroke-width="1.05"/>
<line x1="98.86" y1="88" x2="98.86" y2="852.2" stroke="#0a0a0a" stroke-width="1.05"/>
<line x1="298.24" y1="88" x2="298.24" y2="852.2" stroke="#0a0a0a" stroke-width="1.05"/>
<line x1="364.7" y1="88" x2="364.7" y2="852.2" stroke="#0a0a0a" stroke-width="1.05"/>
<line x1="497.63" y1="88" x2="497.63" y2="852.2" stroke="#0a0a0a" stroke-width="1.05"/>
<line x1="630.55" y1="88" x2="630.55" y2="852.2" stroke="#0a0a0a" stroke-width="1.05"/>
<line x1="697.01" y1="88" x2="697.01" y2="852.2" stroke="#0a0a0a" stroke-width="1.05"/>
<line x1="829.93" y1="88" x2="829.93" y2="852.2" stroke="#0a0a0a" stroke-width="1.05"/>
<line x1="962.85" y1="88" x2="962.85" y2="852.2" stroke="#0a0a0a" stroke-width="1.05"/>
<line x1="1029.31" y1="88" x2="1029.31" y2="852.2" stroke="#0a0a0a" stroke-width="1.05"/>
<path d="M32.75 89.4 L40.55 94 L32.75 98.6 Z" fill="#6a6a6a" stroke="#101010" stroke-width="1"/>
<text x="43.35" y="97.5" font-size="9.05" fill="#e8e8e8" letter-spacing="0.02" stroke="#e8e8e8" stroke-width="0.4">INTRO</text>
<path d="M99.21 89.4 L107.01 94 L99.21 98.6 Z" fill="#6a6a6a" stroke="#101010" stroke-width="1"/>
<path d="M298.59 89.4 L306.39 94 L298.59 98.6 Z" fill="#6a6a6a" stroke="#101010" stroke-width="1"/>
<text x="309.19" y="97.5" font-size="9.05" fill="#e8e8e8" letter-spacing="0.02" stroke="#e8e8e8" stroke-width="0.4">BREAKDO...</text>
<path d="M365.05 89.4 L372.85 94 L365.05 98.6 Z" fill="#6a6a6a" stroke="#101010" stroke-width="1"/>
<text x="375.65" y="97.5" font-size="9.05" fill="#e8e8e8" letter-spacing="0.02" stroke="#e8e8e8" stroke-width="0.4">DROP</text>
<path d="M497.98 89.4 L505.78 94 L497.98 98.6 Z" fill="#6a6a6a" stroke="#101010" stroke-width="1"/>
<text x="508.58" y="97.5" font-size="9.05" fill="#e8e8e8" letter-spacing="0.02" stroke="#e8e8e8" stroke-width="0.4">MIXOUT</text>
<path d="M630.9 89.4 L638.7 94 L630.9 98.6 Z" fill="#6a6a6a" stroke="#101010" stroke-width="1"/>
<text x="641.5" y="97.5" font-size="9.05" fill="#e8e8e8" letter-spacing="0.02" stroke="#e8e8e8" stroke-width="0.4">BREAK</text>
<path d="M697.36 89.4 L705.16 94 L697.36 98.6 Z" fill="#6a6a6a" stroke="#101010" stroke-width="1"/>
<text x="707.96" y="97.5" font-size="9.05" fill="#e8e8e8" letter-spacing="0.02" stroke="#e8e8e8" stroke-width="0.4">BREAKDOWN</text>
<path d="M830.28 89.4 L838.08 94 L830.28 98.6 Z" fill="#6a6a6a" stroke="#101010" stroke-width="1"/>
<text x="840.88" y="97.5" font-size="9.05" fill="#e8e8e8" letter-spacing="0.02" stroke="#e8e8e8" stroke-width="0.4">DRO</text>
<path d="M963.2 89.4 L971 94 L963.2 98.6 Z" fill="#6a6a6a" stroke="#101010" stroke-width="1"/>
<text x="973.8" y="97.5" font-size="9.05" fill="#e8e8e8" letter-spacing="0.02" stroke="#e8e8e8" stroke-width="0.4">MIXOUT</text>
<path d="M1029.66 89.4 L1037.46 94 L1029.66 98.6 Z" fill="#6a6a6a" stroke="#101010" stroke-width="1"/>
<text x="1040.26" y="97.5" font-size="9.05" fill="#e8e8e8" letter-spacing="0.02" stroke="#e8e8e8" stroke-width="0.4">END</text>
<line x1="32.1" y1="78" x2="32.1" y2="852.2" stroke="#111" stroke-width="1.2"/>
<rect x="1065.6" y="77.5" width="1.6" height="775" fill="#262626"/>
<text x="549" y="767.5" font-size="9" fill="#d6d6d6" font-weight="bold" text-anchor="middle" letter-spacing="0.1">Drop Files and Devices Here</text>
<text x="1062.4" y="849.2" font-size="15.8" fill="#2c2c2c" font-weight="bold" text-anchor="end" letter-spacing="0.5">2/1</text>
<path d="M32.75 852.6 V860" stroke="#999" stroke-width="0.9"/>
<text x="35.45" y="862.2" font-size="9" fill="#cfcfcf" letter-spacing="0.5" stroke="#cfcfcf" stroke-width="0.2">0:00</text>
<path d="M121.35 852.6 V860" stroke="#999" stroke-width="0.9"/>
<text x="124.05" y="862.2" font-size="9" fill="#cfcfcf" letter-spacing="0.5" stroke="#cfcfcf" stroke-width="0.2">0:20</text>
<path d="M209.95 852.6 V860" stroke="#999" stroke-width="0.9"/>
<text x="212.65" y="862.2" font-size="9" fill="#cfcfcf" letter-spacing="0.5" stroke="#cfcfcf" stroke-width="0.2">0:40</text>
<path d="M298.55 852.6 V860" stroke="#999" stroke-width="0.9"/>
<text x="301.25" y="862.2" font-size="9" fill="#cfcfcf" letter-spacing="0.5" stroke="#cfcfcf" stroke-width="0.2">1:00</text>
<path d="M387.15 852.6 V860" stroke="#999" stroke-width="0.9"/>
<text x="389.85" y="862.2" font-size="9" fill="#cfcfcf" letter-spacing="0.5" stroke="#cfcfcf" stroke-width="0.2">1:20</text>
<path d="M475.75 852.6 V860" stroke="#999" stroke-width="0.9"/>
<text x="478.45" y="862.2" font-size="9" fill="#cfcfcf" letter-spacing="0.5" stroke="#cfcfcf" stroke-width="0.2">1:40</text>
<path d="M564.35 852.6 V860" stroke="#999" stroke-width="0.9"/>
<text x="567.05" y="862.2" font-size="9" fill="#cfcfcf" letter-spacing="0.5" stroke="#cfcfcf" stroke-width="0.2">2:00</text>
<path d="M652.95 852.6 V860" stroke="#999" stroke-width="0.9"/>
<text x="655.65" y="862.2" font-size="9" fill="#cfcfcf" letter-spacing="0.5" stroke="#cfcfcf" stroke-width="0.2">2:20</text>
<path d="M741.55 852.6 V860" stroke="#999" stroke-width="0.9"/>
<text x="744.25" y="862.2" font-size="9" fill="#cfcfcf" letter-spacing="0.5" stroke="#cfcfcf" stroke-width="0.2">2:40</text>
<path d="M830.15 852.6 V860" stroke="#999" stroke-width="0.9"/>
<text x="832.85" y="862.2" font-size="9" fill="#cfcfcf" letter-spacing="0.5" stroke="#cfcfcf" stroke-width="0.2">3:00</text>
<path d="M918.75 852.6 V860" stroke="#999" stroke-width="0.9"/>
<text x="921.45" y="862.2" font-size="9" fill="#cfcfcf" letter-spacing="0.5" stroke="#cfcfcf" stroke-width="0.2">3:20</text>
<path d="M1007.35 852.6 V860" stroke="#999" stroke-width="0.9"/>
<text x="1010.05" y="862.2" font-size="9" fill="#cfcfcf" letter-spacing="0.5" stroke="#cfcfcf" stroke-width="0.2">3:40</text>
<rect x="54.3" y="852.6" width="0.9" height="1.6" fill="#888"/>
<rect x="76.45" y="852.6" width="0.9" height="1.6" fill="#888"/>
<rect x="98.6" y="852.6" width="0.9" height="1.6" fill="#888"/>
<rect x="142.9" y="852.6" width="0.9" height="1.6" fill="#888"/>
<rect x="165.05" y="852.6" width="0.9" height="1.6" fill="#888"/>
<rect x="187.2" y="852.6" width="0.9" height="1.6" fill="#888"/>
<rect x="231.5" y="852.6" width="0.9" height="1.6" fill="#888"/>
<rect x="253.65" y="852.6" width="0.9" height="1.6" fill="#888"/>
<rect x="275.8" y="852.6" width="0.9" height="1.6" fill="#888"/>
<rect x="320.1" y="852.6" width="0.9" height="1.6" fill="#888"/>
<rect x="342.25" y="852.6" width="0.9" height="1.6" fill="#888"/>
<rect x="364.4" y="852.6" width="0.9" height="1.6" fill="#888"/>
<rect x="408.7" y="852.6" width="0.9" height="1.6" fill="#888"/>
<rect x="430.85" y="852.6" width="0.9" height="1.6" fill="#888"/>
<rect x="453" y="852.6" width="0.9" height="1.6" fill="#888"/>
<rect x="497.3" y="852.6" width="0.9" height="1.6" fill="#888"/>
<rect x="519.45" y="852.6" width="0.9" height="1.6" fill="#888"/>
<rect x="541.6" y="852.6" width="0.9" height="1.6" fill="#888"/>
<rect x="585.9" y="852.6" width="0.9" height="1.6" fill="#888"/>
<rect x="608.05" y="852.6" width="0.9" height="1.6" fill="#888"/>
<rect x="630.2" y="852.6" width="0.9" height="1.6" fill="#888"/>
<rect x="674.5" y="852.6" width="0.9" height="1.6" fill="#888"/>
<rect x="696.65" y="852.6" width="0.9" height="1.6" fill="#888"/>
<rect x="718.8" y="852.6" width="0.9" height="1.6" fill="#888"/>
<rect x="763.1" y="852.6" width="0.9" height="1.6" fill="#888"/>
<rect x="785.25" y="852.6" width="0.9" height="1.6" fill="#888"/>
<rect x="807.4" y="852.6" width="0.9" height="1.6" fill="#888"/>
<rect x="851.7" y="852.6" width="0.9" height="1.6" fill="#888"/>
<rect x="873.85" y="852.6" width="0.9" height="1.6" fill="#888"/>
<rect x="896" y="852.6" width="0.9" height="1.6" fill="#888"/>
<rect x="940.3" y="852.6" width="0.9" height="1.6" fill="#888"/>
<rect x="962.45" y="852.6" width="0.9" height="1.6" fill="#888"/>
<rect x="984.6" y="852.6" width="0.9" height="1.6" fill="#888"/>
<rect x="1028.9" y="852.6" width="0.9" height="1.6" fill="#888"/>
<rect x="1051.05" y="852.6" width="0.9" height="1.6" fill="#888"/>
<rect x="1250" y="38.1" width="120" height="10.7" fill="#505050"/>
<rect x="33" y="37.4" width="1220.8" height="12.4" fill="#535353"/>
<rect x="111.08" y="40.3" width="235.44" height="2.1" fill="#d8704a" opacity="0.8"/>
<rect x="111.08" y="40.8" width="235.44" height="1.1" fill="#ffb888" opacity="1"/>
<rect x="111.08" y="43.1" width="235.44" height="0.7" fill="#c1c06c" opacity="0.6"/>
<rect x="425" y="40.3" width="146.17" height="2.1" fill="#d8704a" opacity="0.8"/>
<rect x="425" y="40.8" width="146.17" height="1.1" fill="#ffb888" opacity="1"/>
<rect x="425" y="43.1" width="146.17" height="0.7" fill="#c1c06c" opacity="0.6"/>
<rect x="581.96" y="40.3" width="156.96" height="2.1" fill="#d8704a" opacity="0.8"/>
<rect x="581.96" y="40.8" width="156.96" height="1.1" fill="#ffb888" opacity="1"/>
<rect x="581.96" y="43.1" width="156.96" height="0.7" fill="#c1c06c" opacity="0.6"/>
<rect x="895.88" y="40.3" width="67.69" height="2.1" fill="#d8704a" opacity="0.8"/>
<rect x="895.88" y="40.8" width="67.69" height="1.1" fill="#ffb888" opacity="1"/>
<rect x="895.88" y="43.1" width="67.69" height="0.7" fill="#c1c06c" opacity="0.6"/>
<rect x="974.36" y="40.3" width="235.44" height="2.1" fill="#d8704a" opacity="0.8"/>
<rect x="974.36" y="40.8" width="235.44" height="1.1" fill="#ffb888" opacity="1"/>
<rect x="974.36" y="43.1" width="235.44" height="0.7" fill="#c1c06c" opacity="0.6"/>
<rect x="111.08" y="39.6" width="235.44" height="0.6" fill="#e6655e" opacity="0.5"/>
<rect x="425" y="39.6" width="146.17" height="0.6" fill="#e6655e" opacity="0.5"/>
<rect x="581.96" y="39.6" width="147.15" height="0.6" fill="#e6655e" opacity="0.5"/>
<rect x="738.92" y="39.6" width="78.48" height="0.6" fill="#e6655e" opacity="0.5"/>
<rect x="974.36" y="39.6" width="235.44" height="0.6" fill="#e6655e" opacity="0.5"/>
<rect x="101.63" y="43.6" width="16.53" height="0.7" fill="#c1c06c" opacity="0.6"/>
<rect x="337.07" y="43.6" width="16.53" height="0.7" fill="#c1c06c" opacity="0.6"/>
<rect x="415.55" y="43.6" width="16.53" height="0.7" fill="#c1c06c" opacity="0.6"/>
<rect x="494.03" y="43.6" width="16.53" height="0.7" fill="#c1c06c" opacity="0.6"/>
<rect x="572.51" y="43.6" width="16.53" height="0.7" fill="#c1c06c" opacity="0.6"/>
<rect x="650.99" y="43.6" width="16.53" height="0.7" fill="#c1c06c" opacity="0.6"/>
<rect x="729.47" y="43.6" width="16.53" height="0.7" fill="#c1c06c" opacity="0.6"/>
<rect x="964.91" y="43.6" width="16.53" height="0.7" fill="#c1c06c" opacity="0.6"/>
<rect x="111.08" y="45.2" width="235.44" height="0.6" fill="#b03535" opacity="0.8"/>
<rect x="817.4" y="45.2" width="146.17" height="0.6" fill="#b03535" opacity="0.8"/>
<rect x="346.52" y="44.8" width="392.4" height="0.6" fill="#b03535" opacity="0.8"/>
<rect x="856.64" y="44.8" width="353.16" height="0.6" fill="#b03535" opacity="0.8"/>
<rect x="346.52" y="46.4" width="235.44" height="0.6" fill="#ff94a6" opacity="0.6"/>
<rect x="817.4" y="46.4" width="146.17" height="0.6" fill="#ff94a6" opacity="0.6"/>
<rect x="974.36" y="46.4" width="235.44" height="0.6" fill="#ff94a6" opacity="0.6"/>
<rect x="581.96" y="46.9" width="156.96" height="0.6" fill="#ff94a6" opacity="0.6"/>
<rect x="425" y="47.3" width="78.48" height="0.7" fill="#8568d8" opacity="0.8"/>
<rect x="974.36" y="47.3" width="78.48" height="0.7" fill="#8568d8" opacity="0.8"/>
<rect x="346.52" y="48" width="313.92" height="0.6" fill="#fff" opacity="0.55"/>
<rect x="974.36" y="48" width="235.44" height="0.6" fill="#fff" opacity="0.55"/>
<rect x="189.56" y="48.4" width="156.96" height="0.6" fill="#fff" opacity="0.6"/>
<rect x="738.92" y="48.4" width="78.48" height="0.6" fill="#fff" opacity="0.6"/>
<rect x="895.88" y="48.4" width="78.48" height="0.6" fill="#fff" opacity="0.6"/>
<rect x="32.6" y="48.7" width="313.92" height="0.6" fill="#fff" opacity="0.55"/>
<rect x="581.96" y="48.7" width="156.96" height="0.6" fill="#fff" opacity="0.55"/>
<rect x="52.14" y="48.2" width="19.25" height="1.2" fill="#fff" opacity="0.85"/>
<rect x="91.35" y="48.2" width="19.25" height="1.2" fill="#fff" opacity="0.85"/>
<rect x="139.88" y="48.2" width="19.25" height="1.2" fill="#fff" opacity="0.85"/>
<rect x="189" y="48.2" width="19.25" height="1.2" fill="#fff" opacity="0.85"/>
<rect x="228.21" y="48.2" width="19.25" height="1.2" fill="#fff" opacity="0.85"/>
<rect x="268.59" y="48.2" width="19.25" height="1.2" fill="#fff" opacity="0.85"/>
<rect x="307.8" y="48.2" width="19.25" height="1.2" fill="#fff" opacity="0.85"/>
<rect x="347.71" y="48.2" width="19.25" height="1.2" fill="#fff" opacity="0.85"/>
<rect x="385.85" y="48.2" width="19.25" height="1.2" fill="#fff" opacity="0.85"/>
<rect x="426.24" y="48.2" width="19.25" height="1.2" fill="#fff" opacity="0.85"/>
<rect x="464.14" y="48.2" width="19.25" height="1.2" fill="#fff" opacity="0.85"/>
<rect x="503.46" y="48.2" width="19.25" height="1.2" fill="#fff" opacity="0.85"/>
<rect x="542.08" y="48.2" width="19.25" height="1.2" fill="#fff" opacity="0.85"/>
<rect x="582.58" y="48.2" width="19.25" height="1.2" fill="#fff" opacity="0.85"/>
<rect x="818.75" y="48.2" width="19.25" height="1.2" fill="#fff" opacity="0.85"/>
<line x1="111.08" y1="38" x2="111.08" y2="49" stroke="#8a8a8a" stroke-width="0.8" opacity="0.8"/>
<line x1="346.52" y1="38" x2="346.52" y2="49" stroke="#8a8a8a" stroke-width="0.8" opacity="0.8"/>
<line x1="425" y1="38" x2="425" y2="49" stroke="#8a8a8a" stroke-width="0.8" opacity="0.8"/>
<line x1="581.96" y1="38" x2="581.96" y2="49" stroke="#8a8a8a" stroke-width="0.8" opacity="0.8"/>
<line x1="738.92" y1="38" x2="738.92" y2="49" stroke="#8a8a8a" stroke-width="0.8" opacity="0.8"/>
<line x1="817.4" y1="38" x2="817.4" y2="49" stroke="#8a8a8a" stroke-width="0.8" opacity="0.8"/>
<line x1="974.36" y1="38" x2="974.36" y2="49" stroke="#8a8a8a" stroke-width="0.8" opacity="0.8"/>
<line x1="1131.32" y1="38" x2="1131.32" y2="49" stroke="#8a8a8a" stroke-width="0.8" opacity="0.8"/>
<line x1="1209.8" y1="38" x2="1209.8" y2="49" stroke="#8a8a8a" stroke-width="0.8" opacity="0.8"/>
<rect x="33" y="37.2" width="1220.9" height="12.8" fill="none" stroke="#b4b4b4" stroke-width="1.5"/>
<line x1="1291" y1="38" x2="1291" y2="49" stroke="#c8c8c8" stroke-width="1.4"/>
<rect x="1373.9" y="37.7" width="16.5" height="10.3" fill="#3e3e3e"/>
<text x="1382.1" y="46.3" font-size="9.5" fill="#e6e6e6" font-weight="bold" text-anchor="middle">H</text>
<rect x="1393.9" y="37.7" width="17.3" height="10.3" fill="#3e3e3e"/>
<text x="1402.5" y="46.3" font-size="9.5" fill="#e6e6e6" font-weight="bold" text-anchor="middle">W</text>
<rect x="1067.3" y="105.2" width="345.7" height="747.4" fill="#393939"/>
<rect x="1067.3" y="105.2" width="100.7" height="605.3" fill="#242424"/>
<rect x="1070.2" y="76.8" width="26" height="9.8" fill="#333" rx="4.9"/>
<text x="1083.2" y="85" font-size="9.2" fill="#e6e6e6" font-weight="bold" text-anchor="middle" letter-spacing="0.2">Set</text>
<circle cx="1075.8" cy="95.6" r="4.9" fill="#333"/><path d="M1079 95.6 h-5.8 M1075.6 93.2 l-2.5 2.4 l2.5 2.4" stroke="#e6e6e6" stroke-width="1.2" fill="none"/>
<circle cx="1091" cy="95.6" r="4.9" fill="#2e2e2e"/><path d="M1087.8 95.6 h5.8 M1091.2 93.2 l2.5 2.4 l-2.5 2.4" stroke="#555" stroke-width="1.2" fill="none"/>
<rect x="1108" y="90.4" width="19.7" height="10" fill="#37bfe2"/>
<path d="M1115.3 97.3 L1120.4 93.5" stroke="#10222a" stroke-width="1.2"/><circle cx="1115" cy="97.5" r="1.2" fill="#10222a"/><circle cx="1120.7" cy="93.3" r="1.2" fill="#10222a"/>
<rect x="1133" y="90.4" width="19.5" height="10" fill="#333"/>
<rect x="1139.6" y="94.8" width="6.4" height="4" fill="#e6e6e6"/><path d="M1140.9 95 v-1.2 a1.9 1.9 0 0 1 3.8 0 v1.2" stroke="#e6e6e6" stroke-width="1.1" fill="none"/>
<rect x="1067.3" y="711.3" width="345.7" height="106.1" fill="#4e4e4e"/>
<rect x="1168.8" y="105.8" width="68.2" height="15.6" fill="#4e4e4e"/>
<rect x="1238.6" y="105.8" width="106.3" height="15.6" fill="#4e4e4e"/>
<rect x="1346.3" y="105.8" width="66.7" height="15.6" fill="#4e4e4e"/>
<rect x="1335.2" y="105.8" width="7.2" height="15.6" fill="#3c3c3c"/>
<rect x="1335.9" y="106.2" width="2.3" height="14.9" fill="#141414"/>
<rect x="1339.4" y="106.2" width="2.4" height="14.9" fill="#141414"/>
<rect x="1335.2" y="108.4" width="7.2" height="0.9" fill="#3c3c3c"/>
<rect x="1067.3" y="105.8" width="100.1" height="15.6" fill="#3b3b3b"/>
<g opacity="0.82">
<circle cx="1076.5" cy="113.6" r="5.8" fill="none" stroke="#cfcfcf" stroke-width="1.1"/>
<line x1="1073.9" y1="111.6" x2="1079.1" y2="111.6" stroke="#cfcfcf" stroke-width="0.9"/>
<line x1="1073.9" y1="113.6" x2="1079.1" y2="113.6" stroke="#cfcfcf" stroke-width="0.9"/>
<line x1="1073.9" y1="115.6" x2="1079.1" y2="115.6" stroke="#cfcfcf" stroke-width="0.9"/>
</g>
<text x="1088.1" y="117" font-size="8.7" fill="#e4e4e4" font-weight="bold" letter-spacing="-0.15">REFERENCE</text>
<rect x="1170.8" y="108.3" width="64.2" height="10.9" fill="#2d2d2d"/>
<rect x="1171.8" y="109.3" width="62.2" height="8.9" fill="#4b4b4b"/>
<rect x="1242" y="108.3" width="41.5" height="10.9" fill="#2b2b2b"/>
<rect x="1243" y="109.3" width="39.5" height="8.9" fill="#f59b22"/>
<text x="1262.75" y="116.6" font-size="9.6" fill="#161616" font-weight="bold" text-anchor="middle">1</text>
<rect x="1288" y="108.3" width="18.8" height="10.9" fill="#2b2b2b"/>
<rect x="1289" y="109.3" width="16.8" height="8.9" fill="#383838"/>
<text x="1297.4" y="116.6" font-size="9.6" fill="#dcdcdc" font-weight="bold" text-anchor="middle">S</text>
<rect x="1348.3" y="108.3" width="37.6" height="10.9" fill="#2b2b2b"/>
<rect x="1349.3" y="109.3" width="35.6" height="8.9" fill="#353535"/>
<path d="M1377.5 113.75 L1384.9 109.8 V117.7 Z" fill="#3e3e3e"/>
<text x="1367" y="116.6" font-size="9.8" fill="#e0e0e0" text-anchor="middle" letter-spacing="0.35" stroke="#e0e0e0" stroke-width="0.25">0.00</text>
<rect x="1388.6" y="108.3" width="21.9" height="10.9" fill="#2b2b2b"/>
<rect x="1389.6" y="109.3" width="19.9" height="8.9" fill="#f59b22"/>
<text x="1399.55" y="116.6" font-size="9.8" fill="#161616" text-anchor="middle" stroke="#161616" stroke-width="0.3">ms</text>
<rect x="1168.8" y="123" width="68.2" height="95.2" fill="#4e4e4e"/>
<rect x="1238.6" y="123" width="106.3" height="95.2" fill="#4e4e4e"/>
<rect x="1346.3" y="123" width="66.7" height="95.2" fill="#4e4e4e"/>
<rect x="1335.2" y="123" width="7.2" height="95.2" fill="#3c3c3c"/>
<rect x="1335.9" y="123.4" width="2.3" height="94.5" fill="#141414"/>
<rect x="1339.4" y="123.4" width="2.4" height="94.5" fill="#141414"/>
<rect x="1335.2" y="125.6" width="7.2" height="0.9" fill="#3c3c3c"/>
<rect x="1067.3" y="123" width="100.1" height="95.2" fill="#ffa374"/>
<g opacity="0.82">
<circle cx="1076.5" cy="130.8" r="5.8" fill="none" stroke="#3a2015" stroke-width="1.1"/>
<line x1="1073.7" y1="128.8" x2="1077.7" y2="128.8" stroke="#3a2015" stroke-width="0.9"/>
<line x1="1075.3" y1="130.8" x2="1079.3" y2="130.8" stroke="#3a2015" stroke-width="0.9"/>
<line x1="1075.3" y1="132.8" x2="1079.3" y2="132.8" stroke="#3a2015" stroke-width="0.9"/>
</g>
<text x="1088.1" y="134.2" font-size="8.7" fill="#3a2015" font-weight="bold" letter-spacing="0.12">DRUM GROUP</text>
<rect x="1170.8" y="125.3" width="64.2" height="11.3" fill="#242424"/>
<rect x="1171.8" y="126.3" width="62.2" height="9.3" fill="#2c2c2c"/>
<text x="1172.6" y="133.7" font-size="9.6" fill="#e6e6e6" letter-spacing="0.25">Master</text>
<path d="M1226.2 129.05 h5.6 l-2.8 3.9 z" fill="#e6e6e6"/>
<rect x="1170.8" y="141.2" width="64.2" height="10.9" fill="#2d2d2d"/>
<rect x="1171.8" y="142.2" width="62.2" height="8.9" fill="#4b4b4b"/>
<rect x="1242" y="125.5" width="41.5" height="10.9" fill="#2b2b2b"/>
<rect x="1243" y="126.5" width="39.5" height="8.9" fill="#f59b22"/>
<text x="1262.75" y="133.8" font-size="9.6" fill="#161616" font-weight="bold" text-anchor="middle">5</text>
<rect x="1288" y="125.5" width="18.8" height="10.9" fill="#2b2b2b"/>
<rect x="1289" y="126.5" width="16.8" height="8.9" fill="#383838"/>
<text x="1297.4" y="133.8" font-size="9.6" fill="#dcdcdc" font-weight="bold" text-anchor="middle">S</text>
<rect x="1242" y="141.2" width="41.5" height="10.9" fill="#2b2b2b"/>
<rect x="1243" y="142.2" width="39.5" height="8.9" fill="#333"/>
<rect x="1243" y="142.2" width="33.5" height="8.9" fill="#1f7f92"/>
<text x="1262.75" y="149.5" font-size="9.6" fill="#e6e6e6" font-weight="bold" text-anchor="middle">0</text>
<rect x="1288" y="141.2" width="41.8" height="10.9" fill="#2b2b2b"/>
<rect x="1289" y="142.2" width="39.8" height="8.9" fill="#383838"/>
<text x="1308.9" y="149.5" font-size="9.6" fill="#dcdcdc" font-weight="bold" text-anchor="middle">C</text>
<rect x="1242" y="156.7" width="26.8" height="11.1" fill="#2b2b2b"/>
<rect x="1243" y="157.7" width="24.8" height="9.1" fill="#333"/>
<text x="1255.4" y="165.2" font-size="9.8" fill="#dcdcdc" text-anchor="middle">-inf</text>
<rect x="1348.3" y="125.5" width="37.6" height="10.9" fill="#2b2b2b"/>
<rect x="1349.3" y="126.5" width="35.6" height="8.9" fill="#353535"/>
<path d="M1377.5 130.95 L1384.9 127 V134.9 Z" fill="#3e3e3e"/>
<text x="1367" y="133.8" font-size="9.8" fill="#e0e0e0" text-anchor="middle" letter-spacing="0.35" stroke="#e0e0e0" stroke-width="0.25">0.00</text>
<rect x="1388.6" y="125.5" width="21.9" height="10.9" fill="#2b2b2b"/>
<rect x="1389.6" y="126.5" width="19.9" height="8.9" fill="#f59b22"/>
<text x="1399.55" y="133.8" font-size="9.8" fill="#161616" text-anchor="middle" stroke="#161616" stroke-width="0.3">ms</text>
<rect x="1168.8" y="219.8" width="68.2" height="15.9" fill="#4e4e4e"/>
<rect x="1238.6" y="219.8" width="106.3" height="15.9" fill="#4e4e4e"/>
<rect x="1346.3" y="219.8" width="66.7" height="15.9" fill="#4e4e4e"/>
<rect x="1335.2" y="219.8" width="7.2" height="15.9" fill="#3c3c3c"/>
<rect x="1335.9" y="220.2" width="2.3" height="15.2" fill="#141414"/>
<rect x="1339.4" y="220.2" width="2.4" height="15.2" fill="#141414"/>
<rect x="1335.2" y="222.4" width="7.2" height="0.9" fill="#3c3c3c"/>
<rect x="1071.6" y="219.8" width="95.8" height="15.9" fill="#e6655e"/>
<g opacity="0.82">
<circle cx="1080.8" cy="227.6" r="5.8" fill="none" stroke="#4a1717" stroke-width="1.1"/>
<line x1="1078.2" y1="225.6" x2="1083.4" y2="225.6" stroke="#4a1717" stroke-width="0.9"/>
<line x1="1078.2" y1="227.6" x2="1083.4" y2="227.6" stroke="#4a1717" stroke-width="0.9"/>
<line x1="1078.2" y1="229.6" x2="1083.4" y2="229.6" stroke="#4a1717" stroke-width="0.9"/>
</g>
<text x="1092.6" y="231" font-size="8.7" fill="#4a1717" font-weight="bold" letter-spacing="0.12">KICK GROUP</text>
<rect x="1170.8" y="222.3" width="64.2" height="10.9" fill="#2d2d2d"/>
<rect x="1171.8" y="223.3" width="62.2" height="8.9" fill="#4b4b4b"/>
<rect x="1242" y="222.3" width="41.5" height="10.9" fill="#2b2b2b"/>
<rect x="1243" y="223.3" width="39.5" height="8.9" fill="#f59b22"/>
<text x="1262.75" y="230.6" font-size="9.6" fill="#161616" font-weight="bold" text-anchor="middle">6</text>
<rect x="1288" y="222.3" width="18.8" height="10.9" fill="#2b2b2b"/>
<rect x="1289" y="223.3" width="16.8" height="8.9" fill="#383838"/>
<text x="1297.4" y="230.6" font-size="9.6" fill="#dcdcdc" font-weight="bold" text-anchor="middle">S</text>
<rect x="1348.3" y="222.3" width="37.6" height="10.9" fill="#2b2b2b"/>
<rect x="1349.3" y="223.3" width="35.6" height="8.9" fill="#353535"/>
<path d="M1377.5 227.75 L1384.9 223.8 V231.7 Z" fill="#3e3e3e"/>
<text x="1367" y="230.6" font-size="9.8" fill="#e0e0e0" text-anchor="middle" letter-spacing="0.35" stroke="#e0e0e0" stroke-width="0.25">0.00</text>
<rect x="1388.6" y="222.3" width="21.9" height="10.9" fill="#2b2b2b"/>
<rect x="1389.6" y="223.3" width="19.9" height="8.9" fill="#f59b22"/>
<text x="1399.55" y="230.6" font-size="9.8" fill="#161616" text-anchor="middle" stroke="#161616" stroke-width="0.3">ms</text>
<rect x="1168.8" y="237.3" width="68.2" height="15.9" fill="#4e4e4e"/>
<rect x="1238.6" y="237.3" width="106.3" height="15.9" fill="#4e4e4e"/>
<rect x="1346.3" y="237.3" width="66.7" height="15.9" fill="#4e4e4e"/>
<rect x="1335.2" y="237.3" width="7.2" height="15.9" fill="#3c3c3c"/>
<rect x="1335.9" y="237.7" width="2.3" height="15.2" fill="#141414"/>
<rect x="1339.4" y="237.7" width="2.4" height="15.2" fill="#141414"/>
<rect x="1335.2" y="239.9" width="7.2" height="0.9" fill="#3c3c3c"/>
<rect x="1071.6" y="237.3" width="95.8" height="15.9" fill="#ffa374"/>
<g opacity="0.82">
<circle cx="1080.8" cy="245.1" r="5.8" fill="none" stroke="#3a2015" stroke-width="1.1"/>
<path d="M1079.1 242.2 L1083.8 245.1 L1079.1 248 Z" fill="#3a2015"/>
</g>
<text x="1092.6" y="248.5" font-size="9" fill="#3a2015" font-weight="bold" letter-spacing="0.08">9 Reverse Kick</text>
<rect x="1170.8" y="239.8" width="64.2" height="10.9" fill="#2d2d2d"/>
<rect x="1171.8" y="240.8" width="62.2" height="8.9" fill="#4b4b4b"/>
<rect x="1242" y="239.8" width="41.5" height="10.9" fill="#2b2b2b"/>
<rect x="1243" y="240.8" width="39.5" height="8.9" fill="#f59b22"/>
<text x="1262.75" y="248.1" font-size="9.6" fill="#161616" font-weight="bold" text-anchor="middle">9</text>
<rect x="1288" y="239.8" width="18.8" height="10.9" fill="#2b2b2b"/>
<rect x="1289" y="240.8" width="16.8" height="8.9" fill="#383838"/>
<text x="1297.4" y="248.1" font-size="9.6" fill="#dcdcdc" font-weight="bold" text-anchor="middle">S</text>
<rect x="1311" y="239.8" width="18.8" height="10.9" fill="#2b2b2b"/>
<rect x="1312" y="240.8" width="16.8" height="8.9" fill="#383838"/>
<circle cx="1320.4" cy="245.25" r="3.2" fill="#e8e8e8"/><path d="M1320.8 243.65 v2 h-1.9" stroke="#2a2a2a" stroke-width="1.1" fill="none"/>
<rect x="1348.3" y="239.8" width="37.6" height="10.9" fill="#2b2b2b"/>
<rect x="1349.3" y="240.8" width="35.6" height="8.9" fill="#353535"/>
<path d="M1377.5 245.25 L1384.9 241.3 V249.2 Z" fill="#3e3e3e"/>
<text x="1367" y="248.1" font-size="9.8" fill="#e0e0e0" text-anchor="middle" letter-spacing="0.35" stroke="#e0e0e0" stroke-width="0.25">0.00</text>
<rect x="1388.6" y="239.8" width="21.9" height="10.9" fill="#2b2b2b"/>
<rect x="1389.6" y="240.8" width="19.9" height="8.9" fill="#f59b22"/>
<text x="1399.55" y="248.1" font-size="9.8" fill="#161616" text-anchor="middle" stroke="#161616" stroke-width="0.3">ms</text>
<rect x="1168.8" y="254.8" width="68.2" height="15.9" fill="#4e4e4e"/>
<rect x="1238.6" y="254.8" width="106.3" height="15.9" fill="#4e4e4e"/>
<rect x="1346.3" y="254.8" width="66.7" height="15.9" fill="#4e4e4e"/>
<rect x="1335.2" y="254.8" width="7.2" height="15.9" fill="#3c3c3c"/>
<rect x="1335.9" y="255.2" width="2.3" height="15.2" fill="#141414"/>
<rect x="1339.4" y="255.2" width="2.4" height="15.2" fill="#141414"/>
<rect x="1335.2" y="257.4" width="7.2" height="0.9" fill="#3c3c3c"/>
<rect x="1071.6" y="254.8" width="95.8" height="15.9" fill="#ffa374"/>
<g opacity="0.82">
<circle cx="1080.8" cy="262.6" r="5.8" fill="none" stroke="#3a2015" stroke-width="1.1"/>
<path d="M1079.1 259.7 L1083.8 262.6 L1079.1 265.5 Z" fill="#3a2015"/>
</g>
<text x="1092.6" y="266" font-size="9" fill="#3a2015" font-weight="bold" letter-spacing="0.08">10 Clap</text>
<rect x="1170.8" y="257.3" width="64.2" height="10.9" fill="#2d2d2d"/>
<rect x="1171.8" y="258.3" width="62.2" height="8.9" fill="#4b4b4b"/>
<rect x="1242" y="257.3" width="41.5" height="10.9" fill="#2b2b2b"/>
<rect x="1243" y="258.3" width="39.5" height="8.9" fill="#f59b22"/>
<text x="1262.75" y="265.6" font-size="9.6" fill="#161616" font-weight="bold" text-anchor="middle">10</text>
<rect x="1288" y="257.3" width="18.8" height="10.9" fill="#2b2b2b"/>
<rect x="1289" y="258.3" width="16.8" height="8.9" fill="#383838"/>
<text x="1297.4" y="265.6" font-size="9.6" fill="#dcdcdc" font-weight="bold" text-anchor="middle">S</text>
<rect x="1311" y="257.3" width="18.8" height="10.9" fill="#2b2b2b"/>
<rect x="1312" y="258.3" width="16.8" height="8.9" fill="#383838"/>
<circle cx="1320.4" cy="262.75" r="3.2" fill="#e8e8e8"/><path d="M1320.8 261.15 v2 h-1.9" stroke="#2a2a2a" stroke-width="1.1" fill="none"/>
<rect x="1348.3" y="257.3" width="37.6" height="10.9" fill="#2b2b2b"/>
<rect x="1349.3" y="258.3" width="35.6" height="8.9" fill="#353535"/>
<path d="M1377.5 262.75 L1384.9 258.8 V266.7 Z" fill="#3e3e3e"/>
<text x="1367" y="265.6" font-size="9.8" fill="#e0e0e0" text-anchor="middle" letter-spacing="0.35" stroke="#e0e0e0" stroke-width="0.25">0.00</text>
<rect x="1388.6" y="257.3" width="21.9" height="10.9" fill="#2b2b2b"/>
<rect x="1389.6" y="258.3" width="19.9" height="8.9" fill="#f59b22"/>
<text x="1399.55" y="265.6" font-size="9.8" fill="#161616" text-anchor="middle" stroke="#161616" stroke-width="0.3">ms</text>
<rect x="1168.8" y="272.3" width="68.2" height="15.9" fill="#4e4e4e"/>
<rect x="1238.6" y="272.3" width="106.3" height="15.9" fill="#4e4e4e"/>
<rect x="1346.3" y="272.3" width="66.7" height="15.9" fill="#4e4e4e"/>
<rect x="1335.2" y="272.3" width="7.2" height="15.9" fill="#3c3c3c"/>
<rect x="1335.9" y="272.7" width="2.3" height="15.2" fill="#141414"/>
<rect x="1339.4" y="272.7" width="2.4" height="15.2" fill="#141414"/>
<rect x="1335.2" y="274.9" width="7.2" height="0.9" fill="#3c3c3c"/>
<rect x="1071.6" y="272.3" width="95.8" height="15.9" fill="#ffa374"/>
<g opacity="0.82">
<circle cx="1080.8" cy="280.1" r="5.8" fill="none" stroke="#3a2015" stroke-width="1.1"/>
<path d="M1079.1 277.2 L1083.8 280.1 L1079.1 283 Z" fill="#3a2015"/>
</g>
<text x="1092.6" y="283.5" font-size="9" fill="#3a2015" font-weight="bold" letter-spacing="0.08">11 Accent Clap</text>
<rect x="1170.8" y="274.8" width="64.2" height="10.9" fill="#2d2d2d"/>
<rect x="1171.8" y="275.8" width="62.2" height="8.9" fill="#4b4b4b"/>
<rect x="1242" y="274.8" width="41.5" height="10.9" fill="#2b2b2b"/>
<rect x="1243" y="275.8" width="39.5" height="8.9" fill="#f59b22"/>
<text x="1262.75" y="283.1" font-size="9.6" fill="#161616" font-weight="bold" text-anchor="middle">11</text>
<rect x="1288" y="274.8" width="18.8" height="10.9" fill="#2b2b2b"/>
<rect x="1289" y="275.8" width="16.8" height="8.9" fill="#383838"/>
<text x="1297.4" y="283.1" font-size="9.6" fill="#dcdcdc" font-weight="bold" text-anchor="middle">S</text>
<rect x="1311" y="274.8" width="18.8" height="10.9" fill="#2b2b2b"/>
<rect x="1312" y="275.8" width="16.8" height="8.9" fill="#383838"/>
<circle cx="1320.4" cy="280.25" r="3.2" fill="#e8e8e8"/><path d="M1320.8 278.65 v2 h-1.9" stroke="#2a2a2a" stroke-width="1.1" fill="none"/>
<rect x="1348.3" y="274.8" width="37.6" height="10.9" fill="#2b2b2b"/>
<rect x="1349.3" y="275.8" width="35.6" height="8.9" fill="#353535"/>
<path d="M1377.5 280.25 L1384.9 276.3 V284.2 Z" fill="#3e3e3e"/>
<text x="1367" y="283.1" font-size="9.8" fill="#e0e0e0" text-anchor="middle" letter-spacing="0.35" stroke="#e0e0e0" stroke-width="0.25">0.00</text>
<rect x="1388.6" y="274.8" width="21.9" height="10.9" fill="#2b2b2b"/>
<rect x="1389.6" y="275.8" width="19.9" height="8.9" fill="#f59b22"/>
<text x="1399.55" y="283.1" font-size="9.8" fill="#161616" text-anchor="middle" stroke="#161616" stroke-width="0.3">ms</text>
<rect x="1168.8" y="289.8" width="68.2" height="15.8" fill="#4e4e4e"/>
<rect x="1238.6" y="289.8" width="106.3" height="15.8" fill="#4e4e4e"/>
<rect x="1346.3" y="289.8" width="66.7" height="15.8" fill="#4e4e4e"/>
<rect x="1335.2" y="289.8" width="7.2" height="15.8" fill="#3c3c3c"/>
<rect x="1335.9" y="290.2" width="2.3" height="15.1" fill="#141414"/>
<rect x="1339.4" y="290.2" width="2.4" height="15.1" fill="#141414"/>
<rect x="1335.2" y="292.4" width="7.2" height="0.9" fill="#3c3c3c"/>
<rect x="1071.6" y="289.8" width="95.8" height="15.8" fill="#ffa374"/>
<g opacity="0.82">
<circle cx="1080.8" cy="297.6" r="5.8" fill="none" stroke="#3a2015" stroke-width="1.1"/>
<path d="M1079.1 294.7 L1083.8 297.6 L1079.1 300.5 Z" fill="#3a2015"/>
</g>
<text x="1092.6" y="301" font-size="9" fill="#3a2015" font-weight="bold" letter-spacing="0.08">12 Perc 1</text>
<rect x="1170.8" y="292.3" width="64.2" height="10.9" fill="#2d2d2d"/>
<rect x="1171.8" y="293.3" width="62.2" height="8.9" fill="#4b4b4b"/>
<rect x="1242" y="292.3" width="41.5" height="10.9" fill="#2b2b2b"/>
<rect x="1243" y="293.3" width="39.5" height="8.9" fill="#f59b22"/>
<text x="1262.75" y="300.6" font-size="9.6" fill="#161616" font-weight="bold" text-anchor="middle">12</text>
<rect x="1288" y="292.3" width="18.8" height="10.9" fill="#2b2b2b"/>
<rect x="1289" y="293.3" width="16.8" height="8.9" fill="#383838"/>
<text x="1297.4" y="300.6" font-size="9.6" fill="#dcdcdc" font-weight="bold" text-anchor="middle">S</text>
<rect x="1311" y="292.3" width="18.8" height="10.9" fill="#2b2b2b"/>
<rect x="1312" y="293.3" width="16.8" height="8.9" fill="#383838"/>
<circle cx="1320.4" cy="297.75" r="3.2" fill="#e8e8e8"/><path d="M1320.8 296.15 v2 h-1.9" stroke="#2a2a2a" stroke-width="1.1" fill="none"/>
<rect x="1348.3" y="292.3" width="37.6" height="10.9" fill="#2b2b2b"/>
<rect x="1349.3" y="293.3" width="35.6" height="8.9" fill="#353535"/>
<path d="M1377.5 297.75 L1384.9 293.8 V301.7 Z" fill="#3e3e3e"/>
<text x="1367" y="300.6" font-size="9.8" fill="#e0e0e0" text-anchor="middle" letter-spacing="0.35" stroke="#e0e0e0" stroke-width="0.25">0.00</text>
<rect x="1388.6" y="292.3" width="21.9" height="10.9" fill="#2b2b2b"/>
<rect x="1389.6" y="293.3" width="19.9" height="8.9" fill="#f59b22"/>
<text x="1399.55" y="300.6" font-size="9.8" fill="#161616" text-anchor="middle" stroke="#161616" stroke-width="0.3">ms</text>
<rect x="1168.8" y="307.2" width="68.2" height="16" fill="#4e4e4e"/>
<rect x="1238.6" y="307.2" width="106.3" height="16" fill="#4e4e4e"/>
<rect x="1346.3" y="307.2" width="66.7" height="16" fill="#4e4e4e"/>
<rect x="1335.2" y="307.2" width="7.2" height="16" fill="#3c3c3c"/>
<rect x="1335.9" y="307.6" width="2.3" height="15.3" fill="#141414"/>
<rect x="1339.4" y="307.6" width="2.4" height="15.3" fill="#141414"/>
<rect x="1335.2" y="309.8" width="7.2" height="0.9" fill="#3c3c3c"/>
<rect x="1071.6" y="307.2" width="95.8" height="16" fill="#ffa374"/>
<g opacity="0.82">
<circle cx="1080.8" cy="315" r="5.8" fill="none" stroke="#3a2015" stroke-width="1.1"/>
<path d="M1079.1 312.1 L1083.8 315 L1079.1 317.9 Z" fill="#3a2015"/>
</g>
<text x="1092.6" y="318.4" font-size="9" fill="#3a2015" font-weight="bold" letter-spacing="0.08">13 Bounce Snar</text>
<rect x="1170.8" y="309.7" width="64.2" height="10.9" fill="#2d2d2d"/>
<rect x="1171.8" y="310.7" width="62.2" height="8.9" fill="#4b4b4b"/>
<rect x="1242" y="309.7" width="41.5" height="10.9" fill="#2b2b2b"/>
<rect x="1243" y="310.7" width="39.5" height="8.9" fill="#f59b22"/>
<text x="1262.75" y="318" font-size="9.6" fill="#161616" font-weight="bold" text-anchor="middle">13</text>
<rect x="1288" y="309.7" width="18.8" height="10.9" fill="#2b2b2b"/>
<rect x="1289" y="310.7" width="16.8" height="8.9" fill="#383838"/>
<text x="1297.4" y="318" font-size="9.6" fill="#dcdcdc" font-weight="bold" text-anchor="middle">S</text>
<rect x="1311" y="309.7" width="18.8" height="10.9" fill="#2b2b2b"/>
<rect x="1312" y="310.7" width="16.8" height="8.9" fill="#383838"/>
<circle cx="1320.4" cy="315.15" r="3.2" fill="#e8e8e8"/><path d="M1320.8 313.55 v2 h-1.9" stroke="#2a2a2a" stroke-width="1.1" fill="none"/>
<rect x="1348.3" y="309.7" width="37.6" height="10.9" fill="#2b2b2b"/>
<rect x="1349.3" y="310.7" width="35.6" height="8.9" fill="#353535"/>
<path d="M1377.5 315.15 L1384.9 311.2 V319.1 Z" fill="#3e3e3e"/>
<text x="1367" y="318" font-size="9.8" fill="#e0e0e0" text-anchor="middle" letter-spacing="0.35" stroke="#e0e0e0" stroke-width="0.25">0.00</text>
<rect x="1388.6" y="309.7" width="21.9" height="10.9" fill="#2b2b2b"/>
<rect x="1389.6" y="310.7" width="19.9" height="8.9" fill="#f59b22"/>
<text x="1399.55" y="318" font-size="9.8" fill="#161616" text-anchor="middle" stroke="#161616" stroke-width="0.3">ms</text>
<rect x="1168.8" y="324.8" width="68.2" height="31.6" fill="#4e4e4e"/>
<rect x="1238.6" y="324.8" width="106.3" height="31.6" fill="#4e4e4e"/>
<rect x="1346.3" y="324.8" width="66.7" height="31.6" fill="#4e4e4e"/>
<rect x="1335.2" y="324.8" width="7.2" height="31.6" fill="#3c3c3c"/>
<rect x="1335.9" y="325.2" width="2.3" height="30.9" fill="#141414"/>
<rect x="1339.4" y="325.2" width="2.4" height="30.9" fill="#141414"/>
<rect x="1335.2" y="327.4" width="7.2" height="0.9" fill="#3c3c3c"/>
<rect x="1071.6" y="324.8" width="95.8" height="31.6" fill="#c1c06c"/>
<g opacity="0.82">
<circle cx="1080.8" cy="332.6" r="5.8" fill="none" stroke="#3a3a14" stroke-width="1.1"/>
<line x1="1078.2" y1="330.6" x2="1083.4" y2="330.6" stroke="#3a3a14" stroke-width="0.9"/>
<line x1="1078.2" y1="332.6" x2="1083.4" y2="332.6" stroke="#3a3a14" stroke-width="0.9"/>
<line x1="1078.2" y1="334.6" x2="1083.4" y2="334.6" stroke="#3a3a14" stroke-width="0.9"/>
</g>
<text x="1092.6" y="336" font-size="8.7" fill="#3a3a14" font-weight="bold" letter-spacing="0.12">CYMBAL GROUP</text>
<clipPath id="cc2164"><rect x="1171" y="327.3" width="57.5" height="14"/></clipPath>
<rect x="1170.8" y="327.1" width="64.2" height="11.3" fill="#242424"/>
<rect x="1171.8" y="328.1" width="62.2" height="9.3" fill="#2c2c2c"/>
<text x="1172.4" y="335.5" font-size="9.3" fill="#e6e6e6" letter-spacing="0.05" clip-path="url(#cc2164)">DRUM GROUP</text>
<path d="M1226.2 330.85 h5.6 l-2.8 3.9 z" fill="#e6e6e6"/>
<rect x="1170.8" y="343" width="64.2" height="10.9" fill="#2d2d2d"/>
<rect x="1171.8" y="344" width="62.2" height="8.9" fill="#4b4b4b"/>
<rect x="1242" y="327.3" width="41.5" height="10.9" fill="#2b2b2b"/>
<rect x="1243" y="328.3" width="39.5" height="8.9" fill="#f59b22"/>
<text x="1262.75" y="335.6" font-size="9.6" fill="#161616" font-weight="bold" text-anchor="middle">14</text>
<rect x="1288" y="327.3" width="18.8" height="10.9" fill="#2b2b2b"/>
<rect x="1289" y="328.3" width="16.8" height="8.9" fill="#383838"/>
<text x="1297.4" y="335.6" font-size="9.6" fill="#dcdcdc" font-weight="bold" text-anchor="middle">S</text>
<rect x="1242" y="343" width="41.5" height="10.9" fill="#2b2b2b"/>
<rect x="1243" y="344" width="39.5" height="8.9" fill="#333"/>
<rect x="1243" y="344" width="33.5" height="8.9" fill="#1f7f92"/>
<text x="1262.75" y="351.3" font-size="9.6" fill="#e6e6e6" font-weight="bold" text-anchor="middle">0</text>
<rect x="1288" y="343" width="41.8" height="10.9" fill="#2b2b2b"/>
<rect x="1289" y="344" width="39.8" height="8.9" fill="#383838"/>
<text x="1308.9" y="351.3" font-size="9.6" fill="#dcdcdc" font-weight="bold" text-anchor="middle">C</text>
<rect x="1348.3" y="327.3" width="37.6" height="10.9" fill="#2b2b2b"/>
<rect x="1349.3" y="328.3" width="35.6" height="8.9" fill="#353535"/>
<path d="M1377.5 332.75 L1384.9 328.8 V336.7 Z" fill="#3e3e3e"/>
<text x="1367" y="335.6" font-size="9.8" fill="#e0e0e0" text-anchor="middle" letter-spacing="0.35" stroke="#e0e0e0" stroke-width="0.25">0.00</text>
<rect x="1388.6" y="327.3" width="21.9" height="10.9" fill="#2b2b2b"/>
<rect x="1389.6" y="328.3" width="19.9" height="8.9" fill="#f59b22"/>
<text x="1399.55" y="335.6" font-size="9.8" fill="#161616" text-anchor="middle" stroke="#161616" stroke-width="0.3">ms</text>
<rect x="1168.8" y="358" width="68.2" height="63.6" fill="#4e4e4e"/>
<rect x="1238.6" y="358" width="106.3" height="63.6" fill="#4e4e4e"/>
<rect x="1346.3" y="358" width="66.7" height="63.6" fill="#4e4e4e"/>
<rect x="1335.2" y="358" width="7.2" height="63.6" fill="#3c3c3c"/>
<rect x="1335.9" y="358.4" width="2.3" height="62.9" fill="#141414"/>
<rect x="1339.4" y="358.4" width="2.4" height="62.9" fill="#141414"/>
<rect x="1335.2" y="360.6" width="7.2" height="0.9" fill="#3c3c3c"/>
<rect x="1067.3" y="358" width="100.1" height="63.6" fill="#b03535"/>
<g opacity="0.82">
<circle cx="1076.5" cy="365.8" r="5.8" fill="none" stroke="#f6dede" stroke-width="1.1"/>
<line x1="1073.7" y1="363.8" x2="1077.7" y2="363.8" stroke="#f6dede" stroke-width="0.9"/>
<line x1="1075.3" y1="365.8" x2="1079.3" y2="365.8" stroke="#f6dede" stroke-width="0.9"/>
<line x1="1075.3" y1="367.8" x2="1079.3" y2="367.8" stroke="#f6dede" stroke-width="0.9"/>
</g>
<text x="1088.1" y="369.2" font-size="8.7" fill="#f6dede" font-weight="bold" letter-spacing="0.12">BASS GROUP</text>
<rect x="1170.8" y="360.3" width="64.2" height="11.3" fill="#242424"/>
<rect x="1171.8" y="361.3" width="62.2" height="9.3" fill="#2c2c2c"/>
<text x="1172.6" y="368.7" font-size="9.6" fill="#e6e6e6" letter-spacing="0.25">Master</text>
<path d="M1226.2 364.05 h5.6 l-2.8 3.9 z" fill="#e6e6e6"/>
<rect x="1170.8" y="376.2" width="64.2" height="10.9" fill="#2d2d2d"/>
<rect x="1171.8" y="377.2" width="62.2" height="8.9" fill="#4b4b4b"/>
<rect x="1242" y="360.5" width="41.5" height="10.9" fill="#2b2b2b"/>
<rect x="1243" y="361.5" width="39.5" height="8.9" fill="#f59b22"/>
<text x="1262.75" y="368.8" font-size="9.6" fill="#161616" font-weight="bold" text-anchor="middle">21</text>
<rect x="1288" y="360.5" width="18.8" height="10.9" fill="#2b2b2b"/>
<rect x="1289" y="361.5" width="16.8" height="8.9" fill="#383838"/>
<text x="1297.4" y="368.8" font-size="9.6" fill="#dcdcdc" font-weight="bold" text-anchor="middle">S</text>
<rect x="1242" y="376.2" width="41.5" height="10.9" fill="#2b2b2b"/>
<rect x="1243" y="377.2" width="39.5" height="8.9" fill="#333"/>
<rect x="1243" y="377.2" width="33.5" height="8.9" fill="#1f7f92"/>
<text x="1262.75" y="384.5" font-size="9.6" fill="#e6e6e6" font-weight="bold" text-anchor="middle">0</text>
<rect x="1288" y="376.2" width="41.8" height="10.9" fill="#2b2b2b"/>
<rect x="1289" y="377.2" width="39.8" height="8.9" fill="#383838"/>
<text x="1308.9" y="384.5" font-size="9.6" fill="#dcdcdc" font-weight="bold" text-anchor="middle">C</text>
<rect x="1242" y="391.7" width="26.8" height="11.1" fill="#2b2b2b"/>
<rect x="1243" y="392.7" width="24.8" height="9.1" fill="#333"/>
<text x="1255.4" y="400.2" font-size="9.8" fill="#dcdcdc" text-anchor="middle">-inf</text>
<rect x="1348.3" y="360.5" width="37.6" height="10.9" fill="#2b2b2b"/>
<rect x="1349.3" y="361.5" width="35.6" height="8.9" fill="#353535"/>
<path d="M1377.5 365.95 L1384.9 362 V369.9 Z" fill="#3e3e3e"/>
<text x="1367" y="368.8" font-size="9.8" fill="#e0e0e0" text-anchor="middle" letter-spacing="0.35" stroke="#e0e0e0" stroke-width="0.25">0.00</text>
<rect x="1388.6" y="360.5" width="21.9" height="10.9" fill="#2b2b2b"/>
<rect x="1389.6" y="361.5" width="19.9" height="8.9" fill="#f59b22"/>
<text x="1399.55" y="368.8" font-size="9.8" fill="#161616" text-anchor="middle" stroke="#161616" stroke-width="0.3">ms</text>
<rect x="1168.8" y="423.2" width="68.2" height="16" fill="#4e4e4e"/>
<rect x="1238.6" y="423.2" width="106.3" height="16" fill="#4e4e4e"/>
<rect x="1346.3" y="423.2" width="66.7" height="16" fill="#4e4e4e"/>
<rect x="1335.2" y="423.2" width="7.2" height="16" fill="#3c3c3c"/>
<rect x="1335.9" y="423.6" width="2.3" height="15.3" fill="#141414"/>
<rect x="1339.4" y="423.6" width="2.4" height="15.3" fill="#141414"/>
<rect x="1335.2" y="425.8" width="7.2" height="0.9" fill="#3c3c3c"/>
<rect x="1071.6" y="423.2" width="95.8" height="16" fill="#b03535"/>
<g opacity="0.82">
<circle cx="1080.8" cy="431" r="5.8" fill="none" stroke="#f6dede" stroke-width="1.1"/>
<path d="M1079.1 428.1 L1083.8 431 L1079.1 433.9 Z" fill="#f6dede"/>
</g>
<text x="1092.6" y="434.4" font-size="9" fill="#f6dede" font-weight="bold" letter-spacing="0.08">22 Donk Bass</text>
<rect x="1170.8" y="425.7" width="64.2" height="10.9" fill="#2d2d2d"/>
<rect x="1171.8" y="426.7" width="62.2" height="8.9" fill="#4b4b4b"/>
<rect x="1242" y="425.7" width="41.5" height="10.9" fill="#2b2b2b"/>
<rect x="1243" y="426.7" width="39.5" height="8.9" fill="#f59b22"/>
<text x="1262.75" y="434" font-size="9.6" fill="#161616" font-weight="bold" text-anchor="middle">22</text>
<rect x="1288" y="425.7" width="18.8" height="10.9" fill="#2b2b2b"/>
<rect x="1289" y="426.7" width="16.8" height="8.9" fill="#383838"/>
<text x="1297.4" y="434" font-size="9.6" fill="#dcdcdc" font-weight="bold" text-anchor="middle">S</text>
<rect x="1311" y="425.7" width="18.8" height="10.9" fill="#2b2b2b"/>
<rect x="1312" y="426.7" width="16.8" height="8.9" fill="#383838"/>
<circle cx="1320.4" cy="431.15" r="3.2" fill="#e8e8e8"/><path d="M1320.8 429.55 v2 h-1.9" stroke="#2a2a2a" stroke-width="1.1" fill="none"/>
<rect x="1348.3" y="425.7" width="37.6" height="10.9" fill="#2b2b2b"/>
<rect x="1349.3" y="426.7" width="35.6" height="8.9" fill="#353535"/>
<path d="M1377.5 431.15 L1384.9 427.2 V435.1 Z" fill="#3e3e3e"/>
<text x="1367" y="434" font-size="9.8" fill="#e0e0e0" text-anchor="middle" letter-spacing="0.35" stroke="#e0e0e0" stroke-width="0.25">0.00</text>
<rect x="1388.6" y="425.7" width="21.9" height="10.9" fill="#2b2b2b"/>
<rect x="1389.6" y="426.7" width="19.9" height="8.9" fill="#f59b22"/>
<text x="1399.55" y="434" font-size="9.8" fill="#161616" text-anchor="middle" stroke="#161616" stroke-width="0.3">ms</text>
<rect x="1168.8" y="440.8" width="68.2" height="15.9" fill="#4e4e4e"/>
<rect x="1238.6" y="440.8" width="106.3" height="15.9" fill="#4e4e4e"/>
<rect x="1346.3" y="440.8" width="66.7" height="15.9" fill="#4e4e4e"/>
<rect x="1335.2" y="440.8" width="7.2" height="15.9" fill="#3c3c3c"/>
<rect x="1335.9" y="441.2" width="2.3" height="15.2" fill="#141414"/>
<rect x="1339.4" y="441.2" width="2.4" height="15.2" fill="#141414"/>
<rect x="1335.2" y="443.4" width="7.2" height="0.9" fill="#3c3c3c"/>
<rect x="1071.6" y="440.8" width="95.8" height="15.9" fill="#b03535"/>
<g opacity="0.82">
<circle cx="1080.8" cy="448.6" r="5.8" fill="none" stroke="#f6dede" stroke-width="1.1"/>
<path d="M1079.1 445.7 L1083.8 448.6 L1079.1 451.5 Z" fill="#f6dede"/>
</g>
<text x="1092.6" y="452" font-size="9" fill="#f6dede" font-weight="bold" letter-spacing="0.08">23 Organ Bass</text>
<rect x="1170.8" y="443.3" width="64.2" height="10.9" fill="#2d2d2d"/>
<rect x="1171.8" y="444.3" width="62.2" height="8.9" fill="#4b4b4b"/>
<rect x="1242" y="443.3" width="41.5" height="10.9" fill="#2b2b2b"/>
<rect x="1243" y="444.3" width="39.5" height="8.9" fill="#f59b22"/>
<text x="1262.75" y="451.6" font-size="9.6" fill="#161616" font-weight="bold" text-anchor="middle">23</text>
<rect x="1288" y="443.3" width="18.8" height="10.9" fill="#2b2b2b"/>
<rect x="1289" y="444.3" width="16.8" height="8.9" fill="#383838"/>
<text x="1297.4" y="451.6" font-size="9.6" fill="#dcdcdc" font-weight="bold" text-anchor="middle">S</text>
<rect x="1311" y="443.3" width="18.8" height="10.9" fill="#2b2b2b"/>
<rect x="1312" y="444.3" width="16.8" height="8.9" fill="#383838"/>
<circle cx="1320.4" cy="448.75" r="3.2" fill="#e8e8e8"/><path d="M1320.8 447.15 v2 h-1.9" stroke="#2a2a2a" stroke-width="1.1" fill="none"/>
<rect x="1348.3" y="443.3" width="37.6" height="10.9" fill="#2b2b2b"/>
<rect x="1349.3" y="444.3" width="35.6" height="8.9" fill="#353535"/>
<path d="M1377.5 448.75 L1384.9 444.8 V452.7 Z" fill="#3e3e3e"/>
<text x="1367" y="451.6" font-size="9.8" fill="#e0e0e0" text-anchor="middle" letter-spacing="0.35" stroke="#e0e0e0" stroke-width="0.25">0.00</text>
<rect x="1388.6" y="443.3" width="21.9" height="10.9" fill="#2b2b2b"/>
<rect x="1389.6" y="444.3" width="19.9" height="8.9" fill="#f59b22"/>
<text x="1399.55" y="451.6" font-size="9.8" fill="#161616" text-anchor="middle" stroke="#161616" stroke-width="0.3">ms</text>
<rect x="1168.8" y="458.3" width="68.2" height="63.7" fill="#4e4e4e"/>
<rect x="1238.6" y="458.3" width="106.3" height="63.7" fill="#4e4e4e"/>
<rect x="1346.3" y="458.3" width="66.7" height="63.7" fill="#4e4e4e"/>
<rect x="1335.2" y="458.3" width="7.2" height="63.7" fill="#3c3c3c"/>
<rect x="1335.9" y="458.7" width="2.3" height="63" fill="#141414"/>
<rect x="1339.4" y="458.7" width="2.4" height="63" fill="#141414"/>
<rect x="1335.2" y="460.9" width="7.2" height="0.9" fill="#3c3c3c"/>
<rect x="1067.3" y="458.3" width="100.1" height="63.7" fill="#ff94a6"/>
<g opacity="0.82">
<circle cx="1076.5" cy="466.1" r="5.8" fill="none" stroke="#4a2230" stroke-width="1.1"/>
<line x1="1073.7" y1="464.1" x2="1077.7" y2="464.1" stroke="#4a2230" stroke-width="0.9"/>
<line x1="1075.3" y1="466.1" x2="1079.3" y2="466.1" stroke="#4a2230" stroke-width="0.9"/>
<line x1="1075.3" y1="468.1" x2="1079.3" y2="468.1" stroke="#4a2230" stroke-width="0.9"/>
</g>
<text x="1088.1" y="469.5" font-size="8.7" fill="#4a2230" font-weight="bold" letter-spacing="0.12">SYNTH GROUP</text>
<rect x="1170.8" y="460.6" width="64.2" height="11.3" fill="#242424"/>
<rect x="1171.8" y="461.6" width="62.2" height="9.3" fill="#2c2c2c"/>
<text x="1172.6" y="469" font-size="9.6" fill="#e6e6e6" letter-spacing="0.25">Master</text>
<path d="M1226.2 464.35 h5.6 l-2.8 3.9 z" fill="#e6e6e6"/>
<rect x="1170.8" y="476.5" width="64.2" height="10.9" fill="#2d2d2d"/>
<rect x="1171.8" y="477.5" width="62.2" height="8.9" fill="#4b4b4b"/>
<rect x="1242" y="460.8" width="41.5" height="10.9" fill="#2b2b2b"/>
<rect x="1243" y="461.8" width="39.5" height="8.9" fill="#f59b22"/>
<text x="1262.75" y="469.1" font-size="9.6" fill="#161616" font-weight="bold" text-anchor="middle">24</text>
<rect x="1288" y="460.8" width="18.8" height="10.9" fill="#2b2b2b"/>
<rect x="1289" y="461.8" width="16.8" height="8.9" fill="#383838"/>
<text x="1297.4" y="469.1" font-size="9.6" fill="#dcdcdc" font-weight="bold" text-anchor="middle">S</text>
<rect x="1242" y="476.5" width="41.5" height="10.9" fill="#2b2b2b"/>
<rect x="1243" y="477.5" width="39.5" height="8.9" fill="#333"/>
<rect x="1243" y="477.5" width="33.5" height="8.9" fill="#1f7f92"/>
<text x="1262.75" y="484.8" font-size="9.6" fill="#e6e6e6" font-weight="bold" text-anchor="middle">0</text>
<rect x="1288" y="476.5" width="41.8" height="10.9" fill="#2b2b2b"/>
<rect x="1289" y="477.5" width="39.8" height="8.9" fill="#383838"/>
<text x="1308.9" y="484.8" font-size="9.6" fill="#dcdcdc" font-weight="bold" text-anchor="middle">C</text>
<rect x="1242" y="492" width="26.8" height="11.1" fill="#2b2b2b"/>
<rect x="1243" y="493" width="24.8" height="9.1" fill="#333"/>
<text x="1255.4" y="500.5" font-size="9.8" fill="#dcdcdc" text-anchor="middle">-inf</text>
<rect x="1348.3" y="460.8" width="37.6" height="10.9" fill="#2b2b2b"/>
<rect x="1349.3" y="461.8" width="35.6" height="8.9" fill="#353535"/>
<path d="M1377.5 466.25 L1384.9 462.3 V470.2 Z" fill="#3e3e3e"/>
<text x="1367" y="469.1" font-size="9.8" fill="#e0e0e0" text-anchor="middle" letter-spacing="0.35" stroke="#e0e0e0" stroke-width="0.25">0.00</text>
<rect x="1388.6" y="460.8" width="21.9" height="10.9" fill="#2b2b2b"/>
<rect x="1389.6" y="461.8" width="19.9" height="8.9" fill="#f59b22"/>
<text x="1399.55" y="469.1" font-size="9.8" fill="#161616" text-anchor="middle" stroke="#161616" stroke-width="0.3">ms</text>
<rect x="1168.8" y="523.6" width="68.2" height="15.8" fill="#4e4e4e"/>
<rect x="1238.6" y="523.6" width="106.3" height="15.8" fill="#4e4e4e"/>
<rect x="1346.3" y="523.6" width="66.7" height="15.8" fill="#4e4e4e"/>
<rect x="1335.2" y="523.6" width="7.2" height="15.8" fill="#3c3c3c"/>
<rect x="1335.9" y="524" width="2.3" height="15.1" fill="#141414"/>
<rect x="1339.4" y="524" width="2.4" height="15.1" fill="#141414"/>
<rect x="1335.2" y="526.2" width="7.2" height="0.9" fill="#3c3c3c"/>
<rect x="1071.6" y="523.6" width="95.8" height="15.8" fill="#ff94a6"/>
<g opacity="0.82">
<circle cx="1080.8" cy="531.4" r="5.8" fill="none" stroke="#4a2230" stroke-width="1.1"/>
<path d="M1079.1 528.5 L1083.8 531.4 L1079.1 534.3 Z" fill="#4a2230"/>
</g>
<text x="1092.6" y="534.8" font-size="9" fill="#4a2230" font-weight="bold" letter-spacing="0.08">25 Piano Stabs</text>
<rect x="1170.8" y="526.1" width="64.2" height="10.9" fill="#2d2d2d"/>
<rect x="1171.8" y="527.1" width="62.2" height="8.9" fill="#4b4b4b"/>
<rect x="1242" y="526.1" width="41.5" height="10.9" fill="#2b2b2b"/>
<rect x="1243" y="527.1" width="39.5" height="8.9" fill="#f59b22"/>
<text x="1262.75" y="534.4" font-size="9.6" fill="#161616" font-weight="bold" text-anchor="middle">25</text>
<rect x="1288" y="526.1" width="18.8" height="10.9" fill="#2b2b2b"/>
<rect x="1289" y="527.1" width="16.8" height="8.9" fill="#383838"/>
<text x="1297.4" y="534.4" font-size="9.6" fill="#dcdcdc" font-weight="bold" text-anchor="middle">S</text>
<rect x="1311" y="526.1" width="18.8" height="10.9" fill="#2b2b2b"/>
<rect x="1312" y="527.1" width="16.8" height="8.9" fill="#383838"/>
<circle cx="1320.4" cy="531.55" r="3.2" fill="#e8e8e8"/><path d="M1320.8 529.95 v2 h-1.9" stroke="#2a2a2a" stroke-width="1.1" fill="none"/>
<rect x="1348.3" y="526.1" width="37.6" height="10.9" fill="#2b2b2b"/>
<rect x="1349.3" y="527.1" width="35.6" height="8.9" fill="#353535"/>
<path d="M1377.5 531.55 L1384.9 527.6 V535.5 Z" fill="#3e3e3e"/>
<text x="1367" y="534.4" font-size="9.8" fill="#e0e0e0" text-anchor="middle" letter-spacing="0.35" stroke="#e0e0e0" stroke-width="0.25">0.00</text>
<rect x="1388.6" y="526.1" width="21.9" height="10.9" fill="#2b2b2b"/>
<rect x="1389.6" y="527.1" width="19.9" height="8.9" fill="#f59b22"/>
<text x="1399.55" y="534.4" font-size="9.8" fill="#161616" text-anchor="middle" stroke="#161616" stroke-width="0.3">ms</text>
<rect x="1168.8" y="541" width="68.2" height="16.1" fill="#4e4e4e"/>
<rect x="1238.6" y="541" width="106.3" height="16.1" fill="#4e4e4e"/>
<rect x="1346.3" y="541" width="66.7" height="16.1" fill="#4e4e4e"/>
<rect x="1335.2" y="541" width="7.2" height="16.1" fill="#3c3c3c"/>
<rect x="1335.9" y="541.4" width="2.3" height="15.4" fill="#141414"/>
<rect x="1339.4" y="541.4" width="2.4" height="15.4" fill="#141414"/>
<rect x="1335.2" y="543.6" width="7.2" height="0.9" fill="#3c3c3c"/>
<rect x="1071.6" y="541" width="95.8" height="16.1" fill="#ff94a6"/>
<g opacity="0.82">
<circle cx="1080.8" cy="548.8" r="5.8" fill="none" stroke="#4a2230" stroke-width="1.1"/>
<path d="M1079.1 545.9 L1083.8 548.8 L1079.1 551.7 Z" fill="#4a2230"/>
</g>
<text x="1092.6" y="552.2" font-size="9" fill="#4a2230" font-weight="bold" letter-spacing="0.08">26 Synth Atmos</text>
<rect x="1170.8" y="543.5" width="64.2" height="10.9" fill="#2d2d2d"/>
<rect x="1171.8" y="544.5" width="62.2" height="8.9" fill="#4b4b4b"/>
<rect x="1242" y="543.5" width="41.5" height="10.9" fill="#2b2b2b"/>
<rect x="1243" y="544.5" width="39.5" height="8.9" fill="#f59b22"/>
<text x="1262.75" y="551.8" font-size="9.6" fill="#161616" font-weight="bold" text-anchor="middle">26</text>
<rect x="1288" y="543.5" width="18.8" height="10.9" fill="#2b2b2b"/>
<rect x="1289" y="544.5" width="16.8" height="8.9" fill="#383838"/>
<text x="1297.4" y="551.8" font-size="9.6" fill="#dcdcdc" font-weight="bold" text-anchor="middle">S</text>
<rect x="1311" y="543.5" width="18.8" height="10.9" fill="#2b2b2b"/>
<rect x="1312" y="544.5" width="16.8" height="8.9" fill="#383838"/>
<circle cx="1320.4" cy="548.95" r="3.2" fill="#e8e8e8"/><path d="M1320.8 547.35 v2 h-1.9" stroke="#2a2a2a" stroke-width="1.1" fill="none"/>
<rect x="1348.3" y="543.5" width="37.6" height="10.9" fill="#2b2b2b"/>
<rect x="1349.3" y="544.5" width="35.6" height="8.9" fill="#353535"/>
<path d="M1377.5 548.95 L1384.9 545 V552.9 Z" fill="#3e3e3e"/>
<text x="1367" y="551.8" font-size="9.8" fill="#e0e0e0" text-anchor="middle" letter-spacing="0.35" stroke="#e0e0e0" stroke-width="0.25">0.00</text>
<rect x="1388.6" y="543.5" width="21.9" height="10.9" fill="#2b2b2b"/>
<rect x="1389.6" y="544.5" width="19.9" height="8.9" fill="#f59b22"/>
<text x="1399.55" y="551.8" font-size="9.8" fill="#161616" text-anchor="middle" stroke="#161616" stroke-width="0.3">ms</text>
<rect x="1168.8" y="558.7" width="68.2" height="15.7" fill="#4e4e4e"/>
<rect x="1238.6" y="558.7" width="106.3" height="15.7" fill="#4e4e4e"/>
<rect x="1346.3" y="558.7" width="66.7" height="15.7" fill="#4e4e4e"/>
<rect x="1335.2" y="558.7" width="7.2" height="15.7" fill="#3c3c3c"/>
<rect x="1335.9" y="559.1" width="2.3" height="15" fill="#141414"/>
<rect x="1339.4" y="559.1" width="2.4" height="15" fill="#141414"/>
<rect x="1335.2" y="561.3" width="7.2" height="0.9" fill="#3c3c3c"/>
<rect x="1067.3" y="558.7" width="100.1" height="15.7" fill="#8b6fe2"/>
<g opacity="0.82">
<circle cx="1076.5" cy="566.5" r="5.8" fill="none" stroke="#241a4a" stroke-width="1.1"/>
<line x1="1073.9" y1="564.5" x2="1079.1" y2="564.5" stroke="#241a4a" stroke-width="0.9"/>
<line x1="1073.9" y1="566.5" x2="1079.1" y2="566.5" stroke="#241a4a" stroke-width="0.9"/>
<line x1="1073.9" y1="568.5" x2="1079.1" y2="568.5" stroke="#241a4a" stroke-width="0.9"/>
</g>
<text x="1088.1" y="569.9" font-size="8.7" fill="#241a4a" font-weight="bold" letter-spacing="0.12">FX GROUP</text>
<rect x="1170.8" y="561.2" width="64.2" height="10.9" fill="#2d2d2d"/>
<rect x="1171.8" y="562.2" width="62.2" height="8.9" fill="#4b4b4b"/>
<rect x="1242" y="561.2" width="41.5" height="10.9" fill="#2b2b2b"/>
<rect x="1243" y="562.2" width="39.5" height="8.9" fill="#f59b22"/>
<text x="1262.75" y="569.5" font-size="9.6" fill="#161616" font-weight="bold" text-anchor="middle">27</text>
<rect x="1288" y="561.2" width="18.8" height="10.9" fill="#2b2b2b"/>
<rect x="1289" y="562.2" width="16.8" height="8.9" fill="#383838"/>
<text x="1297.4" y="569.5" font-size="9.6" fill="#dcdcdc" font-weight="bold" text-anchor="middle">S</text>
<rect x="1348.3" y="561.2" width="37.6" height="10.9" fill="#2b2b2b"/>
<rect x="1349.3" y="562.2" width="35.6" height="8.9" fill="#353535"/>
<path d="M1377.5 566.65 L1384.9 562.7 V570.6 Z" fill="#3e3e3e"/>
<text x="1367" y="569.5" font-size="9.8" fill="#e0e0e0" text-anchor="middle" letter-spacing="0.35" stroke="#e0e0e0" stroke-width="0.25">0.00</text>
<rect x="1388.6" y="561.2" width="21.9" height="10.9" fill="#2b2b2b"/>
<rect x="1389.6" y="562.2" width="19.9" height="8.9" fill="#f59b22"/>
<text x="1399.55" y="569.5" font-size="9.8" fill="#161616" text-anchor="middle" stroke="#161616" stroke-width="0.3">ms</text>
<rect x="1168.8" y="576" width="68.2" height="63.4" fill="#4e4e4e"/>
<rect x="1238.6" y="576" width="106.3" height="63.4" fill="#4e4e4e"/>
<rect x="1346.3" y="576" width="66.7" height="63.4" fill="#4e4e4e"/>
<rect x="1335.2" y="576" width="7.2" height="63.4" fill="#3c3c3c"/>
<rect x="1335.9" y="576.4" width="2.3" height="62.7" fill="#141414"/>
<rect x="1339.4" y="576.4" width="2.4" height="62.7" fill="#141414"/>
<rect x="1335.2" y="578.6" width="7.2" height="0.9" fill="#3c3c3c"/>
<rect x="1067.3" y="576" width="100.1" height="63.4" fill="#ffffff"/>
<g opacity="0.82">
<circle cx="1076.5" cy="583.8" r="5.8" fill="none" stroke="#303030" stroke-width="1.1"/>
<line x1="1073.7" y1="581.8" x2="1077.7" y2="581.8" stroke="#303030" stroke-width="0.9"/>
<line x1="1075.3" y1="583.8" x2="1079.3" y2="583.8" stroke="#303030" stroke-width="0.9"/>
<line x1="1075.3" y1="585.8" x2="1079.3" y2="585.8" stroke="#303030" stroke-width="0.9"/>
</g>
<text x="1088.1" y="587.2" font-size="8.7" fill="#303030" font-weight="bold" letter-spacing="0.12">VOCAL GROUP</text>
<rect x="1170.8" y="578.3" width="64.2" height="11.3" fill="#242424"/>
<rect x="1171.8" y="579.3" width="62.2" height="9.3" fill="#2c2c2c"/>
<text x="1172.6" y="586.7" font-size="9.6" fill="#e6e6e6" letter-spacing="0.25">Master</text>
<path d="M1226.2 582.05 h5.6 l-2.8 3.9 z" fill="#e6e6e6"/>
<rect x="1170.8" y="594.2" width="64.2" height="10.9" fill="#2d2d2d"/>
<rect x="1171.8" y="595.2" width="62.2" height="8.9" fill="#4b4b4b"/>
<rect x="1242" y="578.5" width="41.5" height="10.9" fill="#2b2b2b"/>
<rect x="1243" y="579.5" width="39.5" height="8.9" fill="#f59b22"/>
<text x="1262.75" y="586.8" font-size="9.6" fill="#161616" font-weight="bold" text-anchor="middle">29</text>
<rect x="1288" y="578.5" width="18.8" height="10.9" fill="#2b2b2b"/>
<rect x="1289" y="579.5" width="16.8" height="8.9" fill="#383838"/>
<text x="1297.4" y="586.8" font-size="9.6" fill="#dcdcdc" font-weight="bold" text-anchor="middle">S</text>
<rect x="1242" y="594.2" width="41.5" height="10.9" fill="#2b2b2b"/>
<rect x="1243" y="595.2" width="39.5" height="8.9" fill="#333"/>
<rect x="1243" y="595.2" width="33.5" height="8.9" fill="#1f7f92"/>
<text x="1262.75" y="602.5" font-size="9.6" fill="#e6e6e6" font-weight="bold" text-anchor="middle">0</text>
<rect x="1288" y="594.2" width="41.8" height="10.9" fill="#2b2b2b"/>
<rect x="1289" y="595.2" width="39.8" height="8.9" fill="#383838"/>
<text x="1308.9" y="602.5" font-size="9.6" fill="#dcdcdc" font-weight="bold" text-anchor="middle">C</text>
<rect x="1242" y="609.7" width="26.8" height="11.1" fill="#2b2b2b"/>
<rect x="1243" y="610.7" width="24.8" height="9.1" fill="#333"/>
<text x="1255.4" y="618.2" font-size="9.8" fill="#dcdcdc" text-anchor="middle">-inf</text>
<rect x="1348.3" y="578.5" width="37.6" height="10.9" fill="#2b2b2b"/>
<rect x="1349.3" y="579.5" width="35.6" height="8.9" fill="#353535"/>
<path d="M1377.5 583.95 L1384.9 580 V587.9 Z" fill="#3e3e3e"/>
<text x="1367" y="586.8" font-size="9.8" fill="#e0e0e0" text-anchor="middle" letter-spacing="0.35" stroke="#e0e0e0" stroke-width="0.25">0.00</text>
<rect x="1388.6" y="578.5" width="21.9" height="10.9" fill="#2b2b2b"/>
<rect x="1389.6" y="579.5" width="19.9" height="8.9" fill="#f59b22"/>
<text x="1399.55" y="586.8" font-size="9.8" fill="#161616" text-anchor="middle" stroke="#161616" stroke-width="0.3">ms</text>
<rect x="1168.8" y="641" width="68.2" height="16.3" fill="#4e4e4e"/>
<rect x="1238.6" y="641" width="106.3" height="16.3" fill="#4e4e4e"/>
<rect x="1346.3" y="641" width="66.7" height="16.3" fill="#4e4e4e"/>
<rect x="1335.2" y="641" width="7.2" height="16.3" fill="#3c3c3c"/>
<rect x="1335.9" y="641.4" width="2.3" height="15.6" fill="#141414"/>
<rect x="1339.4" y="641.4" width="2.4" height="15.6" fill="#141414"/>
<rect x="1335.2" y="643.6" width="7.2" height="0.9" fill="#3c3c3c"/>
<rect x="1071.6" y="641" width="95.8" height="16.3" fill="#ffffff"/>
<g opacity="0.82">
<circle cx="1080.8" cy="648.8" r="5.8" fill="none" stroke="#303030" stroke-width="1.1"/>
<path d="M1079.1 645.9 L1083.8 648.8 L1079.1 651.7 Z" fill="#303030"/>
</g>
<text x="1092.6" y="652.2" font-size="9" fill="#303030" font-weight="bold" letter-spacing="0.08">30 Main Vox</text>
<rect x="1170.8" y="643.5" width="64.2" height="10.9" fill="#2d2d2d"/>
<rect x="1171.8" y="644.5" width="62.2" height="8.9" fill="#4b4b4b"/>
<rect x="1242" y="643.5" width="41.5" height="10.9" fill="#2b2b2b"/>
<rect x="1243" y="644.5" width="39.5" height="8.9" fill="#f59b22"/>
<text x="1262.75" y="651.8" font-size="9.6" fill="#161616" font-weight="bold" text-anchor="middle">30</text>
<rect x="1288" y="643.5" width="18.8" height="10.9" fill="#2b2b2b"/>
<rect x="1289" y="644.5" width="16.8" height="8.9" fill="#383838"/>
<text x="1297.4" y="651.8" font-size="9.6" fill="#dcdcdc" font-weight="bold" text-anchor="middle">S</text>
<rect x="1311" y="643.5" width="18.8" height="10.9" fill="#2b2b2b"/>
<rect x="1312" y="644.5" width="16.8" height="8.9" fill="#383838"/>
<circle cx="1320.4" cy="648.95" r="3.2" fill="#e8e8e8"/><path d="M1320.8 647.35 v2 h-1.9" stroke="#2a2a2a" stroke-width="1.1" fill="none"/>
<rect x="1348.3" y="643.5" width="37.6" height="10.9" fill="#2b2b2b"/>
<rect x="1349.3" y="644.5" width="35.6" height="8.9" fill="#353535"/>
<path d="M1377.5 648.95 L1384.9 645 V652.9 Z" fill="#3e3e3e"/>
<text x="1367" y="651.8" font-size="9.8" fill="#e0e0e0" text-anchor="middle" letter-spacing="0.35" stroke="#e0e0e0" stroke-width="0.25">0.00</text>
<rect x="1388.6" y="643.5" width="21.9" height="10.9" fill="#2b2b2b"/>
<rect x="1389.6" y="644.5" width="19.9" height="8.9" fill="#f59b22"/>
<text x="1399.55" y="651.8" font-size="9.8" fill="#161616" text-anchor="middle" stroke="#161616" stroke-width="0.3">ms</text>
<rect x="1168.8" y="658.9" width="68.2" height="15.9" fill="#4e4e4e"/>
<rect x="1238.6" y="658.9" width="106.3" height="15.9" fill="#4e4e4e"/>
<rect x="1346.3" y="658.9" width="66.7" height="15.9" fill="#4e4e4e"/>
<rect x="1335.2" y="658.9" width="7.2" height="15.9" fill="#3c3c3c"/>
<rect x="1335.9" y="659.3" width="2.3" height="15.2" fill="#141414"/>
<rect x="1339.4" y="659.3" width="2.4" height="15.2" fill="#141414"/>
<rect x="1335.2" y="661.5" width="7.2" height="0.9" fill="#3c3c3c"/>
<rect x="1071.6" y="658.9" width="95.8" height="15.9" fill="#ffffff"/>
<g opacity="0.82">
<circle cx="1080.8" cy="666.7" r="5.8" fill="none" stroke="#303030" stroke-width="1.1"/>
<path d="M1079.1 663.8 L1083.8 666.7 L1079.1 669.6 Z" fill="#303030"/>
</g>
<text x="1092.6" y="670.1" font-size="9" fill="#303030" font-weight="bold" letter-spacing="0.08">31 Vox Loop</text>
<rect x="1170.8" y="661.4" width="64.2" height="10.9" fill="#2d2d2d"/>
<rect x="1171.8" y="662.4" width="62.2" height="8.9" fill="#4b4b4b"/>
<rect x="1242" y="661.4" width="41.5" height="10.9" fill="#2b2b2b"/>
<rect x="1243" y="662.4" width="39.5" height="8.9" fill="#f59b22"/>
<text x="1262.75" y="669.7" font-size="9.6" fill="#161616" font-weight="bold" text-anchor="middle">31</text>
<rect x="1288" y="661.4" width="18.8" height="10.9" fill="#2b2b2b"/>
<rect x="1289" y="662.4" width="16.8" height="8.9" fill="#383838"/>
<text x="1297.4" y="669.7" font-size="9.6" fill="#dcdcdc" font-weight="bold" text-anchor="middle">S</text>
<rect x="1311" y="661.4" width="18.8" height="10.9" fill="#2b2b2b"/>
<rect x="1312" y="662.4" width="16.8" height="8.9" fill="#383838"/>
<circle cx="1320.4" cy="666.85" r="3.2" fill="#e8e8e8"/><path d="M1320.8 665.25 v2 h-1.9" stroke="#2a2a2a" stroke-width="1.1" fill="none"/>
<rect x="1348.3" y="661.4" width="37.6" height="10.9" fill="#2b2b2b"/>
<rect x="1349.3" y="662.4" width="35.6" height="8.9" fill="#353535"/>
<path d="M1377.5 666.85 L1384.9 662.9 V670.8 Z" fill="#3e3e3e"/>
<text x="1367" y="669.7" font-size="9.8" fill="#e0e0e0" text-anchor="middle" letter-spacing="0.35" stroke="#e0e0e0" stroke-width="0.25">0.00</text>
<rect x="1388.6" y="661.4" width="21.9" height="10.9" fill="#2b2b2b"/>
<rect x="1389.6" y="662.4" width="19.9" height="8.9" fill="#f59b22"/>
<text x="1399.55" y="669.7" font-size="9.8" fill="#161616" text-anchor="middle" stroke="#161616" stroke-width="0.3">ms</text>
<rect x="1168.8" y="676.4" width="68.2" height="15.8" fill="#4e4e4e"/>
<rect x="1238.6" y="676.4" width="106.3" height="15.8" fill="#4e4e4e"/>
<rect x="1346.3" y="676.4" width="66.7" height="15.8" fill="#4e4e4e"/>
<rect x="1335.2" y="676.4" width="7.2" height="15.8" fill="#3c3c3c"/>
<rect x="1335.9" y="676.8" width="2.3" height="15.1" fill="#141414"/>
<rect x="1339.4" y="676.8" width="2.4" height="15.1" fill="#141414"/>
<rect x="1335.2" y="679" width="7.2" height="0.9" fill="#3c3c3c"/>
<rect x="1071.6" y="676.4" width="95.8" height="15.8" fill="#ffffff"/>
<g opacity="0.82">
<circle cx="1080.8" cy="684.2" r="5.8" fill="none" stroke="#303030" stroke-width="1.1"/>
<path d="M1079.1 681.3 L1083.8 684.2 L1079.1 687.1 Z" fill="#303030"/>
</g>
<text x="1092.6" y="687.6" font-size="9" fill="#303030" font-weight="bold" letter-spacing="0.08">32 Vox Atmos L</text>
<rect x="1170.8" y="678.9" width="64.2" height="10.9" fill="#2d2d2d"/>
<rect x="1171.8" y="679.9" width="62.2" height="8.9" fill="#4b4b4b"/>
<rect x="1242" y="678.9" width="41.5" height="10.9" fill="#2b2b2b"/>
<rect x="1243" y="679.9" width="39.5" height="8.9" fill="#f59b22"/>
<text x="1262.75" y="687.2" font-size="9.6" fill="#161616" font-weight="bold" text-anchor="middle">32</text>
<rect x="1288" y="678.9" width="18.8" height="10.9" fill="#2b2b2b"/>
<rect x="1289" y="679.9" width="16.8" height="8.9" fill="#383838"/>
<text x="1297.4" y="687.2" font-size="9.6" fill="#dcdcdc" font-weight="bold" text-anchor="middle">S</text>
<rect x="1311" y="678.9" width="18.8" height="10.9" fill="#2b2b2b"/>
<rect x="1312" y="679.9" width="16.8" height="8.9" fill="#383838"/>
<circle cx="1320.4" cy="684.35" r="3.2" fill="#e8e8e8"/><path d="M1320.8 682.75 v2 h-1.9" stroke="#2a2a2a" stroke-width="1.1" fill="none"/>
<rect x="1348.3" y="678.9" width="37.6" height="10.9" fill="#2b2b2b"/>
<rect x="1349.3" y="679.9" width="35.6" height="8.9" fill="#353535"/>
<path d="M1377.5 684.35 L1384.9 680.4 V688.3 Z" fill="#3e3e3e"/>
<text x="1367" y="687.2" font-size="9.8" fill="#e0e0e0" text-anchor="middle" letter-spacing="0.35" stroke="#e0e0e0" stroke-width="0.25">0.00</text>
<rect x="1388.6" y="678.9" width="21.9" height="10.9" fill="#2b2b2b"/>
<rect x="1389.6" y="679.9" width="19.9" height="8.9" fill="#f59b22"/>
<text x="1399.55" y="687.2" font-size="9.8" fill="#161616" text-anchor="middle" stroke="#161616" stroke-width="0.3">ms</text>
<rect x="1168.8" y="693.8" width="68.2" height="15.9" fill="#565656"/>
<rect x="1238.6" y="693.8" width="106.3" height="15.9" fill="#565656"/>
<rect x="1346.3" y="693.8" width="66.7" height="15.9" fill="#565656"/>
<rect x="1335.2" y="693.8" width="7.2" height="15.9" fill="#3c3c3c"/>
<rect x="1335.9" y="694.2" width="2.3" height="15.2" fill="#141414"/>
<rect x="1339.4" y="694.2" width="2.4" height="15.2" fill="#141414"/>
<rect x="1335.2" y="696.4" width="7.2" height="0.9" fill="#3c3c3c"/>
<rect x="1071.6" y="693.8" width="95.8" height="15.9" fill="#ffffff"/>
<g opacity="0.82">
<circle cx="1080.8" cy="701.6" r="5.8" fill="none" stroke="#303030" stroke-width="1.1"/>
<path d="M1079.1 698.7 L1083.8 701.6 L1079.1 704.5 Z" fill="#303030"/>
</g>
<text x="1092.6" y="705" font-size="9" fill="#303030" font-weight="bold" letter-spacing="0.08">33 Vox Atmos</text>
<rect x="1170.8" y="696.3" width="64.2" height="10.9" fill="#2d2d2d"/>
<rect x="1171.8" y="697.3" width="62.2" height="8.9" fill="#585858"/>
<rect x="1242" y="696.3" width="41.5" height="10.9" fill="#2b2b2b"/>
<rect x="1243" y="697.3" width="39.5" height="8.9" fill="#f59b22"/>
<text x="1262.75" y="704.6" font-size="9.6" fill="#161616" font-weight="bold" text-anchor="middle">33</text>
<rect x="1288" y="696.3" width="18.8" height="10.9" fill="#2b2b2b"/>
<rect x="1289" y="697.3" width="16.8" height="8.9" fill="#383838"/>
<text x="1297.4" y="704.6" font-size="9.6" fill="#dcdcdc" font-weight="bold" text-anchor="middle">S</text>
<rect x="1311" y="696.3" width="18.8" height="10.9" fill="#2b2b2b"/>
<rect x="1312" y="697.3" width="16.8" height="8.9" fill="#383838"/>
<circle cx="1320.4" cy="701.75" r="3.2" fill="#e8e8e8"/><path d="M1320.8 700.15 v2 h-1.9" stroke="#2a2a2a" stroke-width="1.1" fill="none"/>
<rect x="1348.3" y="696.3" width="37.6" height="10.9" fill="#2b2b2b"/>
<rect x="1349.3" y="697.3" width="35.6" height="8.9" fill="#353535"/>
<path d="M1377.5 701.75 L1384.9 697.8 V705.7 Z" fill="#3e3e3e"/>
<text x="1367" y="704.6" font-size="9.8" fill="#e0e0e0" text-anchor="middle" letter-spacing="0.35" stroke="#e0e0e0" stroke-width="0.25">0.00</text>
<rect x="1388.6" y="696.3" width="21.9" height="10.9" fill="#2b2b2b"/>
<rect x="1389.6" y="697.3" width="19.9" height="8.9" fill="#f59b22"/>
<text x="1399.55" y="704.6" font-size="9.8" fill="#161616" text-anchor="middle" stroke="#161616" stroke-width="0.3">ms</text>
<rect x="1168.8" y="819" width="68.2" height="16.1" fill="#4e4e4e"/>
<rect x="1238.6" y="819" width="106.3" height="16.1" fill="#4e4e4e"/>
<rect x="1346.3" y="819" width="66.7" height="16.1" fill="#4e4e4e"/>
<rect x="1335.2" y="819" width="7.2" height="16.1" fill="#3c3c3c"/>
<rect x="1335.9" y="819.4" width="2.3" height="15.4" fill="#141414"/>
<rect x="1339.4" y="819.4" width="2.4" height="15.4" fill="#141414"/>
<rect x="1335.2" y="821.6" width="7.2" height="0.9" fill="#3c3c3c"/>
<rect x="1067.3" y="819" width="100.1" height="16.1" fill="#3b3b3b"/>
<g opacity="0.82">
<circle cx="1076.5" cy="826.8" r="5.8" fill="none" stroke="#cfcfcf" stroke-width="1.1"/>
<path d="M1074.8 823.9 L1079.5 826.8 L1074.8 829.7 Z" fill="#cfcfcf"/>
</g>
<text x="1088.1" y="830.2" font-size="9" fill="#e4e4e4" font-weight="bold" letter-spacing="0.08">A Return</text>
<rect x="1170.8" y="821.5" width="64.2" height="10.9" fill="#2d2d2d"/>
<rect x="1171.8" y="822.5" width="62.2" height="8.9" fill="#4b4b4b"/>
<rect x="1242" y="821.5" width="41.5" height="10.9" fill="#2b2b2b"/>
<rect x="1243" y="822.5" width="39.5" height="8.9" fill="#f59b22"/>
<text x="1262.75" y="829.8" font-size="9.6" fill="#161616" font-weight="bold" text-anchor="middle">A</text>
<rect x="1288" y="821.5" width="15.4" height="10.9" fill="#2b2b2b"/>
<rect x="1289" y="822.5" width="13.4" height="8.9" fill="#383838"/>
<text x="1295.7" y="829.8" font-size="9.6" fill="#dcdcdc" font-weight="bold" text-anchor="middle">S</text>
<rect x="1306.8" y="821.5" width="23" height="10.9" fill="#2b2b2b"/>
<rect x="1307.8" y="822.5" width="21" height="8.9" fill="#f59b22"/>
<text x="1318.3" y="829.8" font-size="9.4" fill="#161616" text-anchor="middle" stroke="#161616" stroke-width="0.3">Post</text>
<rect x="1348.3" y="821.5" width="37.6" height="10.9" fill="#2b2b2b"/>
<rect x="1349.3" y="822.5" width="35.6" height="8.9" fill="#353535"/>
<path d="M1377.5 826.95 L1384.9 823 V830.9 Z" fill="#3e3e3e"/>
<text x="1367" y="829.8" font-size="9.8" fill="#e0e0e0" text-anchor="middle" letter-spacing="0.35" stroke="#e0e0e0" stroke-width="0.25">0.00</text>
<rect x="1388.6" y="821.5" width="21.9" height="10.9" fill="#2b2b2b"/>
<rect x="1389.6" y="822.5" width="19.9" height="8.9" fill="#f59b22"/>
<text x="1399.55" y="829.8" font-size="9.8" fill="#161616" text-anchor="middle" stroke="#161616" stroke-width="0.3">ms</text>
<rect x="1168.8" y="836.7" width="68.2" height="14.8" fill="#4e4e4e"/>
<rect x="1238.6" y="836.7" width="106.3" height="14.8" fill="#4e4e4e"/>
<rect x="1346.3" y="836.7" width="66.7" height="14.8" fill="#4e4e4e"/>
<rect x="1335.2" y="836.7" width="7.2" height="14.8" fill="#3c3c3c"/>
<rect x="1335.9" y="837.1" width="2.3" height="14.1" fill="#141414"/>
<rect x="1339.4" y="837.1" width="2.4" height="14.1" fill="#141414"/>
<rect x="1335.2" y="839.3" width="7.2" height="0.9" fill="#3c3c3c"/>
<rect x="1067.3" y="836.7" width="100.1" height="14.8" fill="#3b3b3b"/>
<g opacity="0.82">
<circle cx="1076.5" cy="844.5" r="5.8" fill="none" stroke="#cfcfcf" stroke-width="1.1"/>
<path d="M1074.8 841.6 L1079.5 844.5 L1074.8 847.4 Z" fill="#cfcfcf"/>
</g>
<text x="1088.1" y="847.9" font-size="9" fill="#e4e4e4" font-weight="bold" letter-spacing="0.08">Master</text>
<rect x="1170.8" y="839" width="64.2" height="11.3" fill="#242424"/>
<rect x="1171.8" y="840" width="62.2" height="9.3" fill="#2c2c2c"/>
<line x1="1173" y1="841.7" x2="1173" y2="847.6" stroke="#3c3c3c" stroke-width="0.9"/>
<line x1="1174.6" y1="841.7" x2="1174.6" y2="847.6" stroke="#3c3c3c" stroke-width="0.9"/>
<text x="1178.6" y="847.4" font-size="9.8" fill="#e6e6e6" letter-spacing="0.3">1/2</text>
<path d="M1226.2 842.75 h5.6 l-2.8 3.9 z" fill="#e6e6e6"/>
<rect x="1242" y="839.2" width="41.5" height="10.9" fill="#2b2b2b"/>
<rect x="1243" y="840.2" width="39.5" height="8.9" fill="#333"/>
<rect x="1243" y="840.2" width="33.5" height="8.9" fill="#1f7f92"/>
<text x="1262.75" y="847.5" font-size="9.6" fill="#e6e6e6" font-weight="bold" text-anchor="middle">0</text>
<rect x="1288" y="839.2" width="41.8" height="10.9" fill="#2b2b2b"/>
<rect x="1289" y="840.2" width="39.8" height="8.9" fill="#333"/>
<rect x="1289" y="840.2" width="33.5" height="8.9" fill="#2574d8"/>
<text x="1308.9" y="847.5" font-size="9.6" fill="#e6e6e6" font-weight="bold" text-anchor="middle">0</text>
<rect x="1348.3" y="839.2" width="37.6" height="10.9" fill="#2b2b2b"/>
<rect x="1349.3" y="840.2" width="35.6" height="8.9" fill="#353535"/>
<path d="M1377.5 844.65 L1384.9 840.7 V848.6 Z" fill="#3e3e3e"/>
<text x="1367" y="847.5" font-size="9.8" fill="#e0e0e0" text-anchor="middle" letter-spacing="0.35" stroke="#e0e0e0" stroke-width="0.25">0.00</text>
<rect x="1388.6" y="839.2" width="21.9" height="10.9" fill="#2b2b2b"/>
<rect x="1389.6" y="840.2" width="19.9" height="8.9" fill="#f59b22"/>
<text x="1399.55" y="847.5" font-size="9.8" fill="#161616" text-anchor="middle" stroke="#161616" stroke-width="0.3">ms</text>
<rect x="1067.3" y="123" width="4.3" height="233.4" fill="#ffa374"/>
<rect x="1071.6" y="170.3" width="95.8" height="47.9" fill="#a1705d"/>
<rect x="1074.3" y="172" width="89.5" height="11.6" fill="#242424"/>
<rect x="1075.3" y="173" width="87.5" height="9.6" fill="#2c2c2c"/>
<text x="1085.6" y="180.7" font-size="9.6" fill="#e6e6e6" letter-spacing="0.25">None</text>
<path d="M1155 175.9 h5.6 l-2.8 3.9 z" fill="#e6e6e6"/>
<rect x="1074.3" y="188.2" width="89.5" height="11" fill="#2a2a2a"/>
<rect x="1075.3" y="189.2" width="87.5" height="9" fill="#9b6e5e"/>
<rect x="1067.3" y="358" width="4.3" height="98.7" fill="#b03535"/>
<rect x="1071.6" y="373.8" width="95.8" height="47.8" fill="#a1676b"/>
<rect x="1074.3" y="376.4" width="89.5" height="10.6" fill="#242424"/>
<rect x="1075.3" y="377.4" width="87.5" height="8.6" fill="#2c2c2c"/>
<text x="1085.6" y="384.1" font-size="9.6" fill="#e6e6e6" letter-spacing="0.25">None</text>
<path d="M1155 379.8 h5.6 l-2.8 3.9 z" fill="#e6e6e6"/>
<rect x="1074.3" y="391.2" width="89.5" height="11.5" fill="#2a2a2a"/>
<rect x="1075.3" y="392.2" width="87.5" height="9.5" fill="#9b666a"/>
<rect x="1067.3" y="458.3" width="4.3" height="98.8" fill="#ff94a6"/>
<rect x="1071.6" y="474.1" width="95.8" height="47.9" fill="#a16a76"/>
<rect x="1074.3" y="476.6" width="89.5" height="10.6" fill="#242424"/>
<rect x="1075.3" y="477.6" width="87.5" height="8.6" fill="#2c2c2c"/>
<text x="1085.6" y="484.3" font-size="9.6" fill="#e6e6e6" letter-spacing="0.25">None</text>
<path d="M1155 480 h5.6 l-2.8 3.9 z" fill="#e6e6e6"/>
<rect x="1074.3" y="491.4" width="89.5" height="11.5" fill="#2a2a2a"/>
<rect x="1075.3" y="492.4" width="87.5" height="9.5" fill="#9b6772"/>
<rect x="1067.3" y="576" width="4.3" height="133.7" fill="#ffffff"/>
<rect x="1071.6" y="591.8" width="95.8" height="47.6" fill="#868686"/>
<rect x="1074" y="594.3" width="90.4" height="11.3" fill="#242424"/>
<rect x="1075" y="595.3" width="88.4" height="9.3" fill="#2c2c2c"/>
<text x="1085.3" y="602.7" font-size="9.6" fill="#e6e6e6" letter-spacing="0.25">Mixer</text>
<path d="M1155.6 598.05 h5.6 l-2.8 3.9 z" fill="#e6e6e6"/>
<rect x="1074" y="609.7" width="90.4" height="11.2" fill="#242424"/>
<rect x="1075" y="610.7" width="88.4" height="9.2" fill="#2c2c2c"/>
<text x="1085.3" y="618" font-size="9.6" fill="#e6e6e6" letter-spacing="0.25">Speaker On</text>
<path d="M1155.6 613.4 h5.6 l-2.8 3.9 z" fill="#e6e6e6"/>
<circle cx="1157.7" cy="632" r="4.7" fill="#2c2c2c"/><path d="M1155.3 632 h4.8 M1157.7 629.6 v4.8" stroke="#d8d8d8" stroke-width="1.1"/>
<rect x="1413" y="105.2" width="0.8" height="747.4" fill="#2a2a2a"/>
</svg>
</body></html>
